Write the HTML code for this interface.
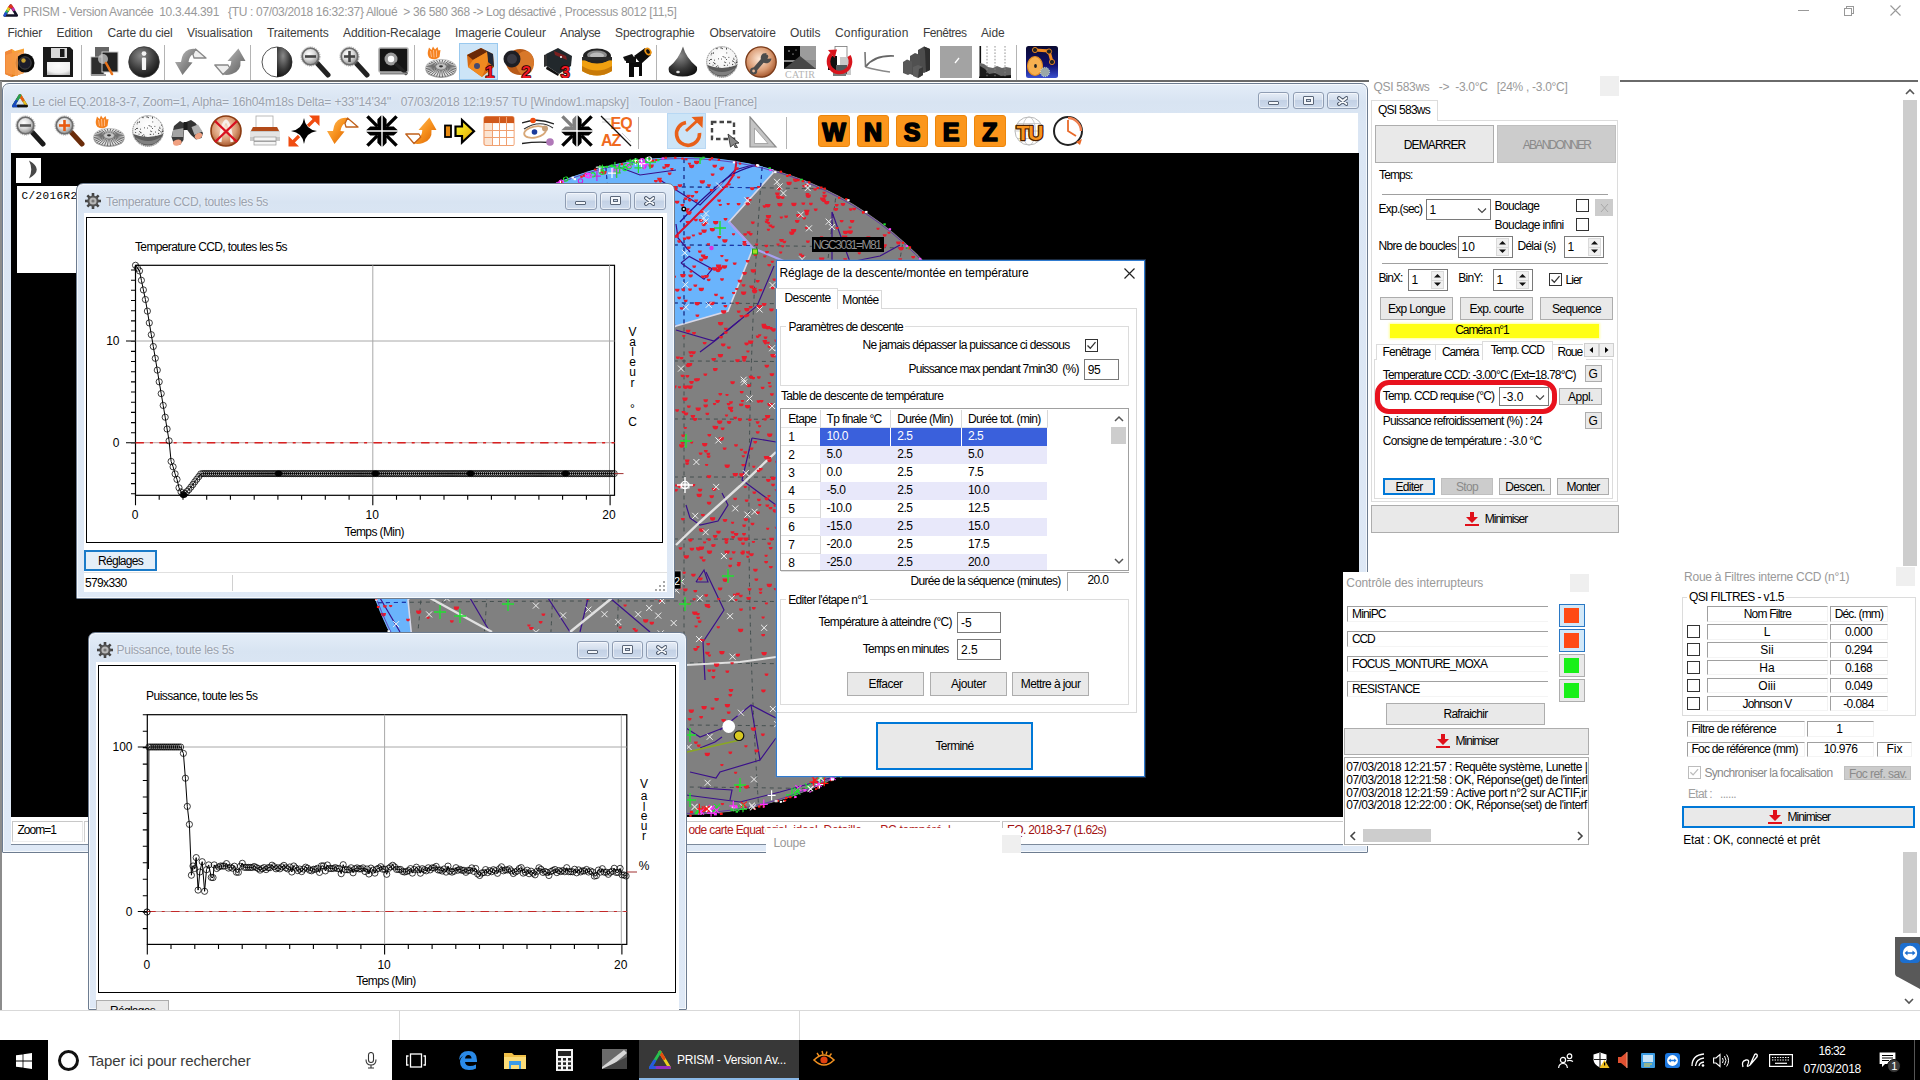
<!DOCTYPE html>
<html><head><meta charset="utf-8"><title>PRISM</title>
<style>
*{box-sizing:border-box}
html,body{margin:0;padding:0}
body{width:1920px;height:1080px;position:relative;overflow:hidden;background:#fff;font-family:"Liberation Sans",sans-serif;font-size:12px;color:#000}
.a{position:absolute}
.t{position:absolute;white-space:pre}
svg{overflow:hidden}
</style></head>
<body>
<svg width="0" height="0" style="position:absolute"><defs>
<radialGradient id="gLens" cx="40%" cy="35%" r="70%"><stop offset="0" stop-color="#fff"/><stop offset="0.5" stop-color="#d8d8d8"/><stop offset="1" stop-color="#8a8a8a"/></radialGradient>
<radialGradient id="gDark" cx="40%" cy="30%" r="75%"><stop offset="0" stop-color="#8a8a8a"/><stop offset="0.6" stop-color="#3a3a3a"/><stop offset="1" stop-color="#111"/></radialGradient>
<linearGradient id="gGrey" x1="0" y1="0" x2="1" y2="1"><stop offset="0" stop-color="#c8c8c8"/><stop offset="0.5" stop-color="#8c8c8c"/><stop offset="1" stop-color="#5c5c5c"/></linearGradient>
<linearGradient id="gOr" x1="0" y1="0" x2="1" y2="1"><stop offset="0" stop-color="#ffc46a"/><stop offset="0.5" stop-color="#f7921e"/><stop offset="1" stop-color="#d85f00"/></linearGradient>
<linearGradient id="gOrV" x1="0" y1="0" x2="0" y2="1"><stop offset="0" stop-color="#f9a53a"/><stop offset="1" stop-color="#e07a10"/></linearGradient>
<radialGradient id="gCop" cx="45%" cy="40%" r="65%"><stop offset="0" stop-color="#ffe9d8"/><stop offset="0.6" stop-color="#d99a72"/><stop offset="1" stop-color="#9a4a20"/></radialGradient>
<linearGradient id="gCont" x1="0" y1="0" x2="1" y2="0"><stop offset="0" stop-color="#fff"/><stop offset="0.5" stop-color="#fff"/><stop offset="0.5" stop-color="#222"/><stop offset="1" stop-color="#999"/></linearGradient>
<radialGradient id="gSph" cx="50%" cy="30%" r="75%"><stop offset="0" stop-color="#fff"/><stop offset="0.7" stop-color="#f0f0f0"/><stop offset="1" stop-color="#aaa"/></radialGradient>
<linearGradient id="gYel" x1="0" y1="0" x2="1" y2="1"><stop offset="0" stop-color="#ffff30"/><stop offset="1" stop-color="#e0a000"/></linearGradient>
<linearGradient id="gBlue" x1="0" y1="0" x2="0" y2="1"><stop offset="0" stop-color="#0a0a30"/><stop offset="0.6" stop-color="#101070"/><stop offset="1" stop-color="#3a50d0"/></linearGradient>
</defs></svg>
<!-- part_top -->
<div class="a" style="left:0;top:0;width:1920px;height:23px;background:#fff"></div>
<svg class="a" style="left:2.5px;top:3px" width="15.5" height="15.5" viewBox="0 0 18 18"><path d="M9 3 L16 14.5 L2 14.5Z" fill="none" stroke-linejoin="round" stroke-width="3" stroke="#141428"/><path d="M7 5.5 L9 3 L11 5.5" stroke="#e03020" stroke-width="3" stroke-linecap="round" stroke-linejoin="round" fill="none"/><path d="M7 5.5 L5 9" stroke="#e8d020" stroke-width="3"/><path d="M5 9 L3.2 12" stroke="#30c060" stroke-width="3"/><path d="M11 5.5 L13 9" stroke="#c030a0" stroke-width="3"/><path d="M3.2 12 L2 14.5" stroke="#2050d0" stroke-width="3" stroke-linecap="round"/></svg>
<div class="t" style="left:23.0px;top:4.0px;font-size:12px;line-height:16px;color:#999;letter-spacing:-0.330px;">PRISM - Version Avancée  10.3.44.391   {TU : 07/03/2018 16:32:37} Alloué  &gt; 36 580 368 -&gt; Log désactivé , Processus 8012 [11,5]</div>
<div class="a" style="left:1798px;top:10px;width:11px;height:1px;background:#999;"></div>
<div class="a" style="left:1846px;top:6px;width:8px;height:8px;border:1px solid #999"></div><div class="a" style="left:1844px;top:8px;width:8px;height:8px;border:1px solid #999;background:#fff"></div>
<svg class="a" style="left:1890px;top:5px" width="11" height="11" viewBox="0 0 11 11"><path d="M0.5 0.5 L10.5 10.5 M10.5 0.5 L0.5 10.5" stroke="#999" stroke-width="1.1"/></svg>
<div class="t" style="left:7.5px;top:25.0px;font-size:12px;line-height:16px;color:#3c3c3c;letter-spacing:-0.215px;">Fichier</div>
<div class="t" style="left:56.5px;top:25.0px;font-size:12px;line-height:16px;color:#3c3c3c;letter-spacing:-0.099px;">Edition</div>
<div class="t" style="left:107.5px;top:25.0px;font-size:12px;line-height:16px;color:#3c3c3c;letter-spacing:-0.182px;">Carte du ciel</div>
<div class="t" style="left:187.0px;top:25.0px;font-size:12px;line-height:16px;color:#3c3c3c;letter-spacing:-0.127px;">Visualisation</div>
<div class="t" style="left:267.0px;top:25.0px;font-size:12px;line-height:16px;color:#3c3c3c;letter-spacing:-0.128px;">Traitements</div>
<div class="t" style="left:343.0px;top:25.0px;font-size:12px;line-height:16px;color:#3c3c3c;letter-spacing:-0.027px;">Addition-Recalage</div>
<div class="t" style="left:455.0px;top:25.0px;font-size:12px;line-height:16px;color:#3c3c3c;letter-spacing:-0.078px;">Imagerie Couleur</div>
<div class="t" style="left:560.0px;top:25.0px;font-size:12px;line-height:16px;color:#3c3c3c;letter-spacing:-0.327px;">Analyse</div>
<div class="t" style="left:615.0px;top:25.0px;font-size:12px;line-height:16px;color:#3c3c3c;letter-spacing:-0.128px;">Spectrographie</div>
<div class="t" style="left:709.6px;top:25.0px;font-size:12px;line-height:16px;color:#3c3c3c;letter-spacing:-0.225px;">Observatoire</div>
<div class="t" style="left:790.0px;top:25.0px;font-size:12px;line-height:16px;color:#3c3c3c;letter-spacing:-0.046px;">Outils</div>
<div class="t" style="left:835.0px;top:25.0px;font-size:12px;line-height:16px;color:#3c3c3c;letter-spacing:0.163px;">Configuration</div>
<div class="t" style="left:923.0px;top:25.0px;font-size:12px;line-height:16px;color:#3c3c3c;letter-spacing:-0.482px;">Fenêtres</div>
<div class="t" style="left:981.0px;top:25.0px;font-size:12px;line-height:16px;color:#3c3c3c;letter-spacing:-0.129px;">Aide</div>
<div class="a" style="left:459px;top:43px;width:39px;height:37px;background:#cce4f7;border:1px solid #99c9ef;"></div>
<svg class="a" style="left:3px;top:46px" width="32" height="32" viewBox="0 0 32 32"><path d="M2 6 L9 3 L12 5 L21 2.5 L21 27 L9 31 L2 28Z" fill="url(#gOrV)"/><path d="M2 6 L9 3 L9 31 L2 28Z" fill="#f0883a"/><path d="M12 8 L21 5 L21 27 L12 30Z" fill="#f7a45a"/><circle cx="22" cy="17" r="9.5" fill="#0a0a0a"/><circle cx="22" cy="17" r="6.2" fill="#1c1c2a" stroke="#444" stroke-width="1"/><circle cx="20.5" cy="14.5" r="2.2" fill="#c8a030"/><path d="M3 9 L15 5 L15 30 L3 27Z" fill="#f79a46" opacity="0.85"/></svg>
<svg class="a" style="left:42px;top:46px" width="32" height="32" viewBox="0 0 32 32"><path d="M1 1 L28 1 L31 4 L31 31 L1 31Z" fill="#1a1a1a"/><rect x="9" y="2" width="16" height="10" fill="#d8d8d8"/><rect x="18" y="3" width="4.5" height="8" fill="#1a1a1a"/><rect x="5" y="16" width="23" height="13" fill="#f2f2f2"/><rect x="5" y="16" width="23" height="13" fill="url(#gSph)" opacity="0.7"/></svg>
<svg class="a" style="left:89px;top:46px" width="32" height="32" viewBox="0 0 32 32"><rect x="6" y="1" width="14" height="12" fill="#666"/><rect x="2" y="11" width="13" height="18" fill="#2e2e2e" stroke="#bbb" stroke-width="0.8"/><rect x="13" y="6" width="16" height="20" fill="#222" stroke="#ccc" stroke-width="1"/><circle cx="14" cy="13" r="5" fill="#ccc" opacity="0.75"/><path d="M17 17 L23 28" stroke="#e8721a" stroke-width="2.6" stroke-linecap="round"/><rect x="2" y="28" width="15" height="2" fill="#999"/></svg>
<svg class="a" style="left:128px;top:46px" width="32" height="32" viewBox="0 0 32 32"><circle cx="16" cy="16" r="15.3" fill="url(#gDark)" stroke="#333" stroke-width="0.8"/><circle cx="16" cy="7.6" r="2.4" fill="#f4f4f4"/><rect x="13.9" y="11.6" width="4.2" height="12.5" rx="1.2" fill="#f4f4f4"/></svg>
<svg class="a" style="left:175px;top:46px" width="32" height="32" viewBox="0 0 32 32"><path d="M0 16 L6 16 Q7 6 14 3.5 Q18 2.2 20.5 3 L18 8.5 Q14.5 9.5 13.5 16 L17.5 16.5 L7.5 29Z" fill="url(#gGrey)"/><path d="M20.5 3 L31 12 L19 12 L18 8.5Z" fill="#eee" stroke="#888" stroke-width="1.3" stroke-linejoin="round"/></svg>
<svg class="a" style="left:214px;top:46px" width="32" height="32" viewBox="0 0 32 32"><path d="M24.4 2.5 L31.5 15 L26.5 15 Q27.5 25 18 28 Q13 29.5 9 28.5 L13 22 Q17 22 17.3 15 L13.5 15Z" fill="url(#gGrey)"/><path d="M0.8 19 L14 19 L15.7 22 L9 28.5Z" fill="#eee" stroke="#888" stroke-width="1.3" stroke-linejoin="round"/></svg>
<svg class="a" style="left:261px;top:46px" width="32" height="32" viewBox="0 0 32 32"><circle cx="16" cy="16" r="15" fill="url(#gCont)" stroke="#555" stroke-width="1"/><path d="M16 1 A15 15 0 0 1 16 31Z" fill="url(#gDark)"/></svg>
<svg class="a" style="left:300px;top:46px" width="32" height="32" viewBox="0 0 32 32"><path d="M17.5 17.5 L28 29" stroke="#222" stroke-width="5" stroke-linecap="round"/><circle cx="10.5" cy="10.5" r="9.6" fill="none" stroke="#999" stroke-width="0.8" stroke-dasharray="1.2 1"/><circle cx="10.5" cy="10.5" r="8.3" fill="url(#gLens)" stroke="#6e6e6e" stroke-width="1.8"/><rect x="5" y="9.2" width="11" height="2.6" fill="#444"/></svg>
<svg class="a" style="left:339px;top:46px" width="32" height="32" viewBox="0 0 32 32"><path d="M17.5 17.5 L28 29" stroke="#222" stroke-width="5" stroke-linecap="round"/><circle cx="10.5" cy="10.5" r="9.6" fill="none" stroke="#999" stroke-width="0.8" stroke-dasharray="1.2 1"/><circle cx="10.5" cy="10.5" r="8.3" fill="url(#gLens)" stroke="#6e6e6e" stroke-width="1.8"/><rect x="5" y="9.2" width="11" height="2.6" fill="#444"/><rect x="9.2" y="5" width="2.6" height="11" fill="#444"/></svg>
<svg class="a" style="left:378px;top:46px" width="32" height="32" viewBox="0 0 32 32"><rect x="1" y="2" width="29" height="24" rx="1.5" fill="#151515" stroke="#b0b0b0" stroke-width="1.6"/><circle cx="13" cy="13" r="6.5" fill="#bbb" opacity="0.8"/><circle cx="13" cy="13" r="3.2" fill="#fff"/><path d="M18 18 L28 27.5" stroke="#222" stroke-width="3.2" stroke-linecap="round"/><rect x="2" y="26.5" width="27" height="2" fill="#888"/></svg>
<svg class="a" style="left:425px;top:46px" width="32" height="32" viewBox="0 0 32 32"><ellipse cx="16" cy="23.5" rx="15.5" ry="8.5" fill="#9a9a9a"/><ellipse cx="16" cy="22" rx="15.5" ry="8.6" fill="#e2e2e2" stroke="#a0a0a0" stroke-width="0.6"/><line x1="20.5" y1="21.0" x2="31.0" y2="22.5" stroke="#6a6a6a" stroke-width="1"/><line x1="20.4" y1="21.5" x2="30.7" y2="24.3" stroke="#6a6a6a" stroke-width="1"/><line x1="20.1" y1="22.0" x2="29.7" y2="26.0" stroke="#6a6a6a" stroke-width="1"/><line x1="19.6" y1="22.4" x2="28.1" y2="27.6" stroke="#6a6a6a" stroke-width="1"/><line x1="19.0" y1="22.8" x2="26.0" y2="28.9" stroke="#6a6a6a" stroke-width="1"/><line x1="18.3" y1="23.1" x2="23.5" y2="29.9" stroke="#6a6a6a" stroke-width="1"/><line x1="17.4" y1="23.3" x2="20.6" y2="30.7" stroke="#6a6a6a" stroke-width="1"/><line x1="16.5" y1="23.4" x2="17.6" y2="31.1" stroke="#6a6a6a" stroke-width="1"/><line x1="15.5" y1="23.4" x2="14.4" y2="31.1" stroke="#6a6a6a" stroke-width="1"/><line x1="14.6" y1="23.3" x2="11.4" y2="30.7" stroke="#6a6a6a" stroke-width="1"/><line x1="13.8" y1="23.1" x2="8.5" y2="29.9" stroke="#6a6a6a" stroke-width="1"/><line x1="13.0" y1="22.8" x2="6.0" y2="28.9" stroke="#6a6a6a" stroke-width="1"/><line x1="12.4" y1="22.4" x2="3.9" y2="27.6" stroke="#6a6a6a" stroke-width="1"/><line x1="11.9" y1="22.0" x2="2.3" y2="26.0" stroke="#6a6a6a" stroke-width="1"/><line x1="11.6" y1="21.5" x2="1.3" y2="24.3" stroke="#6a6a6a" stroke-width="1"/><line x1="11.5" y1="21.0" x2="1.0" y2="22.5" stroke="#6a6a6a" stroke-width="1"/><line x1="11.6" y1="20.5" x2="1.3" y2="20.7" stroke="#6a6a6a" stroke-width="1"/><line x1="11.9" y1="20.0" x2="2.3" y2="19.0" stroke="#6a6a6a" stroke-width="1"/><line x1="12.4" y1="19.6" x2="3.9" y2="17.4" stroke="#6a6a6a" stroke-width="1"/><line x1="13.0" y1="19.2" x2="6.0" y2="16.1" stroke="#6a6a6a" stroke-width="1"/><line x1="13.7" y1="18.9" x2="8.5" y2="15.1" stroke="#6a6a6a" stroke-width="1"/><line x1="14.6" y1="18.7" x2="11.4" y2="14.3" stroke="#6a6a6a" stroke-width="1"/><line x1="15.5" y1="18.6" x2="14.4" y2="13.9" stroke="#6a6a6a" stroke-width="1"/><line x1="16.5" y1="18.6" x2="17.6" y2="13.9" stroke="#6a6a6a" stroke-width="1"/><line x1="17.4" y1="18.7" x2="20.6" y2="14.3" stroke="#6a6a6a" stroke-width="1"/><line x1="18.2" y1="18.9" x2="23.5" y2="15.1" stroke="#6a6a6a" stroke-width="1"/><line x1="19.0" y1="19.2" x2="26.0" y2="16.1" stroke="#6a6a6a" stroke-width="1"/><line x1="19.6" y1="19.6" x2="28.1" y2="17.4" stroke="#6a6a6a" stroke-width="1"/><line x1="20.1" y1="20.0" x2="29.7" y2="19.0" stroke="#6a6a6a" stroke-width="1"/><line x1="20.4" y1="20.5" x2="30.7" y2="20.7" stroke="#6a6a6a" stroke-width="1"/><ellipse cx="16" cy="20.5" rx="5.2" ry="2.8" fill="#c4c4c4" stroke="#999" stroke-width="0.5"/><ellipse cx="16" cy="20.3" rx="2" ry="1.1" fill="#333"/><path d="M3 5 L4 1.5 L6.5 4 L8 0.5 L10 3.5 L12.5 1 L13.5 4.5 L15.5 4 L14.5 11 Q10 15 4.5 12 Q2 9 3 5Z" fill="#f58220"/><path d="M5.5 5 L6.5 11 M8.5 4 L9 11.5 M11.5 4.5 L11.5 11" stroke="#ffc090" stroke-width="0.9"/></svg>
<svg class="a" style="left:464px;top:46px" width="32" height="32" viewBox="0 0 32 32"><path d="M3 9 L17 2 L29 8 L30 21 L18 31 L4 21Z" fill="#d86a10"/><path d="M17 2 L29 8 L30 21 L24 16 L23 6Z" fill="#222a3a"/><path d="M3 9 L17 2 L23 6 L9 14Z" fill="#6a2a08"/><path d="M9 14 L23 6 L24 16 L18 31 L4 21Z" fill="#f08a20"/><circle cx="13" cy="20" r="3" fill="#444a70"/><text x="21" y="31.5" font-family="Liberation Sans" font-weight="bold" font-size="17" fill="#f01822" stroke="#200" stroke-width="1.6" paint-order="stroke" stroke-linejoin="round">1</text></svg>
<svg class="a" style="left:503px;top:46px" width="32" height="32" viewBox="0 0 32 32"><ellipse cx="17" cy="16" rx="14" ry="13" fill="#b85a18"/><ellipse cx="22" cy="17" rx="9" ry="12" fill="#d8782a"/><circle cx="9" cy="13" r="8.5" fill="#1e1e24"/><circle cx="9" cy="13" r="5" fill="#3a3a44"/><text x="18.5" y="31.5" font-family="Liberation Sans" font-weight="bold" font-size="17" fill="#f01822" stroke="#200" stroke-width="1.6" paint-order="stroke" stroke-linejoin="round">2</text></svg>
<svg class="a" style="left:542px;top:46px" width="32" height="32" viewBox="0 0 32 32"><path d="M4 8 L16 2 L30 10 L29 20 L17 28 L5 20Z" fill="#22282c"/><path d="M12 5 L24 10 L25 14 L13 9Z" fill="#7a2020"/><path d="M2 9 L5 8 L5 20 L2 21Z" fill="#333"/><path d="M5 20 L17 28 L16 30 L4 23Z" fill="#111"/><circle cx="19" cy="11" r="1" fill="#fff"/><text x="18.5" y="31.5" font-family="Liberation Sans" font-weight="bold" font-size="17" fill="#f01822" stroke="#200" stroke-width="1.6" paint-order="stroke" stroke-linejoin="round">3</text></svg>
<svg class="a" style="left:581px;top:46px" width="32" height="32" viewBox="0 0 32 32"><path d="M1 12 L1 25 Q16 34 31 25 L31 12Z" fill="#f0a010"/><path d="M1 20 L1 25 Q16 34 31 25 L31 20 Q16 29 1 20Z" fill="#c87a08"/><ellipse cx="16" cy="10" rx="14" ry="7.5" fill="#222"/><ellipse cx="16" cy="9" rx="10" ry="4.6" fill="#8a8a8a"/><ellipse cx="16" cy="9.5" rx="7" ry="3" fill="#bbb"/><rect x="1" y="11" width="30" height="3.4" fill="#2a2a2a"/></svg>
<svg class="a" style="left:620px;top:46px" width="32" height="32" viewBox="0 0 32 32"><path d="M14 10 L25 2 L31 9 L21 18Z" fill="#0c0c0c"/><ellipse cx="28" cy="5.5" rx="3.2" ry="4.2" fill="#e89010" transform="rotate(-35 28 5.5)"/><ellipse cx="28" cy="5.5" rx="1.6" ry="2.4" fill="#111" transform="rotate(-35 28 5.5)"/><path d="M3 11 L12 8 L14 11 L5 15Z" fill="#111"/><path d="M9 16 L22 16 L22 30 L19 30 L19 21 L14 21 L14 31 L9 31Z" fill="#0a0a0a"/><rect x="6" y="11" width="10" height="6" fill="#111"/></svg>
<svg class="a" style="left:667px;top:46px" width="32" height="32" viewBox="0 0 32 32"><path d="M16 0.5 Q19 12 30 21 Q31 27 25 29 Q16 32 6 29 Q0 26 2 21 Q12 13 16 0.5Z" fill="url(#gDark)"/><ellipse cx="11" cy="26" rx="1.8" ry="1.2" fill="#ddd"/></svg>
<svg class="a" style="left:706px;top:46px" width="32" height="32" viewBox="0 0 32 32"><circle cx="16" cy="16" r="15.3" fill="url(#gSph)" stroke="#555" stroke-width="0.8" stroke-dasharray="1.2 0.8"/><path d="M1.2 19 A15.3 15.3 0 0 0 30.8 19 Q16 25 1.2 19Z" fill="#5a5a5a"/><path d="M3 22 A15 15 0 0 0 29 22 Q16 30 3 22Z" fill="#8a8a8a" opacity="0.8"/><rect x="6.7" y="7.0" width="0.9" height="0.9" fill="#333"/><rect x="20.1" y="2.0" width="0.9" height="0.9" fill="#333"/><rect x="15.1" y="1.6" width="0.9" height="0.9" fill="#333"/><rect x="26.1" y="17.9" width="0.9" height="0.9" fill="#333"/><rect x="27.3" y="11.8" width="0.9" height="0.9" fill="#333"/><rect x="20.1" y="13.1" width="0.9" height="0.9" fill="#333"/><rect x="8.7" y="17.4" width="0.9" height="0.9" fill="#333"/><rect x="5.1" y="12.9" width="0.9" height="0.9" fill="#333"/><rect x="23.0" y="16.6" width="0.9" height="0.9" fill="#333"/><rect x="16.6" y="10.0" width="0.9" height="0.9" fill="#333"/><rect x="17.6" y="10.7" width="0.9" height="0.9" fill="#333"/><rect x="12.0" y="12.4" width="0.9" height="0.9" fill="#333"/><rect x="30.0" y="16.2" width="0.9" height="0.9" fill="#333"/><rect x="29.9" y="14.5" width="0.9" height="0.9" fill="#333"/><rect x="4.0" y="13.0" width="0.9" height="0.9" fill="#333"/><rect x="10.6" y="2.3" width="0.9" height="0.9" fill="#333"/><rect x="22.4" y="10.9" width="0.9" height="0.9" fill="#333"/><rect x="12.1" y="20.7" width="0.9" height="0.9" fill="#333"/><rect x="18.3" y="19.0" width="0.9" height="0.9" fill="#333"/><rect x="28.3" y="16.3" width="0.9" height="0.9" fill="#333"/><rect x="20.3" y="6.5" width="0.9" height="0.9" fill="#333"/><rect x="15.0" y="12.6" width="0.9" height="0.9" fill="#333"/><rect x="18.2" y="15.6" width="0.9" height="0.9" fill="#333"/><rect x="16.0" y="2.2" width="0.9" height="0.9" fill="#333"/><rect x="29.2" y="17.5" width="0.9" height="0.9" fill="#333"/><rect x="19.2" y="16.2" width="0.9" height="0.9" fill="#333"/><rect x="29.2" y="9.8" width="0.9" height="0.9" fill="#333"/><rect x="2.9" y="14.0" width="0.9" height="0.9" fill="#333"/><rect x="20.1" y="2.7" width="0.9" height="0.9" fill="#333"/><rect x="30.2" y="19.3" width="0.9" height="0.9" fill="#333"/><rect x="23.4" y="20.7" width="0.9" height="0.9" fill="#333"/><rect x="5.0" y="6.8" width="0.9" height="0.9" fill="#333"/><rect x="8.0" y="13.7" width="0.9" height="0.9" fill="#333"/><rect x="21.1" y="18.7" width="0.9" height="0.9" fill="#333"/><rect x="10.4" y="2.1" width="0.9" height="0.9" fill="#333"/><rect x="17.7" y="18.8" width="0.9" height="0.9" fill="#333"/><rect x="26.9" y="15.1" width="0.9" height="0.9" fill="#333"/><rect x="9.9" y="20.1" width="0.9" height="0.9" fill="#333"/><rect x="4.7" y="8.4" width="0.9" height="0.9" fill="#333"/><rect x="6.6" y="18.7" width="0.9" height="0.9" fill="#333"/><rect x="29.5" y="20.9" width="0.9" height="0.9" fill="#333"/><rect x="26.3" y="18.2" width="0.9" height="0.9" fill="#333"/><rect x="18.9" y="11.4" width="0.9" height="0.9" fill="#333"/><rect x="14.3" y="1.5" width="0.9" height="0.9" fill="#333"/><rect x="6.9" y="6.3" width="0.9" height="0.9" fill="#333"/><rect x="29.8" y="15.9" width="0.9" height="0.9" fill="#333"/><rect x="26.0" y="14.5" width="0.9" height="0.9" fill="#333"/><rect x="3.2" y="17.0" width="0.9" height="0.9" fill="#333"/><rect x="8.0" y="17.1" width="0.9" height="0.9" fill="#333"/><rect x="11.3" y="19.3" width="0.9" height="0.9" fill="#333"/><rect x="27.5" y="13.0" width="0.9" height="0.9" fill="#333"/><rect x="7.3" y="16.0" width="0.9" height="0.9" fill="#333"/></svg>
<svg class="a" style="left:745px;top:46px" width="32" height="32" viewBox="0 0 32 32"><circle cx="16" cy="16" r="15.2" fill="url(#gCop)" stroke="#7a3a18" stroke-width="1.3"/><path d="M9 24.5 L21 10.5" stroke="#4c4c4c" stroke-width="4.4" stroke-linecap="round"/><path d="M18 7.5 A5.4 5.4 0 1 0 26.5 12.5 L22.8 12.8 L20.6 10.2 L21.6 7Z" fill="#4c4c4c"/><circle cx="8.6" cy="25" r="3.6" fill="#4c4c4c"/><circle cx="8.6" cy="25" r="1.4" fill="#e8b89a"/></svg>
<svg class="a" style="left:784px;top:46px" width="32" height="32" viewBox="0 0 32 32"><rect x="0" y="0" width="16" height="16" fill="#050505"/><rect x="16" y="0" width="16" height="23" fill="#9c9c9c"/><rect x="0" y="14" width="32" height="9" fill="#8a8a8a"/><path d="M0 23 L16 10 L32 23Z" fill="#474747"/><path d="M0 16 L0 23 L9 16Z" fill="#0a0a0a"/><circle cx="5" cy="5" r="0.7" fill="#fff"/><circle cx="9" cy="8" r="0.6" fill="#fff"/><circle cx="12" cy="4" r="0.5" fill="#fff"/><text x="1" y="31.5" font-family="Liberation Serif" font-size="10" fill="#b4b4b4" textLength="30">CATIR</text></svg>
<svg class="a" style="left:823px;top:46px" width="32" height="32" viewBox="0 0 32 32"><rect x="12" y="0.5" width="12" height="22" fill="#fff" stroke="#777" stroke-width="0.8"/><rect x="5" y="10" width="9" height="14" fill="#111"/><rect x="17" y="11" width="11" height="18" fill="#c8c8c8"/><rect x="13" y="19" width="11" height="9" fill="#50585a"/><rect x="10" y="26" width="13" height="4" fill="#7a7a7a"/><path d="M8.5 8 A11 11 0 1 0 26 10" fill="none" stroke="#d8141c" stroke-width="3.6"/><path d="M5 4 L14 3.5 L11.5 12Z" fill="#d8141c"/></svg>
<svg class="a" style="left:862px;top:46px" width="32" height="32" viewBox="0 0 32 32"><path d="M3 6 L3.5 21" stroke="#777" stroke-width="1.6" fill="none"/><path d="M3.5 21 Q12 9 32 10" stroke="#666" stroke-width="1.6" fill="none"/><path d="M3.5 21 Q14 24 28 26" stroke="#888" stroke-width="1.6" fill="none"/></svg>
<svg class="a" style="left:901px;top:46px" width="32" height="32" viewBox="0 0 32 32"><path d="M17 4 L23 0.5 L29 3 L29 24 L23 27 L17 25Z" fill="#4c4c4c"/><path d="M23 0.5 L29 3 L29 24 L25 26 L24 5Z" fill="#2e2e2e"/><path d="M9 10 L14 7 L19 9 L19 27 L14 30 L9 28Z" fill="#505050"/><path d="M2 16 L6 13.5 L11 15.5 L11 27 L7 29 L2 27Z" fill="#585858"/><path d="M12 21 L17 19 L22 21 L22 29 L17 32 L12 30Z" fill="#5e5e5e"/><path d="M17 32 L22 29 L22 21 L18 23Z" fill="#3a3a3a"/></svg>
<svg class="a" style="left:940px;top:46px" width="32" height="32" viewBox="0 0 32 32"><rect x="0" y="0" width="32" height="32" fill="#a3a3a3"/><path d="M15 17 L19 12" stroke="#fff" stroke-width="1.3"/></svg>
<svg class="a" style="left:979px;top:46px" width="32" height="32" viewBox="0 0 32 32"><rect x="0.5" y="0" width="1.6" height="32" fill="#111"/><path d="M1 17 L5 18 L9 21 L14 22 L18 20 L23 22 L27 21 L32 22 L32 32 L1 32Z" fill="#666"/><path d="M1 20 L6 23 L10 28 L16 27 L22 30 L32 29 L32 32 L1 32Z" fill="#1c1c1c"/><path d="M8 0 L8 32 M16 0 L16 32 M26 0 L26 32" stroke="#888" stroke-width="0.9" stroke-dasharray="1.6 1.6"/><rect x="0" y="30.6" width="32" height="1.4" fill="#111"/></svg>
<svg class="a" style="left:1026px;top:46px" width="32" height="32" viewBox="0 0 32 32"><rect x="0" y="0" width="32" height="32" rx="2.5" fill="url(#gBlue)"/><path d="M9 4 L23 5 L26 16" stroke="#f08a20" stroke-width="3" fill="none"/><circle cx="9" cy="4" r="2.6" fill="#222" stroke="#f08a20" stroke-width="0.9"/><circle cx="23" cy="5.5" r="2.6" fill="#222" stroke="#f08a20" stroke-width="0.9"/><circle cx="26" cy="16" r="2.6" fill="#222" stroke="#f08a20" stroke-width="0.9"/><ellipse cx="9" cy="20" rx="7.5" ry="9.5" fill="#f7b050" stroke="#e08a20" stroke-width="1.2"/><ellipse cx="9.5" cy="20" rx="1.4" ry="2" fill="#222"/><circle cx="19" cy="26" r="4.6" fill="#9aa8a8" stroke="#dfe" stroke-width="0.8" stroke-dasharray="1 1"/></svg>
<div class="a" style="left:81px;top:45px;width:1px;height:35px;background:#b4b4b4;"></div>
<div class="a" style="left:164px;top:45px;width:1px;height:35px;background:#b4b4b4;"></div>
<div class="a" style="left:250px;top:45px;width:1px;height:35px;background:#b4b4b4;"></div>
<div class="a" style="left:414px;top:45px;width:1px;height:35px;background:#b4b4b4;"></div>
<div class="a" style="left:656px;top:45px;width:1px;height:35px;background:#b4b4b4;"></div>
<div class="a" style="left:1016px;top:45px;width:1px;height:35px;background:#b4b4b4;"></div>
<!-- part_sky -->
<div class="a" style="left:0px;top:80px;width:1918px;height:2px;background:#6a6a6a;"></div>
<div class="a" style="left:0px;top:81px;width:2px;height:929px;background:#8c8c8c;"></div>
<div class="a" style="left:2px;top:83px;width:1366px;height:770px;border:1px solid #6d7c90;border-radius:7px 7px 1px 1px;background:linear-gradient(#e4edf8,#d8e4f2 18px,#dbe6f4 40px,#dfe9f6);box-shadow:inset 0 0 0 1px rgba(255,255,255,.7)"></div>
<svg class="a" style="left:12px;top:93px" width="16" height="16" viewBox="0 0 18 18"><path d="M9 2.5 L16.5 14.5 L1.5 14.5Z" fill="none" stroke-linejoin="round" stroke-width="2.8" stroke="#222"/><path d="M9 2.5 L16.5 14.5" stroke="#e8c020" stroke-width="2.8" stroke-linecap="round"/><path d="M9 2.5 L12.5 8" stroke="#e85a10" stroke-width="2.8" stroke-linecap="round"/><path d="M9 2.5 L1.5 14.5" stroke="#28a050" stroke-width="2.8" stroke-linecap="round"/><path d="M5 9 L1.5 14.5 L7 14.5" stroke="#1848c0" stroke-width="2.8" stroke-linecap="round" fill="none"/><path d="M7 14.5 L16.5 14.5" stroke="#111" stroke-width="2.8" stroke-linecap="round"/></svg>
<div class="t" style="left:32.0px;top:93.5px;font-size:12px;line-height:16px;color:#9aa2ae;letter-spacing:-0.128px;text-shadow:0 0 3px #fff">Le ciel EQ.2018-3-7, Zoom=1, Alpha= 16h04m18s Delta= +33"14'34''   07/03/2018 12:19:57 TU [Window1.mapsky]   Toulon - Baou [France]</div>
<div class="a" style="left:1258px;top:92px;width:31px;height:17px;border:1px solid #8f9db3;border-radius:3px;background:linear-gradient(#e6edf7,#d3deed 45%,#c3d1e5 50%,#cddaec);box-shadow:inset 0 0 0 1px rgba(255,255,255,.55)"></div><div class="a" style="left:1292.5px;top:92px;width:31px;height:17px;border:1px solid #8f9db3;border-radius:3px;background:linear-gradient(#e6edf7,#d3deed 45%,#c3d1e5 50%,#cddaec);box-shadow:inset 0 0 0 1px rgba(255,255,255,.55)"></div><div class="a" style="left:1327.0px;top:92px;width:32px;height:17px;border:1px solid #8f9db3;border-radius:3px;background:linear-gradient(#e6edf7,#d3deed 45%,#c3d1e5 50%,#cddaec);box-shadow:inset 0 0 0 1px rgba(255,255,255,.55)"></div><div class="a" style="left:1268px;top:101px;width:11px;height:4px;border:1px solid #5a6678;background:#f4f7fb;border-radius:1px"></div><div class="a" style="left:1302.5px;top:96px;width:11px;height:9px;border:1px solid #5a6678;background:#f4f7fb;border-radius:1px"></div><div class="a" style="left:1305.5px;top:99px;width:5px;height:3px;border:1px solid #5a6678;background:#d0dbea"></div><svg class="a" style="left:1336.8px;top:95.6px" width="11.5" height="10" viewBox="0 0 11.5 10"><path d="M2 2 L9.5 8 M9.5 2 L2 8" stroke="#4a5668" stroke-width="3.8" stroke-linecap="round"/><path d="M2 2 L9.5 8 M9.5 2 L2 8" stroke="#f8fafc" stroke-width="1.9" stroke-linecap="round"/></svg>
<div class="a" style="left:11px;top:113px;width:1347px;height:40.5px;background:#fff;"></div>
<svg class="a" style="left:15px;top:115px" width="32" height="32" viewBox="0 0 32 32"><path d="M17.5 17.5 L28 29" stroke="#1a1a1a" stroke-width="5" stroke-linecap="round"/><circle cx="10.5" cy="10.5" r="9.6" fill="none" stroke="#999" stroke-width="0.8" stroke-dasharray="1.2 1"/><circle cx="10.5" cy="10.5" r="8.3" fill="url(#gLens)" stroke="#6e6e6e" stroke-width="1.8"/><rect x="5" y="9.2" width="11" height="2.6" fill="#555"/></svg>
<svg class="a" style="left:54px;top:115px" width="32" height="32" viewBox="0 0 32 32"><path d="M17.5 17.5 L28 29" stroke="#6a2c0a" stroke-width="5" stroke-linecap="round"/><circle cx="10.5" cy="10.5" r="9.6" fill="none" stroke="#999" stroke-width="0.8" stroke-dasharray="1.2 1"/><circle cx="10.5" cy="10.5" r="8.3" fill="url(#gLens)" stroke="#6e6e6e" stroke-width="1.8"/><rect x="5" y="9.2" width="11" height="2.6" fill="#e85a10"/><rect x="9.2" y="5" width="2.6" height="11" fill="#e85a10"/></svg>
<svg class="a" style="left:93px;top:115px" width="32" height="32" viewBox="0 0 32 32"><ellipse cx="16" cy="23.5" rx="15.5" ry="8.5" fill="#9a9a9a"/><ellipse cx="16" cy="22" rx="15.5" ry="8.6" fill="#e2e2e2" stroke="#a0a0a0" stroke-width="0.6"/><line x1="20.5" y1="21.0" x2="31.0" y2="22.5" stroke="#6a6a6a" stroke-width="1"/><line x1="20.4" y1="21.5" x2="30.7" y2="24.3" stroke="#6a6a6a" stroke-width="1"/><line x1="20.1" y1="22.0" x2="29.7" y2="26.0" stroke="#6a6a6a" stroke-width="1"/><line x1="19.6" y1="22.4" x2="28.1" y2="27.6" stroke="#6a6a6a" stroke-width="1"/><line x1="19.0" y1="22.8" x2="26.0" y2="28.9" stroke="#6a6a6a" stroke-width="1"/><line x1="18.3" y1="23.1" x2="23.5" y2="29.9" stroke="#6a6a6a" stroke-width="1"/><line x1="17.4" y1="23.3" x2="20.6" y2="30.7" stroke="#6a6a6a" stroke-width="1"/><line x1="16.5" y1="23.4" x2="17.6" y2="31.1" stroke="#6a6a6a" stroke-width="1"/><line x1="15.5" y1="23.4" x2="14.4" y2="31.1" stroke="#6a6a6a" stroke-width="1"/><line x1="14.6" y1="23.3" x2="11.4" y2="30.7" stroke="#6a6a6a" stroke-width="1"/><line x1="13.8" y1="23.1" x2="8.5" y2="29.9" stroke="#6a6a6a" stroke-width="1"/><line x1="13.0" y1="22.8" x2="6.0" y2="28.9" stroke="#6a6a6a" stroke-width="1"/><line x1="12.4" y1="22.4" x2="3.9" y2="27.6" stroke="#6a6a6a" stroke-width="1"/><line x1="11.9" y1="22.0" x2="2.3" y2="26.0" stroke="#6a6a6a" stroke-width="1"/><line x1="11.6" y1="21.5" x2="1.3" y2="24.3" stroke="#6a6a6a" stroke-width="1"/><line x1="11.5" y1="21.0" x2="1.0" y2="22.5" stroke="#6a6a6a" stroke-width="1"/><line x1="11.6" y1="20.5" x2="1.3" y2="20.7" stroke="#6a6a6a" stroke-width="1"/><line x1="11.9" y1="20.0" x2="2.3" y2="19.0" stroke="#6a6a6a" stroke-width="1"/><line x1="12.4" y1="19.6" x2="3.9" y2="17.4" stroke="#6a6a6a" stroke-width="1"/><line x1="13.0" y1="19.2" x2="6.0" y2="16.1" stroke="#6a6a6a" stroke-width="1"/><line x1="13.7" y1="18.9" x2="8.5" y2="15.1" stroke="#6a6a6a" stroke-width="1"/><line x1="14.6" y1="18.7" x2="11.4" y2="14.3" stroke="#6a6a6a" stroke-width="1"/><line x1="15.5" y1="18.6" x2="14.4" y2="13.9" stroke="#6a6a6a" stroke-width="1"/><line x1="16.5" y1="18.6" x2="17.6" y2="13.9" stroke="#6a6a6a" stroke-width="1"/><line x1="17.4" y1="18.7" x2="20.6" y2="14.3" stroke="#6a6a6a" stroke-width="1"/><line x1="18.2" y1="18.9" x2="23.5" y2="15.1" stroke="#6a6a6a" stroke-width="1"/><line x1="19.0" y1="19.2" x2="26.0" y2="16.1" stroke="#6a6a6a" stroke-width="1"/><line x1="19.6" y1="19.6" x2="28.1" y2="17.4" stroke="#6a6a6a" stroke-width="1"/><line x1="20.1" y1="20.0" x2="29.7" y2="19.0" stroke="#6a6a6a" stroke-width="1"/><line x1="20.4" y1="20.5" x2="30.7" y2="20.7" stroke="#6a6a6a" stroke-width="1"/><ellipse cx="16" cy="20.5" rx="5.2" ry="2.8" fill="#c4c4c4" stroke="#999" stroke-width="0.5"/><ellipse cx="16" cy="20.3" rx="2" ry="1.1" fill="#333"/><path d="M3 5 L4 1.5 L6.5 4 L8 0.5 L10 3.5 L12.5 1 L13.5 4.5 L15.5 4 L14.5 11 Q10 15 4.5 12 Q2 9 3 5Z" fill="#f58220"/><path d="M5.5 5 L6.5 11 M8.5 4 L9 11.5 M11.5 4.5 L11.5 11" stroke="#ffc090" stroke-width="0.9"/></svg>
<svg class="a" style="left:132px;top:115px" width="32" height="32" viewBox="0 0 32 32"><circle cx="16" cy="16" r="15.3" fill="url(#gSph)" stroke="#555" stroke-width="0.8" stroke-dasharray="1.2 0.8"/><path d="M1.2 19 A15.3 15.3 0 0 0 30.8 19 Q16 25 1.2 19Z" fill="#5a5a5a"/><path d="M3 22 A15 15 0 0 0 29 22 Q16 30 3 22Z" fill="#8a8a8a" opacity="0.8"/><rect x="6.7" y="7.0" width="0.9" height="0.9" fill="#333"/><rect x="20.1" y="2.0" width="0.9" height="0.9" fill="#333"/><rect x="15.1" y="1.6" width="0.9" height="0.9" fill="#333"/><rect x="26.1" y="17.9" width="0.9" height="0.9" fill="#333"/><rect x="27.3" y="11.8" width="0.9" height="0.9" fill="#333"/><rect x="20.1" y="13.1" width="0.9" height="0.9" fill="#333"/><rect x="8.7" y="17.4" width="0.9" height="0.9" fill="#333"/><rect x="5.1" y="12.9" width="0.9" height="0.9" fill="#333"/><rect x="23.0" y="16.6" width="0.9" height="0.9" fill="#333"/><rect x="16.6" y="10.0" width="0.9" height="0.9" fill="#333"/><rect x="17.6" y="10.7" width="0.9" height="0.9" fill="#333"/><rect x="12.0" y="12.4" width="0.9" height="0.9" fill="#333"/><rect x="30.0" y="16.2" width="0.9" height="0.9" fill="#333"/><rect x="29.9" y="14.5" width="0.9" height="0.9" fill="#333"/><rect x="4.0" y="13.0" width="0.9" height="0.9" fill="#333"/><rect x="10.6" y="2.3" width="0.9" height="0.9" fill="#333"/><rect x="22.4" y="10.9" width="0.9" height="0.9" fill="#333"/><rect x="12.1" y="20.7" width="0.9" height="0.9" fill="#333"/><rect x="18.3" y="19.0" width="0.9" height="0.9" fill="#333"/><rect x="28.3" y="16.3" width="0.9" height="0.9" fill="#333"/><rect x="20.3" y="6.5" width="0.9" height="0.9" fill="#333"/><rect x="15.0" y="12.6" width="0.9" height="0.9" fill="#333"/><rect x="18.2" y="15.6" width="0.9" height="0.9" fill="#333"/><rect x="16.0" y="2.2" width="0.9" height="0.9" fill="#333"/><rect x="29.2" y="17.5" width="0.9" height="0.9" fill="#333"/><rect x="19.2" y="16.2" width="0.9" height="0.9" fill="#333"/><rect x="29.2" y="9.8" width="0.9" height="0.9" fill="#333"/><rect x="2.9" y="14.0" width="0.9" height="0.9" fill="#333"/><rect x="20.1" y="2.7" width="0.9" height="0.9" fill="#333"/><rect x="30.2" y="19.3" width="0.9" height="0.9" fill="#333"/><rect x="23.4" y="20.7" width="0.9" height="0.9" fill="#333"/><rect x="5.0" y="6.8" width="0.9" height="0.9" fill="#333"/><rect x="8.0" y="13.7" width="0.9" height="0.9" fill="#333"/><rect x="21.1" y="18.7" width="0.9" height="0.9" fill="#333"/><rect x="10.4" y="2.1" width="0.9" height="0.9" fill="#333"/><rect x="17.7" y="18.8" width="0.9" height="0.9" fill="#333"/><rect x="26.9" y="15.1" width="0.9" height="0.9" fill="#333"/><rect x="9.9" y="20.1" width="0.9" height="0.9" fill="#333"/><rect x="4.7" y="8.4" width="0.9" height="0.9" fill="#333"/><rect x="6.6" y="18.7" width="0.9" height="0.9" fill="#333"/><rect x="29.5" y="20.9" width="0.9" height="0.9" fill="#333"/><rect x="26.3" y="18.2" width="0.9" height="0.9" fill="#333"/><rect x="18.9" y="11.4" width="0.9" height="0.9" fill="#333"/><rect x="14.3" y="1.5" width="0.9" height="0.9" fill="#333"/><rect x="6.9" y="6.3" width="0.9" height="0.9" fill="#333"/><rect x="29.8" y="15.9" width="0.9" height="0.9" fill="#333"/><rect x="26.0" y="14.5" width="0.9" height="0.9" fill="#333"/><rect x="3.2" y="17.0" width="0.9" height="0.9" fill="#333"/><rect x="8.0" y="17.1" width="0.9" height="0.9" fill="#333"/><rect x="11.3" y="19.3" width="0.9" height="0.9" fill="#333"/><rect x="27.5" y="13.0" width="0.9" height="0.9" fill="#333"/><rect x="7.3" y="16.0" width="0.9" height="0.9" fill="#333"/></svg>
<svg class="a" style="left:171px;top:115px" width="32" height="32" viewBox="0 0 32 32"><g transform="translate(0,3)"><path d="M3 8 L9 3 L13.5 5.5 L12.5 22 L9 27 L3 26 L0.5 19Z" fill="#3a3a3a"/><path d="M2 12 L12.8 10 L12.3 19 L1 19Z" fill="#a4a4a4"/><path d="M15 4 L20 2 L24.5 5 L32 15 L30.5 20 L25 21.5 L20 17 L15.5 11Z" fill="#333"/><path d="M20.5 9 L27 6.5 L31.5 13.5 L23.5 17Z" fill="#b0b0b0"/><rect x="12.5" y="4" width="4" height="8" fill="#1c1c1c"/><ellipse cx="6.3" cy="24.6" rx="4.4" ry="3" fill="#f0a080" transform="rotate(-15 6.3 24.6)"/><ellipse cx="27.5" cy="18" rx="4" ry="2.8" fill="#f0a080" transform="rotate(-30 27.5 18)"/></g></svg>
<svg class="a" style="left:210px;top:115px" width="32" height="32" viewBox="0 0 32 32"><circle cx="16" cy="16" r="15" fill="url(#gCop)" stroke="#8a3a10" stroke-width="1.6"/><path d="M10 27 Q12 8 16 6 Q20 8 22 27" fill="none" stroke="#f8f0ea" stroke-width="3"/><path d="M5 6 L27 27 M27 6 L5 27" stroke="#d81020" stroke-width="2.4"/></svg>
<svg class="a" style="left:249px;top:115px" width="32" height="32" viewBox="0 0 32 32"><rect x="7" y="1" width="17" height="12" fill="#fff" stroke="#aaa" stroke-width="0.8"/><path d="M4 12 L28 12 L31 17 L31 26 L1 26 L1 17Z" fill="#c8c8c8"/><path d="M4 12 L28 12 L30 16 L2 16Z" fill="#b24a18"/><rect x="1" y="17" width="30" height="5" fill="#e4e4e4"/><rect x="5" y="22" width="22" height="8" fill="#f4f4f4" stroke="#999" stroke-width="0.7"/><rect x="5" y="25.5" width="22" height="1.4" fill="#999"/></svg>
<svg class="a" style="left:288px;top:115px" width="32" height="32" viewBox="0 0 32 32"><path d="M16 3 Q17.5 14.5 29 16 Q17.5 17.5 16 29 Q14.5 17.5 3 16 Q14.5 14.5 16 3Z" fill="#000"/><path d="M20 11 L27 4" stroke="#f04c10" stroke-width="3.2"/><path d="M21 0.5 L31.5 0.5 L31.5 11Z" fill="#f04c10"/><path d="M11 21 L5 27" stroke="#f04c10" stroke-width="3.2"/><path d="M0.5 21 L0.5 31.5 L11 31.5Z" fill="#f04c10"/></svg>
<svg class="a" style="left:327px;top:115px" width="32" height="32" viewBox="0 0 32 32"><path d="M0 16 L6 16 Q7 6 14 3.5 Q18 2.2 20.5 3 L18 8.5 Q14.5 9.5 13.5 16 L17.5 16.5 L7.5 29Z" fill="url(#gOr)"/><path d="M20.5 3 L31 12 L19 12 L18 8.5Z" fill="#fff" stroke="#c0601a" stroke-width="1.3" stroke-linejoin="round"/></svg>
<svg class="a" style="left:366px;top:115px" width="32" height="32" viewBox="0 0 32 32"><g transform="rotate(0 16 16)" fill="#000"><path d="M0.2 2.6 L2.6 0.2 L12.6 10.2 L10.2 12.6Z"/><path d="M15.3 0.2 L15.3 15.3 L0.2 15.3 L4.3 11.4 L11.4 11.4 L11.4 4.3Z"/></g><g transform="rotate(90 16 16)" fill="#000"><path d="M0.2 2.6 L2.6 0.2 L12.6 10.2 L10.2 12.6Z"/><path d="M15.3 0.2 L15.3 15.3 L0.2 15.3 L4.3 11.4 L11.4 11.4 L11.4 4.3Z"/></g><g transform="rotate(180 16 16)" fill="#000"><path d="M0.2 2.6 L2.6 0.2 L12.6 10.2 L10.2 12.6Z"/><path d="M15.3 0.2 L15.3 15.3 L0.2 15.3 L4.3 11.4 L11.4 11.4 L11.4 4.3Z"/></g><g transform="rotate(270 16 16)" fill="#000"><path d="M0.2 2.6 L2.6 0.2 L12.6 10.2 L10.2 12.6Z"/><path d="M15.3 0.2 L15.3 15.3 L0.2 15.3 L4.3 11.4 L11.4 11.4 L11.4 4.3Z"/></g></svg>
<svg class="a" style="left:405px;top:115px" width="32" height="32" viewBox="0 0 32 32"><path d="M24.4 2.5 L31.5 15 L26.5 15 Q27.5 25 18 28 Q13 29.5 9 28.5 L13 22 Q17 22 17.3 15 L13.5 15Z" fill="url(#gOr)"/><path d="M0.8 19 L14 19 L15.7 22 L9 28.5Z" fill="#fff" stroke="#c0601a" stroke-width="1.3" stroke-linejoin="round"/></svg>
<svg class="a" style="left:444px;top:115px" width="32" height="32" viewBox="0 0 32 32"><rect x="1" y="10.5" width="6" height="11.5" fill="#e88a10" stroke="#000" stroke-width="1.8"/><path d="M11.5 11.5 L18 11.5 L18 5 L30 16.2 L18 27.5 L18 21 L11.5 21Z" fill="url(#gYel)" stroke="#000" stroke-width="2.2"/></svg>
<svg class="a" style="left:483px;top:115px" width="32" height="32" viewBox="0 0 32 32"><rect x="1" y="1.5" width="30" height="29" rx="2" fill="#fbe4d2" stroke="#f0a070" stroke-width="1.2"/><path d="M1 8 L1 3.5 Q1 1.5 3 1.5 L29 1.5 Q31 1.5 31 3.5 L31 8Z" fill="#d0581a"/><rect x="9.5" y="8.5" width="21" height="21.5" fill="#fff"/><path d="M9.5 8 V30 M16.5 2 V30 M23.5 2 V30 M1 15.5 H31 M1 22.5 H31" stroke="#f0a070" stroke-width="1"/></svg>
<svg class="a" style="left:522px;top:115px" width="32" height="32" viewBox="0 0 32 32"><path d="M0 8 Q16 2 32 9" stroke="#222" stroke-width="1.3" fill="none"/><path d="M2 14 Q18 4 31 13" stroke="#333" stroke-width="1.1" fill="none"/><ellipse cx="13" cy="17" rx="11" ry="5.5" fill="#fff" stroke="#d8a878" stroke-width="1.8" transform="rotate(-12 13 17)"/><path d="M0 28.5 Q14 26.5 28 27.5" stroke="#222" stroke-width="1.4" fill="none"/><circle cx="11" cy="5.5" r="2.8" fill="#f04c10"/><circle cx="12.5" cy="17" r="2.8" fill="#1a3a9a"/><circle cx="28" cy="27" r="3.8" fill="#b078b8"/><circle cx="23" cy="13.5" r="3" fill="#c8a078"/></svg>
<svg class="a" style="left:561px;top:115px" width="32" height="32" viewBox="0 0 32 32"><g transform="rotate(0 16 16)" fill="#808080"><path d="M0.2 2.6 L2.6 0.2 L12.6 10.2 L10.2 12.6Z"/><path d="M15.3 0.2 L15.3 15.3 L0.2 15.3 L4.3 11.4 L11.4 11.4 L11.4 4.3Z"/></g><g transform="rotate(90 16 16)" fill="#000"><path d="M0.2 2.6 L2.6 0.2 L12.6 10.2 L10.2 12.6Z"/><path d="M15.3 0.2 L15.3 15.3 L0.2 15.3 L4.3 11.4 L11.4 11.4 L11.4 4.3Z"/></g><g transform="rotate(180 16 16)" fill="#000"><path d="M0.2 2.6 L2.6 0.2 L12.6 10.2 L10.2 12.6Z"/><path d="M15.3 0.2 L15.3 15.3 L0.2 15.3 L4.3 11.4 L11.4 11.4 L11.4 4.3Z"/></g><g transform="rotate(270 16 16)" fill="#000"><path d="M0.2 2.6 L2.6 0.2 L12.6 10.2 L10.2 12.6Z"/><path d="M15.3 0.2 L15.3 15.3 L0.2 15.3 L4.3 11.4 L11.4 11.4 L11.4 4.3Z"/></g></svg>
<svg class="a" style="left:600px;top:115px" width="32" height="32" viewBox="0 0 32 32"><path d="M2 4 H12 M2 7 H10 M20 20 L30 30 M22 18 L31 27" stroke="#ccc" stroke-width="1"/><text x="10.5" y="13.5" font-family="Liberation Sans" font-weight="bold" font-size="16" fill="#f06a20" letter-spacing="-1">EQ</text><text x="1" y="30.5" font-family="Liberation Sans" font-weight="bold" font-size="16" fill="#f06a20" letter-spacing="-1">AZ</text><path d="M1 1 L31 31" stroke="#111" stroke-width="1.2"/></svg>
<div class="a" style="left:638px;top:117px;width:1px;height:32px;background:#b4b4b4;"></div>
<div class="a" style="left:667px;top:113px;width:39px;height:36px;background:#cce4f7;border:1px solid #b8d8f4;"></div>
<svg class="a" style="left:671.5px;top:116px" width="32" height="32" viewBox="0 0 32 32"><path d="M14 6.5 A11.5 11.5 0 1 0 27.5 17" fill="none" stroke="#e8601a" stroke-width="3.6"/><path d="M14 15 L26 4" stroke="#e8601a" stroke-width="3"/><path d="M19.5 1 L31 0.5 L30.5 12Z" fill="#e8601a"/></svg>
<svg class="a" style="left:710px;top:116px" width="32" height="32" viewBox="0 0 32 32"><rect x="2" y="6" width="22" height="17" fill="none" stroke="#444" stroke-width="2.4" stroke-dasharray="4.5 3"/><path d="M18 18 L29 27 L25 27.5 L27.5 31.5 L25.5 32 L23.5 28.5 L20.5 31Z" fill="#888" stroke="#333" stroke-width="0.9"/></svg>
<svg class="a" style="left:749px;top:116px" width="32" height="32" viewBox="0 0 32 32"><path d="M1 1 L27 31 L1 31Z" fill="#c4c4c4" stroke="#8a8a8a" stroke-width="1.2"/><path d="M5.5 12 L19 27.5 L5.5 27.5Z" fill="#fff" stroke="#999" stroke-width="0.8"/></svg>
<div class="a" style="left:786px;top:117px;width:1px;height:32px;background:#b4b4b4;"></div>
<svg class="a" style="left:818px;top:115px" width="32" height="32" viewBox="0 0 32 32"><rect x="0.5" y="0.5" width="31" height="31" rx="2.5" fill="#fb961c" stroke="#ec860c" stroke-width="1"/><text x="16" y="25.5" text-anchor="middle" font-family="Liberation Sans" font-weight="bold" font-size="25" fill="#000" stroke="#000" stroke-width="1.7" stroke-linejoin="round">W</text></svg>
<svg class="a" style="left:857px;top:115px" width="32" height="32" viewBox="0 0 32 32"><rect x="0.5" y="0.5" width="31" height="31" rx="2.5" fill="#fb961c" stroke="#ec860c" stroke-width="1"/><text x="16" y="25.5" text-anchor="middle" font-family="Liberation Sans" font-weight="bold" font-size="25" fill="#000" stroke="#000" stroke-width="1.7" stroke-linejoin="round">N</text></svg>
<svg class="a" style="left:896px;top:115px" width="32" height="32" viewBox="0 0 32 32"><rect x="0.5" y="0.5" width="31" height="31" rx="2.5" fill="#fb961c" stroke="#ec860c" stroke-width="1"/><text x="16" y="25.5" text-anchor="middle" font-family="Liberation Sans" font-weight="bold" font-size="25" fill="#000" stroke="#000" stroke-width="1.7" stroke-linejoin="round">S</text></svg>
<svg class="a" style="left:935px;top:115px" width="32" height="32" viewBox="0 0 32 32"><rect x="0.5" y="0.5" width="31" height="31" rx="2.5" fill="#fb961c" stroke="#ec860c" stroke-width="1"/><text x="16" y="25.5" text-anchor="middle" font-family="Liberation Sans" font-weight="bold" font-size="25" fill="#000" stroke="#000" stroke-width="1.7" stroke-linejoin="round">E</text></svg>
<svg class="a" style="left:974px;top:115px" width="32" height="32" viewBox="0 0 32 32"><rect x="0.5" y="0.5" width="31" height="31" rx="2.5" fill="#fb961c" stroke="#ec860c" stroke-width="1"/><text x="16" y="25.5" text-anchor="middle" font-family="Liberation Sans" font-weight="bold" font-size="25" fill="#000" stroke="#000" stroke-width="1.7" stroke-linejoin="round">Z</text></svg>
<svg class="a" style="left:1013px;top:115px" width="32" height="32" viewBox="0 0 32 32"><circle cx="16" cy="16" r="14" fill="#fff" stroke="#b0b0b0" stroke-width="0.9"/><ellipse cx="16" cy="16" rx="6.5" ry="14" fill="none" stroke="#c0c0c0" stroke-width="0.8"/><path d="M2 16 H30 M5 8.5 H27 M5 23.5 H27" stroke="#c0c0c0" stroke-width="0.8"/><text x="16.5" y="24.5" text-anchor="middle" font-family="Liberation Sans" font-weight="bold" font-size="21" fill="#f7941d" stroke="#4a2000" stroke-width="2.6" paint-order="stroke" stroke-linejoin="round" letter-spacing="-1">TU</text></svg>
<svg class="a" style="left:1052px;top:115px" width="32" height="32" viewBox="0 0 32 32"><circle cx="16" cy="16" r="14" fill="#fff" stroke="#222" stroke-width="2"/><path d="M16 3 A13 13 0 0 1 29 16" fill="none" stroke="#f08050" stroke-width="2.4"/><path d="M16 5 V16 L24 21" fill="none" stroke="#e86a2a" stroke-width="1.8"/><path d="M24 27 L30 24 L28 30Z" fill="#e86a2a"/></svg>
<div class="a" style="left:11px;top:153.4px;width:1348px;height:664px;background:#000;"></div>
<svg class="a" style="left:12px;top:153px" width="1346" height="664" viewBox="0 0 1346 664"><defs><clipPath id="disk"><circle cx="672" cy="333" r="329"/></clipPath><clipPath id="disk2"><circle cx="672" cy="333" r="331.5"/></clipPath></defs><rect width="1346" height="664" fill="#000"/><g clip-path="url(#disk)"><circle cx="672" cy="333" r="329" fill="#808080"/><polygon points="318.0,-3.0 761.0,-3.0 761.0,20.0 717.0,69.0 741.0,95.0 716.0,158.0 664.0,173.0 628.0,192.0 548.0,267.0 458.0,367.0 396.0,447.0 400.0,487.0 388.0,547.0 318.0,547.0" fill="#6ab4fc" stroke="#d8d8e8" stroke-width="1.6"/><clipPath id="bluec"><polygon points="318.0,-3.0 761.0,-3.0 761.0,20.0 717.0,69.0 741.0,95.0 716.0,158.0 664.0,173.0 628.0,192.0 548.0,267.0 458.0,367.0 396.0,447.0 400.0,487.0 388.0,547.0 318.0,547.0"/></clipPath><polyline points="717.0,69.0 741.0,95.0 788.0,115.0" fill="none" stroke="#a8a0f0" stroke-width="2.2"/><g fill="none" stroke="#3c4848" stroke-width="0.9" stroke-dasharray="4 4"><path d="M192 -10 Q360 333 216 674" /><path d="M272 -10 Q412 333 292 674" /><path d="M352 -10 Q464 333 368 674" /><path d="M432 -10 Q516 333 444 674" /><path d="M512 -10 Q568 333 520 674" /><path d="M592 -10 Q620 333 596 674" /><path d="M672 -10 Q672 333 672 674" /><path d="M752 -10 Q724 333 748 674" /><path d="M832 -10 Q776 333 824 674" /><path d="M912 -10 Q828 333 900 674" /><path d="M992 -10 Q880 333 976 674" /><path d="M1072 -10 Q932 333 1052 674" /><path d="M1152 -10 Q984 333 1128 674" /><path d="M1232 -10 Q1036 333 1204 674" /><path d="M-10 -9 Q672 -45 1356 3" /><path d="M-10 48 Q672 15 1356 58" /><path d="M-10 105 Q672 75 1356 113" /><path d="M-10 162 Q672 135 1356 168" /><path d="M-10 219 Q672 195 1356 223" /><path d="M-10 276 Q672 255 1356 278" /><path d="M-10 333 Q672 315 1356 333" /><path d="M-10 396 Q672 375 1356 398" /><path d="M-10 459 Q672 435 1356 463" /><path d="M-10 522 Q672 495 1356 528" /><path d="M-10 585 Q672 555 1356 593" /><path d="M-10 648 Q672 615 1356 658" /><path d="M-10 711 Q672 675 1356 723" /></g><g fill="none" stroke="#1838b0" stroke-width="1.1" stroke-dasharray="4 4" clip-path="url(#bluec)"><path d="M192 -10 Q360 333 216 674" /><path d="M272 -10 Q412 333 292 674" /><path d="M352 -10 Q464 333 368 674" /><path d="M432 -10 Q516 333 444 674" /><path d="M512 -10 Q568 333 520 674" /><path d="M592 -10 Q620 333 596 674" /><path d="M672 -10 Q672 333 672 674" /><path d="M752 -10 Q724 333 748 674" /><path d="M832 -10 Q776 333 824 674" /><path d="M912 -10 Q828 333 900 674" /><path d="M992 -10 Q880 333 976 674" /><path d="M1072 -10 Q932 333 1052 674" /><path d="M1152 -10 Q984 333 1128 674" /><path d="M1232 -10 Q1036 333 1204 674" /><path d="M-10 -9 Q672 -45 1356 3" /><path d="M-10 48 Q672 15 1356 58" /><path d="M-10 105 Q672 75 1356 113" /><path d="M-10 162 Q672 135 1356 168" /><path d="M-10 219 Q672 195 1356 223" /><path d="M-10 276 Q672 255 1356 278" /><path d="M-10 333 Q672 315 1356 333" /><path d="M-10 396 Q672 375 1356 398" /><path d="M-10 459 Q672 435 1356 463" /><path d="M-10 522 Q672 495 1356 528" /><path d="M-10 585 Q672 555 1356 593" /><path d="M-10 648 Q672 615 1356 658" /><path d="M-10 711 Q672 675 1356 723" /></g><polyline points="648.0,27.0 688.0,52.0 723.0,17.0 758.0,7.0" fill="none" stroke="#3a108a" stroke-width="1.2"/><polyline points="669.0,110.0 677.3,103.4 700.3,116.0 692.0,126.3 669.0,110.0" fill="none" stroke="#3a108a" stroke-width="1.2"/><polyline points="664.0,71.0 666.0,85.0 678.0,99.0" fill="none" stroke="#3a108a" stroke-width="1.2"/><polyline points="664.0,177.0 702.0,188.0 728.0,167.0" fill="none" stroke="#3a108a" stroke-width="1.2"/><polyline points="820.0,59.0 838.0,109.0 820.0,109.0 820.0,59.0" fill="none" stroke="#3a108a" stroke-width="1.2"/><polyline points="762.0,113.0 745.0,153.0 704.0,187.0 688.0,199.0" fill="none" stroke="#3a108a" stroke-width="1.2"/><polyline points="740.0,285.0 764.0,289.0" fill="none" stroke="#3a108a" stroke-width="1.2"/><polyline points="740.0,285.0 730.0,327.0 764.0,352.0" fill="none" stroke="#3a108a" stroke-width="1.2"/><polyline points="674.0,352.0 678.0,365.0 688.0,372.0 706.0,368.0 716.0,352.0 710.0,340.0" fill="none" stroke="#3a108a" stroke-width="1.2"/><polyline points="684.0,429.0 692.0,417.0 696.0,429.0 684.0,429.0" fill="none" stroke="#3a108a" stroke-width="1.2"/><polyline points="694.0,419.0 712.0,457.0 691.0,489.0 693.0,527.0" fill="none" stroke="#3a108a" stroke-width="1.2"/><polyline points="688.0,595.0 703.0,589.0 710.0,584.0" fill="none" stroke="#3a108a" stroke-width="1.2"/><polyline points="674.0,575.0 688.0,584.0 711.0,575.0" fill="none" stroke="#3a108a" stroke-width="1.2"/><polyline points="708.0,577.0 739.0,552.0 764.0,565.0" fill="none" stroke="#3a108a" stroke-width="1.2"/><polyline points="739.0,552.0 748.0,607.0 764.0,585.0" fill="none" stroke="#3a108a" stroke-width="1.2"/><polyline points="748.0,607.0 708.0,619.0 704.0,625.0 678.0,619.0" fill="none" stroke="#3a108a" stroke-width="1.2"/><polyline points="674.0,642.0 728.0,649.0 768.0,639.0 818.0,625.0" fill="none" stroke="#3a108a" stroke-width="1.2"/><polyline points="688.0,635.0 720.0,637.0 718.0,647.0" fill="none" stroke="#3a108a" stroke-width="1.2"/><polyline points="458.0,445.0 478.0,479.0" fill="none" stroke="#3a108a" stroke-width="1.2"/><polyline points="368.0,445.0 388.0,479.0" fill="none" stroke="#3a108a" stroke-width="1.2"/><polyline points="536.0,445.0 558.0,479.0" fill="none" stroke="#3a108a" stroke-width="1.2"/><polyline points="568.0,479.0 576.0,445.0" fill="none" stroke="#3a108a" stroke-width="1.2"/><polyline points="598.0,445.0 638.0,479.0" fill="none" stroke="#3a108a" stroke-width="1.2"/><polyline points="588.0,7.0 628.0,22.0 664.0,17.0" fill="none" stroke="#3a108a" stroke-width="1.2"/><polyline points="888.0,92.0 868.0,103.0 838.0,109.0" fill="none" stroke="#3a108a" stroke-width="1.2"/><path d="M723 5 Q728 19 710 37 Q688 59 664 83 Q588 147 540 300" fill="none" stroke="#d81030" stroke-width="2"/><path d="M763 9 Q728 13 710 29 Q688 47 668 69" fill="none" stroke="#28108a" stroke-width="1.3"/><polyline points="664.0,392.0 688.0,369.0 728.0,333.0 764.0,299.0" fill="none" stroke="#e0e0e0" stroke-width="2.4"/><polyline points="674.0,512.0 728.0,509.0 764.0,504.0" fill="none" stroke="#e0e0e0" stroke-width="2"/><polyline points="418.0,445.0 480.0,479.0" fill="none" stroke="#e0e0e0" stroke-width="2.4"/><polyline points="600.0,445.0 558.0,479.0" fill="none" stroke="#e0e0e0" stroke-width="2.4"/><polyline points="678.0,607.0 768.0,582.0" fill="none" stroke="#9ab028" stroke-width="1.4" opacity="0.0"/><polyline points="675.0,599.0 728.0,587.0" fill="none" stroke="#8aa820" stroke-width="1.6"/><g fill="#e81c2c"><path d="M745.9 272.2h3.4a1.7 2.2 0 0 1-3.4 0z"/><path d="M677.3 201.7h4.0a2.0 2.6 0 0 1-4.0 0z"/><path d="M681.3 436.9h4.0a2.0 2.6 0 0 1-4.0 0z"/><path d="M676.6 556.6h5.4a2.7 3.5 0 0 1-5.4 0z"/><path d="M739.9 137.0h5.4a2.7 3.5 0 0 1-5.4 0z"/><path d="M730.1 371.6h4.0a2.0 2.6 0 0 1-4.0 0z"/><path d="M725.6 126.7h4.6a2.3 3.0 0 0 1-4.6 0z"/><path d="M671.6 44.6h4.0a2.0 2.6 0 0 1-4.0 0z"/><path d="M662.6 331.5h3.4a1.7 2.2 0 0 1-3.4 0z"/><path d="M801.1 35.2h4.0a2.0 2.6 0 0 1-4.0 0z"/><path d="M689.5 486.2h3.4a1.7 2.2 0 0 1-3.4 0z"/><path d="M734.1 44.3h3.4a1.7 2.2 0 0 1-3.4 0z"/><path d="M732.9 252.0h5.4a2.7 3.5 0 0 1-5.4 0z"/><path d="M836.7 55.3h4.0a2.0 2.6 0 0 1-4.0 0z"/><path d="M716.7 536.0h4.6a2.3 3.0 0 0 1-4.6 0z"/><path d="M725.9 475.7h5.4a2.7 3.5 0 0 1-5.4 0z"/><path d="M721.2 263.8h4.0a2.0 2.6 0 0 1-4.0 0z"/><path d="M760.6 356.3h5.4a2.7 3.5 0 0 1-5.4 0z"/><path d="M670.3 244.4h5.4a2.7 3.5 0 0 1-5.4 0z"/><path d="M759.0 330.8h4.0a2.0 2.6 0 0 1-4.0 0z"/><path d="M663.8 203.4h4.0a2.0 2.6 0 0 1-4.0 0z"/><path d="M726.8 250.7h4.0a2.0 2.6 0 0 1-4.0 0z"/><path d="M899.2 103.0h4.0a2.0 2.6 0 0 1-4.0 0z"/><path d="M884.1 88.6h4.6a2.3 3.0 0 0 1-4.6 0z"/><path d="M768.6 43.5h4.0a2.0 2.6 0 0 1-4.0 0z"/><path d="M801.7 55.6h4.0a2.0 2.6 0 0 1-4.0 0z"/><path d="M368.6 460.0h5.4a2.7 3.5 0 0 1-5.4 0z"/><path d="M694.8 397.5h5.4a2.7 3.5 0 0 1-5.4 0z"/><path d="M831.2 105.2h4.0a2.0 2.6 0 0 1-4.0 0z"/><path d="M515.2 471.5h3.4a1.7 2.2 0 0 1-3.4 0z"/><path d="M762.4 186.6h4.6a2.3 3.0 0 0 1-4.6 0z"/><path d="M849.2 107.5h3.4a1.7 2.2 0 0 1-3.4 0z"/><path d="M753.4 65.7h4.0a2.0 2.6 0 0 1-4.0 0z"/><path d="M394.0 465.8h4.0a2.0 2.6 0 0 1-4.0 0z"/><path d="M751.7 189.2h3.4a1.7 2.2 0 0 1-3.4 0z"/><path d="M669.5 257.9h4.0a2.0 2.6 0 0 1-4.0 0z"/><path d="M668.5 221.7h4.0a2.0 2.6 0 0 1-4.0 0z"/><path d="M710.7 366.1h4.6a2.3 3.0 0 0 1-4.6 0z"/><path d="M713.0 32.6h3.4a1.7 2.2 0 0 1-3.4 0z"/><path d="M740.2 95.9h5.4a2.7 3.5 0 0 1-5.4 0z"/><path d="M844.7 91.2h4.0a2.0 2.6 0 0 1-4.0 0z"/><path d="M636.4 11.4h5.4a2.7 3.5 0 0 1-5.4 0z"/><path d="M703.9 111.4h5.4a2.7 3.5 0 0 1-5.4 0z"/><path d="M717.0 248.3h4.0a2.0 2.6 0 0 1-4.0 0z"/><path d="M670.7 84.6h4.0a2.0 2.6 0 0 1-4.0 0z"/><path d="M665.2 143.8h4.0a2.0 2.6 0 0 1-4.0 0z"/><path d="M686.3 79.4h4.0a2.0 2.6 0 0 1-4.0 0z"/><path d="M719.1 383.1h4.0a2.0 2.6 0 0 1-4.0 0z"/><path d="M650.1 13.4h4.0a2.0 2.6 0 0 1-4.0 0z"/><path d="M660.7 426.3h5.4a2.7 3.5 0 0 1-5.4 0z"/><path d="M684.5 340.7h5.4a2.7 3.5 0 0 1-5.4 0z"/><path d="M725.8 265.2h4.0a2.0 2.6 0 0 1-4.0 0z"/><path d="M731.2 80.2h4.0a2.0 2.6 0 0 1-4.0 0z"/><path d="M597.0 480.9h5.4a2.7 3.5 0 0 1-5.4 0z"/><path d="M697.6 36.1h4.0a2.0 2.6 0 0 1-4.0 0z"/><path d="M764.9 108.2h4.0a2.0 2.6 0 0 1-4.0 0z"/><path d="M866.8 108.7h5.4a2.7 3.5 0 0 1-5.4 0z"/><path d="M754.8 69.0h3.4a1.7 2.2 0 0 1-3.4 0z"/><path d="M680.7 265.1h4.6a2.3 3.0 0 0 1-4.6 0z"/><path d="M810.4 38.8h3.4a1.7 2.2 0 0 1-3.4 0z"/><path d="M728.7 247.1h3.4a1.7 2.2 0 0 1-3.4 0z"/><path d="M852.9 88.9h4.0a2.0 2.6 0 0 1-4.0 0z"/><path d="M688.0 57.6h4.0a2.0 2.6 0 0 1-4.0 0z"/><path d="M668.9 364.9h4.0a2.0 2.6 0 0 1-4.0 0z"/><path d="M752.5 211.7h4.6a2.3 3.0 0 0 1-4.6 0z"/><path d="M660.9 32.9h4.0a2.0 2.6 0 0 1-4.0 0z"/><path d="M658.8 234.8h4.6a2.3 3.0 0 0 1-4.6 0z"/><path d="M723.9 439.8h4.0a2.0 2.6 0 0 1-4.0 0z"/><path d="M750.5 187.1h4.6a2.3 3.0 0 0 1-4.6 0z"/><path d="M673.8 176.8h4.6a2.3 3.0 0 0 1-4.6 0z"/><path d="M810.2 46.4h4.0a2.0 2.6 0 0 1-4.0 0z"/><path d="M721.8 379.9h4.6a2.3 3.0 0 0 1-4.6 0z"/><path d="M799.6 109.7h4.0a2.0 2.6 0 0 1-4.0 0z"/><path d="M675.0 449.7h3.4a1.7 2.2 0 0 1-3.4 0z"/><path d="M730.4 87.9h4.0a2.0 2.6 0 0 1-4.0 0z"/><path d="M754.0 374.7h3.4a1.7 2.2 0 0 1-3.4 0z"/><path d="M404.0 457.4h5.4a2.7 3.5 0 0 1-5.4 0z"/><path d="M755.2 389.5h4.0a2.0 2.6 0 0 1-4.0 0z"/><path d="M732.2 592.3h3.4a1.7 2.2 0 0 1-3.4 0z"/><path d="M697.7 75.1h5.4a2.7 3.5 0 0 1-5.4 0z"/><path d="M751.5 183.6h4.0a2.0 2.6 0 0 1-4.0 0z"/><path d="M722.3 446.1h3.4a1.7 2.2 0 0 1-3.4 0z"/><path d="M716.3 541.1h4.0a2.0 2.6 0 0 1-4.0 0z"/><path d="M671.7 259.6h4.6a2.3 3.0 0 0 1-4.6 0z"/><path d="M673.4 222.1h4.0a2.0 2.6 0 0 1-4.0 0z"/><path d="M730.1 653.8h4.0a2.0 2.6 0 0 1-4.0 0z"/><path d="M622.0 476.4h4.0a2.0 2.6 0 0 1-4.0 0z"/><path d="M641.7 443.5h4.6a2.3 3.0 0 0 1-4.6 0z"/><path d="M700.8 250.1h3.4a1.7 2.2 0 0 1-3.4 0z"/><path d="M721.9 618.8h3.4a1.7 2.2 0 0 1-3.4 0z"/><path d="M702.0 140.7h4.0a2.0 2.6 0 0 1-4.0 0z"/><path d="M680.1 458.4h5.4a2.7 3.5 0 0 1-5.4 0z"/><path d="M742.9 90.6h3.4a1.7 2.2 0 0 1-3.4 0z"/><path d="M767.2 85.9h4.6a2.3 3.0 0 0 1-4.6 0z"/><path d="M840.2 54.8h4.0a2.0 2.6 0 0 1-4.0 0z"/><path d="M711.5 65.1h4.0a2.0 2.6 0 0 1-4.0 0z"/><path d="M762.6 373.7h4.0a2.0 2.6 0 0 1-4.0 0z"/><path d="M725.0 409.1h4.0a2.0 2.6 0 0 1-4.0 0z"/><path d="M755.0 280.4h5.4a2.7 3.5 0 0 1-5.4 0z"/><path d="M827.6 66.9h4.0a2.0 2.6 0 0 1-4.0 0z"/><path d="M674.4 41.8h4.0a2.0 2.6 0 0 1-4.0 0z"/><path d="M790.2 64.1h4.0a2.0 2.6 0 0 1-4.0 0z"/><path d="M737.2 400.2h4.6a2.3 3.0 0 0 1-4.6 0z"/><path d="M744.9 345.7h4.0a2.0 2.6 0 0 1-4.0 0z"/><path d="M699.6 516.4h4.0a2.0 2.6 0 0 1-4.0 0z"/><path d="M701.1 215.1h4.6a2.3 3.0 0 0 1-4.6 0z"/><path d="M762.6 336.1h4.0a2.0 2.6 0 0 1-4.0 0z"/><path d="M730.3 119.0h4.6a2.3 3.0 0 0 1-4.6 0z"/><path d="M437.8 467.2h4.0a2.0 2.6 0 0 1-4.0 0z"/><path d="M723.2 206.2h4.6a2.3 3.0 0 0 1-4.6 0z"/><path d="M729.3 311.0h4.0a2.0 2.6 0 0 1-4.0 0z"/><path d="M760.4 125.5h4.0a2.0 2.6 0 0 1-4.0 0z"/><path d="M659.8 427.0h4.6a2.3 3.0 0 0 1-4.6 0z"/><path d="M755.3 304.0h4.0a2.0 2.6 0 0 1-4.0 0z"/><path d="M700.8 382.0h4.6a2.3 3.0 0 0 1-4.6 0z"/><path d="M753.3 351.5h4.0a2.0 2.6 0 0 1-4.0 0z"/><path d="M720.6 320.0h5.4a2.7 3.5 0 0 1-5.4 0z"/><path d="M835.1 109.8h4.0a2.0 2.6 0 0 1-4.0 0z"/><path d="M733.6 107.1h4.0a2.0 2.6 0 0 1-4.0 0z"/><path d="M711.8 178.5h4.0a2.0 2.6 0 0 1-4.0 0z"/><path d="M751.1 102.4h3.4a1.7 2.2 0 0 1-3.4 0z"/><path d="M729.6 302.3h3.4a1.7 2.2 0 0 1-3.4 0z"/><path d="M692.3 121.9h4.6a2.3 3.0 0 0 1-4.6 0z"/><path d="M685.8 97.4h4.0a2.0 2.6 0 0 1-4.0 0z"/><path d="M671.0 435.4h4.6a2.3 3.0 0 0 1-4.6 0z"/><path d="M793.5 40.0h4.0a2.0 2.6 0 0 1-4.0 0z"/><path d="M688.8 101.6h4.6a2.3 3.0 0 0 1-4.6 0z"/><path d="M818.9 107.8h3.4a1.7 2.2 0 0 1-3.4 0z"/><path d="M686.6 134.7h5.4a2.7 3.5 0 0 1-5.4 0z"/><path d="M788.4 101.8h4.0a2.0 2.6 0 0 1-4.0 0z"/><path d="M723.3 149.0h4.0a2.0 2.6 0 0 1-4.0 0z"/><path d="M749.9 150.1h4.6a2.3 3.0 0 0 1-4.6 0z"/><path d="M710.2 86.3h5.4a2.7 3.5 0 0 1-5.4 0z"/><path d="M749.1 536.5h4.6a2.3 3.0 0 0 1-4.6 0z"/><path d="M719.6 21.2h3.4a1.7 2.2 0 0 1-3.4 0z"/><path d="M694.2 489.9h4.0a2.0 2.6 0 0 1-4.0 0z"/><path d="M673.1 309.5h4.0a2.0 2.6 0 0 1-4.0 0z"/><path d="M692.9 310.9h3.4a1.7 2.2 0 0 1-3.4 0z"/><path d="M694.7 322.3h4.6a2.3 3.0 0 0 1-4.6 0z"/><path d="M676.9 11.7h5.4a2.7 3.5 0 0 1-5.4 0z"/><path d="M692.5 451.0h5.4a2.7 3.5 0 0 1-5.4 0z"/><path d="M765.2 49.9h5.4a2.7 3.5 0 0 1-5.4 0z"/><path d="M735.8 265.7h4.0a2.0 2.6 0 0 1-4.0 0z"/><path d="M738.8 574.4h5.4a2.7 3.5 0 0 1-5.4 0z"/><path d="M637.5 468.8h4.6a2.3 3.0 0 0 1-4.6 0z"/><path d="M681.9 7.8h5.4a2.7 3.5 0 0 1-5.4 0z"/><path d="M698.5 554.5h4.0a2.0 2.6 0 0 1-4.0 0z"/><path d="M718.9 368.7h3.4a1.7 2.2 0 0 1-3.4 0z"/><path d="M671.6 402.2h5.4a2.7 3.5 0 0 1-5.4 0z"/><path d="M731.7 632.3h5.4a2.7 3.5 0 0 1-5.4 0z"/><path d="M736.0 187.4h5.4a2.7 3.5 0 0 1-5.4 0z"/><path d="M701.9 510.4h5.4a2.7 3.5 0 0 1-5.4 0z"/><path d="M711.4 151.9h4.0a2.0 2.6 0 0 1-4.0 0z"/><path d="M705.0 267.4h5.4a2.7 3.5 0 0 1-5.4 0z"/><path d="M681.9 588.5h4.0a2.0 2.6 0 0 1-4.0 0z"/><path d="M837.8 67.1h4.6a2.3 3.0 0 0 1-4.6 0z"/><path d="M667.0 291.2h5.4a2.7 3.5 0 0 1-5.4 0z"/><path d="M810.3 41.7h4.6a2.3 3.0 0 0 1-4.6 0z"/><path d="M717.9 257.0h3.4a1.7 2.2 0 0 1-3.4 0z"/><path d="M689.0 122.6h4.0a2.0 2.6 0 0 1-4.0 0z"/><path d="M712.7 550.9h5.4a2.7 3.5 0 0 1-5.4 0z"/><path d="M684.7 591.6h4.0a2.0 2.6 0 0 1-4.0 0z"/><path d="M675.4 232.6h5.4a2.7 3.5 0 0 1-5.4 0z"/><path d="M694.3 299.8h4.0a2.0 2.6 0 0 1-4.0 0z"/><path d="M674.2 55.3h3.4a1.7 2.2 0 0 1-3.4 0z"/><path d="M738.8 68.6h4.0a2.0 2.6 0 0 1-4.0 0z"/><path d="M708.3 13.8h4.0a2.0 2.6 0 0 1-4.0 0z"/><path d="M752.6 67.7h4.0a2.0 2.6 0 0 1-4.0 0z"/><path d="M677.2 228.1h4.6a2.3 3.0 0 0 1-4.6 0z"/><path d="M705.8 434.4h4.6a2.3 3.0 0 0 1-4.6 0z"/><path d="M732.2 154.9h5.4a2.7 3.5 0 0 1-5.4 0z"/><path d="M729.5 131.2h4.0a2.0 2.6 0 0 1-4.0 0z"/><path d="M691.4 246.2h4.6a2.3 3.0 0 0 1-4.6 0z"/><path d="M767.0 98.6h3.4a1.7 2.2 0 0 1-3.4 0z"/><path d="M701.0 68.1h5.4a2.7 3.5 0 0 1-5.4 0z"/><path d="M675.7 9.7h3.4a1.7 2.2 0 0 1-3.4 0z"/><path d="M665.1 87.3h4.0a2.0 2.6 0 0 1-4.0 0z"/><path d="M705.3 83.1h4.0a2.0 2.6 0 0 1-4.0 0z"/><path d="M645.2 24.8h4.6a2.3 3.0 0 0 1-4.6 0z"/><path d="M777.1 78.4h5.4a2.7 3.5 0 0 1-5.4 0z"/><path d="M607.9 481.2h4.0a2.0 2.6 0 0 1-4.0 0z"/><path d="M694.7 90.3h3.4a1.7 2.2 0 0 1-3.4 0z"/><path d="M682.2 46.4h4.0a2.0 2.6 0 0 1-4.0 0z"/><path d="M807.8 83.2h3.4a1.7 2.2 0 0 1-3.4 0z"/><path d="M758.7 133.9h4.0a2.0 2.6 0 0 1-4.0 0z"/><path d="M784.1 60.9h5.4a2.7 3.5 0 0 1-5.4 0z"/><path d="M875.3 78.8h3.4a1.7 2.2 0 0 1-3.4 0z"/><path d="M694.7 125.7h4.0a2.0 2.6 0 0 1-4.0 0z"/><path d="M727.6 250.7h4.0a2.0 2.6 0 0 1-4.0 0z"/><path d="M842.4 95.7h4.6a2.3 3.0 0 0 1-4.6 0z"/><path d="M845.6 99.3h3.4a1.7 2.2 0 0 1-3.4 0z"/><path d="M691.8 297.1h4.0a2.0 2.6 0 0 1-4.0 0z"/><path d="M662.0 336.1h4.0a2.0 2.6 0 0 1-4.0 0z"/><path d="M677.4 117.6h3.4a1.7 2.2 0 0 1-3.4 0z"/><path d="M729.4 397.6h3.4a1.7 2.2 0 0 1-3.4 0z"/><path d="M789.3 49.4h4.0a2.0 2.6 0 0 1-4.0 0z"/><path d="M711.8 174.7h4.0a2.0 2.6 0 0 1-4.0 0z"/><path d="M667.6 154.2h4.0a2.0 2.6 0 0 1-4.0 0z"/><path d="M755.3 341.9h3.4a1.7 2.2 0 0 1-3.4 0z"/><path d="M724.6 410.9h4.0a2.0 2.6 0 0 1-4.0 0z"/><path d="M692.0 68.7h4.0a2.0 2.6 0 0 1-4.0 0z"/><path d="M714.8 267.9h4.6a2.3 3.0 0 0 1-4.6 0z"/><path d="M743.7 182.6h4.0a2.0 2.6 0 0 1-4.0 0z"/><path d="M755.6 229.1h3.4a1.7 2.2 0 0 1-3.4 0z"/><path d="M740.3 338.4h4.0a2.0 2.6 0 0 1-4.0 0z"/><path d="M808.9 623.8h4.6a2.3 3.0 0 0 1-4.6 0z"/><path d="M709.3 565.9h4.6a2.3 3.0 0 0 1-4.6 0z"/><path d="M690.6 189.0h4.0a2.0 2.6 0 0 1-4.0 0z"/><path d="M681.3 131.5h4.0a2.0 2.6 0 0 1-4.0 0z"/><path d="M687.1 563.1h4.0a2.0 2.6 0 0 1-4.0 0z"/><path d="M757.3 384.7h4.6a2.3 3.0 0 0 1-4.6 0z"/><path d="M756.4 71.5h4.0a2.0 2.6 0 0 1-4.0 0z"/><path d="M683.4 225.3h4.6a2.3 3.0 0 0 1-4.6 0z"/><path d="M718.4 509.2h3.4a1.7 2.2 0 0 1-3.4 0z"/><path d="M748.6 233.7h4.0a2.0 2.6 0 0 1-4.0 0z"/><path d="M729.0 389.5h4.0a2.0 2.6 0 0 1-4.0 0z"/><path d="M752.5 344.4h4.6a2.3 3.0 0 0 1-4.6 0z"/><path d="M706.3 240.1h4.0a2.0 2.6 0 0 1-4.0 0z"/><path d="M707.9 143.8h4.0a2.0 2.6 0 0 1-4.0 0z"/><path d="M683.5 254.6h5.4a2.7 3.5 0 0 1-5.4 0z"/><path d="M684.2 463.7h4.0a2.0 2.6 0 0 1-4.0 0z"/><path d="M737.5 294.4h4.0a2.0 2.6 0 0 1-4.0 0z"/><path d="M790.1 32.0h4.0a2.0 2.6 0 0 1-4.0 0z"/><path d="M687.1 486.0h3.4a1.7 2.2 0 0 1-3.4 0z"/><path d="M736.7 152.9h4.0a2.0 2.6 0 0 1-4.0 0z"/><path d="M631.0 466.3h5.4a2.7 3.5 0 0 1-5.4 0z"/><path d="M727.1 320.2h5.4a2.7 3.5 0 0 1-5.4 0z"/><path d="M743.6 268.3h4.0a2.0 2.6 0 0 1-4.0 0z"/><path d="M670.5 418.7h3.4a1.7 2.2 0 0 1-3.4 0z"/><path d="M730.3 90.2h4.0a2.0 2.6 0 0 1-4.0 0z"/><path d="M755.2 306.2h4.6a2.3 3.0 0 0 1-4.6 0z"/><path d="M786.8 100.4h3.4a1.7 2.2 0 0 1-3.4 0z"/><path d="M695.7 501.6h3.4a1.7 2.2 0 0 1-3.4 0z"/><path d="M830.0 82.5h5.4a2.7 3.5 0 0 1-5.4 0z"/><path d="M706.6 284.3h5.4a2.7 3.5 0 0 1-5.4 0z"/><path d="M754.7 75.7h3.4a1.7 2.2 0 0 1-3.4 0z"/><path d="M704.6 473.3h3.4a1.7 2.2 0 0 1-3.4 0z"/><path d="M754.5 188.7h3.4a1.7 2.2 0 0 1-3.4 0z"/><path d="M737.9 34.3h4.6a2.3 3.0 0 0 1-4.6 0z"/><path d="M697.3 148.8h5.4a2.7 3.5 0 0 1-5.4 0z"/><path d="M687.6 27.2h5.4a2.7 3.5 0 0 1-5.4 0z"/><path d="M691.4 251.6h4.6a2.3 3.0 0 0 1-4.6 0z"/><path d="M710.6 294.5h4.0a2.0 2.6 0 0 1-4.0 0z"/><path d="M755.4 192.6h4.0a2.0 2.6 0 0 1-4.0 0z"/><path d="M724.6 50.0h4.0a2.0 2.6 0 0 1-4.0 0z"/><path d="M731.7 161.9h4.0a2.0 2.6 0 0 1-4.0 0z"/><path d="M752.3 91.8h4.0a2.0 2.6 0 0 1-4.0 0z"/><path d="M836.4 73.6h3.4a1.7 2.2 0 0 1-3.4 0z"/><path d="M725.6 384.4h5.4a2.7 3.5 0 0 1-5.4 0z"/><path d="M751.8 302.9h5.4a2.7 3.5 0 0 1-5.4 0z"/><path d="M757.9 240.3h4.0a2.0 2.6 0 0 1-4.0 0z"/><path d="M679.2 198.2h4.6a2.3 3.0 0 0 1-4.6 0z"/><path d="M733.5 49.6h4.6a2.3 3.0 0 0 1-4.6 0z"/><path d="M749.7 172.3h5.4a2.7 3.5 0 0 1-5.4 0z"/><path d="M708.2 611.0h3.4a1.7 2.2 0 0 1-3.4 0z"/><path d="M752.1 407.9h4.0a2.0 2.6 0 0 1-4.0 0z"/><path d="M828.7 50.1h4.6a2.3 3.0 0 0 1-4.6 0z"/><path d="M699.8 391.2h4.0a2.0 2.6 0 0 1-4.0 0z"/><path d="M854.4 83.3h4.0a2.0 2.6 0 0 1-4.0 0z"/><path d="M844.0 95.7h4.0a2.0 2.6 0 0 1-4.0 0z"/><path d="M526.6 468.1h4.0a2.0 2.6 0 0 1-4.0 0z"/><path d="M671.7 146.7h4.0a2.0 2.6 0 0 1-4.0 0z"/><path d="M665.3 331.5h5.4a2.7 3.5 0 0 1-5.4 0z"/><path d="M792.1 56.8h5.4a2.7 3.5 0 0 1-5.4 0z"/><path d="M660.1 122.8h4.0a2.0 2.6 0 0 1-4.0 0z"/><path d="M699.9 114.3h5.4a2.7 3.5 0 0 1-5.4 0z"/><path d="M683.4 161.4h4.0a2.0 2.6 0 0 1-4.0 0z"/><path d="M748.9 580.6h4.0a2.0 2.6 0 0 1-4.0 0z"/><path d="M589.3 18.1h5.4a2.7 3.5 0 0 1-5.4 0z"/><path d="M665.7 31.2h4.6a2.3 3.0 0 0 1-4.6 0z"/><path d="M755.2 110.9h4.0a2.0 2.6 0 0 1-4.0 0z"/><path d="M744.0 358.6h4.0a2.0 2.6 0 0 1-4.0 0z"/><path d="M719.6 398.2h4.0a2.0 2.6 0 0 1-4.0 0z"/><path d="M671.6 273.9h3.4a1.7 2.2 0 0 1-3.4 0z"/><path d="M744.6 316.7h4.0a2.0 2.6 0 0 1-4.0 0z"/><path d="M722.8 14.3h4.0a2.0 2.6 0 0 1-4.0 0z"/><path d="M758.6 323.7h5.4a2.7 3.5 0 0 1-5.4 0z"/><path d="M718.5 378.2h4.0a2.0 2.6 0 0 1-4.0 0z"/><path d="M606.5 473.5h3.4a1.7 2.2 0 0 1-3.4 0z"/><path d="M699.4 205.1h4.6a2.3 3.0 0 0 1-4.6 0z"/><path d="M713.3 517.5h4.0a2.0 2.6 0 0 1-4.0 0z"/><path d="M673.6 67.9h4.0a2.0 2.6 0 0 1-4.0 0z"/><path d="M715.5 30.4h3.4a1.7 2.2 0 0 1-3.4 0z"/><path d="M658.5 116.3h3.4a1.7 2.2 0 0 1-3.4 0z"/><path d="M667.5 204.0h4.0a2.0 2.6 0 0 1-4.0 0z"/><path d="M756.5 354.0h4.0a2.0 2.6 0 0 1-4.0 0z"/><path d="M693.1 498.7h4.6a2.3 3.0 0 0 1-4.6 0z"/><path d="M679.7 81.4h3.4a1.7 2.2 0 0 1-3.4 0z"/><path d="M695.3 281.1h4.0a2.0 2.6 0 0 1-4.0 0z"/><path d="M741.4 100.7h4.0a2.0 2.6 0 0 1-4.0 0z"/><path d="M712.1 385.2h4.6a2.3 3.0 0 0 1-4.6 0z"/><path d="M851.2 90.0h5.4a2.7 3.5 0 0 1-5.4 0z"/><path d="M734.4 231.2h4.6a2.3 3.0 0 0 1-4.6 0z"/><path d="M835.5 77.4h5.4a2.7 3.5 0 0 1-5.4 0z"/><path d="M683.9 394.3h5.4a2.7 3.5 0 0 1-5.4 0z"/><path d="M840.6 91.8h4.0a2.0 2.6 0 0 1-4.0 0z"/><path d="M674.9 209.9h5.4a2.7 3.5 0 0 1-5.4 0z"/><path d="M714.7 558.4h4.0a2.0 2.6 0 0 1-4.0 0z"/><path d="M723.1 135.0h3.4a1.7 2.2 0 0 1-3.4 0z"/><path d="M743.7 278.2h4.0a2.0 2.6 0 0 1-4.0 0z"/><path d="M716.2 411.8h4.0a2.0 2.6 0 0 1-4.0 0z"/><path d="M746.9 438.7h3.4a1.7 2.2 0 0 1-3.4 0z"/><path d="M808.0 44.4h5.4a2.7 3.5 0 0 1-5.4 0z"/><path d="M730.1 206.2h4.0a2.0 2.6 0 0 1-4.0 0z"/><path d="M697.9 364.3h5.4a2.7 3.5 0 0 1-5.4 0z"/><path d="M670.8 232.6h5.4a2.7 3.5 0 0 1-5.4 0z"/><path d="M658.6 330.2h4.6a2.3 3.0 0 0 1-4.6 0z"/><path d="M731.6 90.5h3.4a1.7 2.2 0 0 1-3.4 0z"/><path d="M740.1 134.8h4.6a2.3 3.0 0 0 1-4.6 0z"/><path d="M676.3 121.6h4.6a2.3 3.0 0 0 1-4.6 0z"/><path d="M744.5 247.3h4.0a2.0 2.6 0 0 1-4.0 0z"/><path d="M736.5 46.1h3.4a1.7 2.2 0 0 1-3.4 0z"/><path d="M686.1 424.6h4.6a2.3 3.0 0 0 1-4.6 0z"/><path d="M746.8 315.1h4.0a2.0 2.6 0 0 1-4.0 0z"/><path d="M685.6 467.5h4.0a2.0 2.6 0 0 1-4.0 0z"/><path d="M732.3 189.6h4.6a2.3 3.0 0 0 1-4.6 0z"/><path d="M739.7 387.9h3.4a1.7 2.2 0 0 1-3.4 0z"/><path d="M774.4 28.8h5.4a2.7 3.5 0 0 1-5.4 0z"/><path d="M707.1 183.1h4.0a2.0 2.6 0 0 1-4.0 0z"/><path d="M749.4 499.0h5.4a2.7 3.5 0 0 1-5.4 0z"/><path d="M641.9 26.9h4.0a2.0 2.6 0 0 1-4.0 0z"/><path d="M823.4 74.0h3.4a1.7 2.2 0 0 1-3.4 0z"/><path d="M870.7 81.2h4.0a2.0 2.6 0 0 1-4.0 0z"/><path d="M738.6 116.3h5.4a2.7 3.5 0 0 1-5.4 0z"/><path d="M705.3 113.5h5.4a2.7 3.5 0 0 1-5.4 0z"/><path d="M720.8 440.8h4.0a2.0 2.6 0 0 1-4.0 0z"/><path d="M778.9 76.1h5.4a2.7 3.5 0 0 1-5.4 0z"/><path d="M709.0 157.2h5.4a2.7 3.5 0 0 1-5.4 0z"/><path d="M749.4 463.6h3.4a1.7 2.2 0 0 1-3.4 0z"/><path d="M886.4 94.0h5.4a2.7 3.5 0 0 1-5.4 0z"/><path d="M703.4 115.7h5.4a2.7 3.5 0 0 1-5.4 0z"/><path d="M695.3 516.5h4.0a2.0 2.6 0 0 1-4.0 0z"/><path d="M670.1 182.0h3.4a1.7 2.2 0 0 1-3.4 0z"/><path d="M743.7 127.1h4.0a2.0 2.6 0 0 1-4.0 0z"/><path d="M688.9 361.0h4.0a2.0 2.6 0 0 1-4.0 0z"/><path d="M698.6 20.5h4.0a2.0 2.6 0 0 1-4.0 0z"/><path d="M746.4 135.9h4.0a2.0 2.6 0 0 1-4.0 0z"/><path d="M741.1 415.7h4.6a2.3 3.0 0 0 1-4.6 0z"/><path d="M686.8 375.4h5.4a2.7 3.5 0 0 1-5.4 0z"/><path d="M647.0 447.0h3.4a1.7 2.2 0 0 1-3.4 0z"/><path d="M683.8 460.0h4.0a2.0 2.6 0 0 1-4.0 0z"/><path d="M761.3 351.5h4.0a2.0 2.6 0 0 1-4.0 0z"/><path d="M792.8 59.9h4.0a2.0 2.6 0 0 1-4.0 0z"/><path d="M660.7 232.6h4.0a2.0 2.6 0 0 1-4.0 0z"/><path d="M692.2 441.3h4.0a2.0 2.6 0 0 1-4.0 0z"/><path d="M674.8 252.5h4.0a2.0 2.6 0 0 1-4.0 0z"/><path d="M682.4 38.0h4.0a2.0 2.6 0 0 1-4.0 0z"/><path d="M708.2 102.1h3.4a1.7 2.2 0 0 1-3.4 0z"/><path d="M729.6 202.9h5.4a2.7 3.5 0 0 1-5.4 0z"/><path d="M695.2 385.4h4.0a2.0 2.6 0 0 1-4.0 0z"/><path d="M807.0 104.4h5.4a2.7 3.5 0 0 1-5.4 0z"/><path d="M746.0 181.2h3.4a1.7 2.2 0 0 1-3.4 0z"/><path d="M715.8 253.8h5.4a2.7 3.5 0 0 1-5.4 0z"/><path d="M668.2 121.0h5.4a2.7 3.5 0 0 1-5.4 0z"/><path d="M739.8 454.1h4.0a2.0 2.6 0 0 1-4.0 0z"/><path d="M663.0 135.7h4.6a2.3 3.0 0 0 1-4.6 0z"/><path d="M731.6 333.1h3.4a1.7 2.2 0 0 1-3.4 0z"/><path d="M723.5 632.6h4.0a2.0 2.6 0 0 1-4.0 0z"/><path d="M669.4 499.5h5.4a2.7 3.5 0 0 1-5.4 0z"/><path d="M705.7 201.1h5.4a2.7 3.5 0 0 1-5.4 0z"/><path d="M713.3 240.9h3.4a1.7 2.2 0 0 1-3.4 0z"/><path d="M738.5 369.8h4.0a2.0 2.6 0 0 1-4.0 0z"/><path d="M706.6 50.9h3.4a1.7 2.2 0 0 1-3.4 0z"/><path d="M674.2 83.5h4.6a2.3 3.0 0 0 1-4.6 0z"/><path d="M734.1 402.8h3.4a1.7 2.2 0 0 1-3.4 0z"/><path d="M686.9 105.5h4.6a2.3 3.0 0 0 1-4.6 0z"/><path d="M712.4 388.3h4.0a2.0 2.6 0 0 1-4.0 0z"/><path d="M659.4 171.2h4.0a2.0 2.6 0 0 1-4.0 0z"/><path d="M712.5 311.5h5.4a2.7 3.5 0 0 1-5.4 0z"/><path d="M668.4 288.4h4.0a2.0 2.6 0 0 1-4.0 0z"/><path d="M769.0 92.2h3.4a1.7 2.2 0 0 1-3.4 0z"/><path d="M699.4 523.1h4.0a2.0 2.6 0 0 1-4.0 0z"/><path d="M763.9 42.5h5.4a2.7 3.5 0 0 1-5.4 0z"/><path d="M717.1 404.8h3.4a1.7 2.2 0 0 1-3.4 0z"/><path d="M704.2 377.8h4.6a2.3 3.0 0 0 1-4.6 0z"/><path d="M661.8 34.9h4.0a2.0 2.6 0 0 1-4.0 0z"/><path d="M752.7 449.4h3.4a1.7 2.2 0 0 1-3.4 0z"/><path d="M689.4 76.4h5.4a2.7 3.5 0 0 1-5.4 0z"/><path d="M676.1 385.8h4.6a2.3 3.0 0 0 1-4.6 0z"/><path d="M752.5 520.4h4.0a2.0 2.6 0 0 1-4.0 0z"/><path d="M690.9 388.4h3.4a1.7 2.2 0 0 1-3.4 0z"/><path d="M716.3 598.6h4.0a2.0 2.6 0 0 1-4.0 0z"/><path d="M658.3 79.8h3.4a1.7 2.2 0 0 1-3.4 0z"/><path d="M700.8 273.0h5.4a2.7 3.5 0 0 1-5.4 0z"/><path d="M700.4 11.7h4.6a2.3 3.0 0 0 1-4.6 0z"/><path d="M441.7 453.6h5.4a2.7 3.5 0 0 1-5.4 0z"/><path d="M756.4 232.4h3.4a1.7 2.2 0 0 1-3.4 0z"/><path d="M696.0 114.7h3.4a1.7 2.2 0 0 1-3.4 0z"/><path d="M734.2 197.4h3.4a1.7 2.2 0 0 1-3.4 0z"/><path d="M764.7 180.1h3.4a1.7 2.2 0 0 1-3.4 0z"/><path d="M669.2 135.6h4.0a2.0 2.6 0 0 1-4.0 0z"/><path d="M792.7 74.0h3.4a1.7 2.2 0 0 1-3.4 0z"/><path d="M586.5 18.4h3.4a1.7 2.2 0 0 1-3.4 0z"/><path d="M657.9 183.7h4.6a2.3 3.0 0 0 1-4.6 0z"/><path d="M658.5 356.0h4.0a2.0 2.6 0 0 1-4.0 0z"/><path d="M754.6 430.7h5.4a2.7 3.5 0 0 1-5.4 0z"/><path d="M793.6 41.5h5.4a2.7 3.5 0 0 1-5.4 0z"/><path d="M673.0 56.7h3.4a1.7 2.2 0 0 1-3.4 0z"/><path d="M756.7 174.1h4.0a2.0 2.6 0 0 1-4.0 0z"/><path d="M724.9 23.4h3.4a1.7 2.2 0 0 1-3.4 0z"/><path d="M764.9 34.8h4.0a2.0 2.6 0 0 1-4.0 0z"/><path d="M809.5 46.5h4.0a2.0 2.6 0 0 1-4.0 0z"/><path d="M686.8 393.4h5.4a2.7 3.5 0 0 1-5.4 0z"/><path d="M751.1 265.2h4.0a2.0 2.6 0 0 1-4.0 0z"/><path d="M723.5 500.7h4.6a2.3 3.0 0 0 1-4.6 0z"/><path d="M753.0 97.9h4.0a2.0 2.6 0 0 1-4.0 0z"/><path d="M730.0 380.1h4.0a2.0 2.6 0 0 1-4.0 0z"/><path d="M703.3 247.1h4.6a2.3 3.0 0 0 1-4.6 0z"/><path d="M758.8 72.8h4.0a2.0 2.6 0 0 1-4.0 0z"/><path d="M744.9 33.1h3.4a1.7 2.2 0 0 1-3.4 0z"/><path d="M681.3 495.0h4.6a2.3 3.0 0 0 1-4.6 0z"/><path d="M692.6 599.8h5.4a2.7 3.5 0 0 1-5.4 0z"/><path d="M727.7 237.9h4.0a2.0 2.6 0 0 1-4.0 0z"/><path d="M782.9 67.1h4.6a2.3 3.0 0 0 1-4.6 0z"/><path d="M695.1 453.1h3.4a1.7 2.2 0 0 1-3.4 0z"/><path d="M681.9 65.8h4.0a2.0 2.6 0 0 1-4.0 0z"/><path d="M694.8 348.8h4.6a2.3 3.0 0 0 1-4.6 0z"/><path d="M844.2 84.6h5.4a2.7 3.5 0 0 1-5.4 0z"/><path d="M679.4 331.1h4.0a2.0 2.6 0 0 1-4.0 0z"/><path d="M726.8 441.8h4.0a2.0 2.6 0 0 1-4.0 0z"/><path d="M739.2 223.9h4.0a2.0 2.6 0 0 1-4.0 0z"/><path d="M728.3 398.8h4.6a2.3 3.0 0 0 1-4.6 0z"/><path d="M868.2 93.6h4.6a2.3 3.0 0 0 1-4.6 0z"/><path d="M702.3 544.9h4.6a2.3 3.0 0 0 1-4.6 0z"/><path d="M761.2 201.6h4.6a2.3 3.0 0 0 1-4.6 0z"/><path d="M732.6 346.4h4.0a2.0 2.6 0 0 1-4.0 0z"/><path d="M709.8 112.3h5.4a2.7 3.5 0 0 1-5.4 0z"/><path d="M652.5 11.0h5.4a2.7 3.5 0 0 1-5.4 0z"/><path d="M724.7 157.4h4.0a2.0 2.6 0 0 1-4.0 0z"/><path d="M705.9 169.1h5.4a2.7 3.5 0 0 1-5.4 0z"/><path d="M764.3 90.6h3.4a1.7 2.2 0 0 1-3.4 0z"/><path d="M733.8 398.2h4.0a2.0 2.6 0 0 1-4.0 0z"/><path d="M694.6 302.5h4.0a2.0 2.6 0 0 1-4.0 0z"/><path d="M682.4 472.4h3.4a1.7 2.2 0 0 1-3.4 0z"/><path d="M662.8 47.7h4.6a2.3 3.0 0 0 1-4.6 0z"/><path d="M728.9 138.6h5.4a2.7 3.5 0 0 1-5.4 0z"/><path d="M582.8 479.4h5.4a2.7 3.5 0 0 1-5.4 0z"/><path d="M668.4 51.1h4.0a2.0 2.6 0 0 1-4.0 0z"/><path d="M699.9 335.0h4.6a2.3 3.0 0 0 1-4.6 0z"/><path d="M756.7 394.1h4.0a2.0 2.6 0 0 1-4.0 0z"/><path d="M763.0 307.7h4.6a2.3 3.0 0 0 1-4.6 0z"/><path d="M611.4 451.6h3.4a1.7 2.2 0 0 1-3.4 0z"/><path d="M529.4 460.4h4.0a2.0 2.6 0 0 1-4.0 0z"/><path d="M666.5 394.3h4.0a2.0 2.6 0 0 1-4.0 0z"/><path d="M678.0 288.6h3.4a1.7 2.2 0 0 1-3.4 0z"/><path d="M831.3 91.6h5.4a2.7 3.5 0 0 1-5.4 0z"/><path d="M691.3 220.5h4.0a2.0 2.6 0 0 1-4.0 0z"/><path d="M825.5 91.9h4.0a2.0 2.6 0 0 1-4.0 0z"/><path d="M699.0 391.4h4.0a2.0 2.6 0 0 1-4.0 0z"/><path d="M721.1 344.7h4.0a2.0 2.6 0 0 1-4.0 0z"/><path d="M746.1 351.0h3.4a1.7 2.2 0 0 1-3.4 0z"/><path d="M679.1 420.8h4.6a2.3 3.0 0 0 1-4.6 0z"/><path d="M731.3 298.3h4.0a2.0 2.6 0 0 1-4.0 0z"/><path d="M712.8 261.5h3.4a1.7 2.2 0 0 1-3.4 0z"/><path d="M792.9 31.0h4.0a2.0 2.6 0 0 1-4.0 0z"/><path d="M676.4 198.3h4.0a2.0 2.6 0 0 1-4.0 0z"/><path d="M377.0 452.0h3.4a1.7 2.2 0 0 1-3.4 0z"/><path d="M736.7 80.1h4.0a2.0 2.6 0 0 1-4.0 0z"/><path d="M772.1 62.4h4.0a2.0 2.6 0 0 1-4.0 0z"/><path d="M752.8 172.9h5.4a2.7 3.5 0 0 1-5.4 0z"/><path d="M680.5 445.3h3.4a1.7 2.2 0 0 1-3.4 0z"/><path d="M689.7 406.2h4.0a2.0 2.6 0 0 1-4.0 0z"/><path d="M767.6 63.5h3.4a1.7 2.2 0 0 1-3.4 0z"/><path d="M720.7 109.5h4.0a2.0 2.6 0 0 1-4.0 0z"/><path d="M646.4 27.1h4.0a2.0 2.6 0 0 1-4.0 0z"/><path d="M724.2 584.1h4.0a2.0 2.6 0 0 1-4.0 0z"/><path d="M705.0 445.1h3.4a1.7 2.2 0 0 1-3.4 0z"/><path d="M680.0 179.1h4.0a2.0 2.6 0 0 1-4.0 0z"/><path d="M734.6 78.3h4.0a2.0 2.6 0 0 1-4.0 0z"/><path d="M675.3 59.1h4.0a2.0 2.6 0 0 1-4.0 0z"/><path d="M669.1 281.6h4.0a2.0 2.6 0 0 1-4.0 0z"/><path d="M719.9 139.0h3.4a1.7 2.2 0 0 1-3.4 0z"/><path d="M725.9 265.7h4.0a2.0 2.6 0 0 1-4.0 0z"/><path d="M674.3 58.2h5.4a2.7 3.5 0 0 1-5.4 0z"/><path d="M750.5 52.3h4.0a2.0 2.6 0 0 1-4.0 0z"/><path d="M663.1 256.3h4.0a2.0 2.6 0 0 1-4.0 0z"/><path d="M752.9 262.1h5.4a2.7 3.5 0 0 1-5.4 0z"/><path d="M675.7 46.1h4.0a2.0 2.6 0 0 1-4.0 0z"/><path d="M809.3 623.4h4.0a2.0 2.6 0 0 1-4.0 0z"/><path d="M749.2 480.9h4.0a2.0 2.6 0 0 1-4.0 0z"/><path d="M678.6 262.0h4.6a2.3 3.0 0 0 1-4.6 0z"/><path d="M707.2 14.9h4.0a2.0 2.6 0 0 1-4.0 0z"/><path d="M754.0 325.9h4.6a2.3 3.0 0 0 1-4.6 0z"/><path d="M673.7 211.3h4.6a2.3 3.0 0 0 1-4.6 0z"/><path d="M749.5 170.8h4.6a2.3 3.0 0 0 1-4.6 0z"/><path d="M685.7 335.7h4.6a2.3 3.0 0 0 1-4.6 0z"/><path d="M690.6 103.0h5.4a2.7 3.5 0 0 1-5.4 0z"/><path d="M663.0 82.3h4.0a2.0 2.6 0 0 1-4.0 0z"/><path d="M744.8 223.3h4.0a2.0 2.6 0 0 1-4.0 0z"/><path d="M740.1 312.8h3.4a1.7 2.2 0 0 1-3.4 0z"/><path d="M710.5 425.4h5.4a2.7 3.5 0 0 1-5.4 0z"/><path d="M835.4 89.6h4.0a2.0 2.6 0 0 1-4.0 0z"/><path d="M686.6 299.5h4.0a2.0 2.6 0 0 1-4.0 0z"/><path d="M708.0 125.3h4.0a2.0 2.6 0 0 1-4.0 0z"/><path d="M796.9 49.8h4.0a2.0 2.6 0 0 1-4.0 0z"/><path d="M756.8 413.0h4.0a2.0 2.6 0 0 1-4.0 0z"/><path d="M414.4 463.8h3.4a1.7 2.2 0 0 1-3.4 0z"/><path d="M714.5 50.1h3.4a1.7 2.2 0 0 1-3.4 0z"/><path d="M727.7 295.8h3.4a1.7 2.2 0 0 1-3.4 0z"/><path d="M678.3 42.1h4.0a2.0 2.6 0 0 1-4.0 0z"/><path d="M719.8 80.2h3.4a1.7 2.2 0 0 1-3.4 0z"/><path d="M370.9 452.2h4.0a2.0 2.6 0 0 1-4.0 0z"/><path d="M682.5 149.0h5.4a2.7 3.5 0 0 1-5.4 0z"/><path d="M757.6 220.3h4.6a2.3 3.0 0 0 1-4.6 0z"/><path d="M573.5 443.9h4.6a2.3 3.0 0 0 1-4.6 0z"/><path d="M681.9 225.6h4.6a2.3 3.0 0 0 1-4.6 0z"/><path d="M708.7 650.1h3.4a1.7 2.2 0 0 1-3.4 0z"/><path d="M686.8 66.0h4.6a2.3 3.0 0 0 1-4.6 0z"/><path d="M708.9 190.5h4.6a2.3 3.0 0 0 1-4.6 0z"/><path d="M758.6 107.8h3.4a1.7 2.2 0 0 1-3.4 0z"/><path d="M712.4 397.6h5.4a2.7 3.5 0 0 1-5.4 0z"/><path d="M741.2 288.1h4.0a2.0 2.6 0 0 1-4.0 0z"/><path d="M707.2 498.1h5.4a2.7 3.5 0 0 1-5.4 0z"/><path d="M665.8 233.3h3.4a1.7 2.2 0 0 1-3.4 0z"/><path d="M812.0 48.1h5.4a2.7 3.5 0 0 1-5.4 0z"/><path d="M779.2 49.8h5.4a2.7 3.5 0 0 1-5.4 0z"/><path d="M657.9 253.4h4.6a2.3 3.0 0 0 1-4.6 0z"/><path d="M746.5 435.2h4.0a2.0 2.6 0 0 1-4.0 0z"/><path d="M870.2 91.3h4.6a2.3 3.0 0 0 1-4.6 0z"/><path d="M684.3 493.1h3.4a1.7 2.2 0 0 1-3.4 0z"/><path d="M735.5 435.3h4.0a2.0 2.6 0 0 1-4.0 0z"/><path d="M864.3 74.7h3.4a1.7 2.2 0 0 1-3.4 0z"/><path d="M830.8 77.8h5.4a2.7 3.5 0 0 1-5.4 0z"/><path d="M822.7 51.1h4.0a2.0 2.6 0 0 1-4.0 0z"/><path d="M658.2 15.0h3.4a1.7 2.2 0 0 1-3.4 0z"/><path d="M690.0 290.0h5.4a2.7 3.5 0 0 1-5.4 0z"/><path d="M693.3 259.7h4.0a2.0 2.6 0 0 1-4.0 0z"/><path d="M712.5 106.2h4.0a2.0 2.6 0 0 1-4.0 0z"/><path d="M793.9 87.5h4.0a2.0 2.6 0 0 1-4.0 0z"/><path d="M689.5 70.3h4.6a2.3 3.0 0 0 1-4.6 0z"/><path d="M700.9 215.6h4.0a2.0 2.6 0 0 1-4.0 0z"/><path d="M695.0 31.3h4.0a2.0 2.6 0 0 1-4.0 0z"/><path d="M761.6 434.9h4.0a2.0 2.6 0 0 1-4.0 0z"/><path d="M714.9 193.4h4.0a2.0 2.6 0 0 1-4.0 0z"/><path d="M689.4 553.0h5.4a2.7 3.5 0 0 1-5.4 0z"/><path d="M666.0 434.5h4.0a2.0 2.6 0 0 1-4.0 0z"/><path d="M722.0 291.2h4.0a2.0 2.6 0 0 1-4.0 0z"/><path d="M755.3 250.1h5.4a2.7 3.5 0 0 1-5.4 0z"/><path d="M821.6 55.1h4.6a2.3 3.0 0 0 1-4.6 0z"/><path d="M677.6 394.8h4.6a2.3 3.0 0 0 1-4.6 0z"/><path d="M747.5 247.1h4.0a2.0 2.6 0 0 1-4.0 0z"/><path d="M727.0 455.4h4.0a2.0 2.6 0 0 1-4.0 0z"/><path d="M746.2 652.5h5.4a2.7 3.5 0 0 1-5.4 0z"/><path d="M675.6 565.1h4.0a2.0 2.6 0 0 1-4.0 0z"/><path d="M736.7 222.8h4.6a2.3 3.0 0 0 1-4.6 0z"/><path d="M687.4 403.5h4.0a2.0 2.6 0 0 1-4.0 0z"/><path d="M753.8 62.1h5.4a2.7 3.5 0 0 1-5.4 0z"/><path d="M517.0 473.9h4.6a2.3 3.0 0 0 1-4.6 0z"/><path d="M733.5 161.2h4.0a2.0 2.6 0 0 1-4.0 0z"/><path d="M727.4 162.1h4.0a2.0 2.6 0 0 1-4.0 0z"/><path d="M731.6 365.3h4.6a2.3 3.0 0 0 1-4.6 0z"/><path d="M744.7 151.9h5.4a2.7 3.5 0 0 1-5.4 0z"/><path d="M708.6 274.6h4.0a2.0 2.6 0 0 1-4.0 0z"/><path d="M680.2 112.5h4.0a2.0 2.6 0 0 1-4.0 0z"/><path d="M527.3 443.9h3.4a1.7 2.2 0 0 1-3.4 0z"/><path d="M837.0 77.8h3.4a1.7 2.2 0 0 1-3.4 0z"/><path d="M734.3 444.0h4.6a2.3 3.0 0 0 1-4.6 0z"/><path d="M697.4 342.2h4.6a2.3 3.0 0 0 1-4.6 0z"/><path d="M753.1 51.0h5.4a2.7 3.5 0 0 1-5.4 0z"/><path d="M742.3 596.6h4.6a2.3 3.0 0 0 1-4.6 0z"/><path d="M620.5 475.1h3.4a1.7 2.2 0 0 1-3.4 0z"/><path d="M705.1 46.4h4.0a2.0 2.6 0 0 1-4.0 0z"/><path d="M856.3 88.1h3.4a1.7 2.2 0 0 1-3.4 0z"/><path d="M752.4 401.7h3.4a1.7 2.2 0 0 1-3.4 0z"/><path d="M700.4 272.7h3.4a1.7 2.2 0 0 1-3.4 0z"/><path d="M886.2 105.3h4.0a2.0 2.6 0 0 1-4.0 0z"/><path d="M718.3 228.3h4.6a2.3 3.0 0 0 1-4.6 0z"/><path d="M672.9 306.5h4.6a2.3 3.0 0 0 1-4.6 0z"/><path d="M676.0 135.5h4.0a2.0 2.6 0 0 1-4.0 0z"/><path d="M674.8 93.6h4.0a2.0 2.6 0 0 1-4.0 0z"/><path d="M737.3 132.6h4.6a2.3 3.0 0 0 1-4.6 0z"/><path d="M763.1 39.6h4.6a2.3 3.0 0 0 1-4.6 0z"/><path d="M655.6 19.6h4.0a2.0 2.6 0 0 1-4.0 0z"/><path d="M770.4 87.8h4.0a2.0 2.6 0 0 1-4.0 0z"/><path d="M758.9 175.3h5.4a2.7 3.5 0 0 1-5.4 0z"/><path d="M731.2 384.5h5.4a2.7 3.5 0 0 1-5.4 0z"/><path d="M780.9 25.4h5.4a2.7 3.5 0 0 1-5.4 0z"/><path d="M758.3 201.1h5.4a2.7 3.5 0 0 1-5.4 0z"/><path d="M757.1 155.6h4.6a2.3 3.0 0 0 1-4.6 0z"/><path d="M714.6 250.0h4.0a2.0 2.6 0 0 1-4.0 0z"/><path d="M742.3 425.4h4.0a2.0 2.6 0 0 1-4.0 0z"/></g><path d="M734.5 242.5l6 6M740.5 242.5l-6 6M548.1 459.4l6 6M554.1 459.4l-6 6M732.4 358.6l6 6M738.4 358.6l-6 6M729.2 226.3l6 6M735.2 226.3l-6 6M688.7 62.0l6 6M694.7 62.0l-6 6M693.7 148.8l6 6M699.7 148.8l-6 6M669.8 96.8l6 6M675.8 96.8l-6 6M645.7 477.4l6 6M651.7 477.4l-6 6M813.7 65.7l6 6M819.7 65.7l-6 6M690.6 376.2l6 6M696.6 376.2l-6 6M720.3 352.4l6 6M726.3 352.4l-6 6M690.6 65.3l6 6M696.6 65.3l-6 6M749.1 471.8l6 6M755.1 471.8l-6 6M792.7 32.1l6 6M798.7 32.1l-6 6M709.0 400.1l6 6M715.0 400.1l-6 6M739.0 623.4l6 6M745.0 623.4l-6 6M643.2 459.6l6 6M649.2 459.6l-6 6M804.7 84.9l6 6M810.7 84.9l-6 6M725.9 556.7l6 6M731.9 556.7l-6 6M768.4 37.1l6 6M774.4 37.1l-6 6M603.3 466.0l6 6M609.3 466.0l-6 6M701.2 330.9l6 6M707.2 330.9l-6 6M757.5 129.1l6 6M763.5 129.1l-6 6M792.7 28.0l6 6M798.7 28.0l-6 6M680.2 359.8l6 6M686.2 359.8l-6 6M727.7 650.4l6 6M733.7 650.4l-6 6M730.8 317.1l6 6M736.8 317.1l-6 6M666.0 212.6l6 6M672.0 212.6l-6 6M520.9 449.6l6 6M526.9 449.6l-6 6M762.0 25.8l6 6M768.0 25.8l-6 6M757.1 192.2l6 6M763.1 192.2l-6 6M816.8 71.0l6 6M822.8 71.0l-6 6M739.6 355.8l6 6M745.6 355.8l-6 6M716.8 442.3l6 6M722.8 442.3l-6 6M692.6 626.8l6 6M698.6 626.8l-6 6M785.8 58.5l6 6M791.8 58.5l-6 6M521.0 476.3l6 6M527.0 476.3l-6 6M681.4 306.0l6 6M687.4 306.0l-6 6M658.7 467.0l6 6M664.7 467.0l-6 6M762.9 196.5l6 6M768.9 196.5l-6 6M715.0 460.2l6 6M721.0 460.2l-6 6M661.3 434.4l6 6M667.3 434.4l-6 6M728.7 223.7l6 6M734.7 223.7l-6 6M589.5 458.2l6 6M595.5 458.2l-6 6M757.1 250.0l6 6M763.1 250.0l-6 6M757.9 553.0l6 6M763.9 553.0l-6 6M431.9 442.4l6 6M437.9 442.4l-6 6M634.2 452.0l6 6M640.2 452.0l-6 6M673.6 591.0l6 6M679.6 591.0l-6 6M647.0 444.9l6 6M653.0 444.9l-6 6M732.2 44.3l6 6M738.2 44.3l-6 6M670.4 128.7l6 6M676.4 128.7l-6 6M684.1 483.1l6 6M690.1 483.1l-6 6M666.3 425.7l6 6M672.3 425.7l-6 6M670.8 151.3l6 6M676.8 151.3l-6 6M660.1 420.2l6 6M666.1 420.2l-6 6M684.8 442.2l6 6M690.8 442.2l-6 6M704.1 29.5l6 6M710.1 29.5l-6 6M762.2 568.1l6 6M768.2 568.1l-6 6M794.0 72.3l6 6M800.0 72.3l-6 6M694.7 580.8l6 6M700.7 580.8l-6 6M744.6 153.5l6 6M750.6 153.5l-6 6M381.1 468.1l6 6M387.1 468.1l-6 6M703.4 284.4l6 6M709.4 284.4l-6 6M573.5 453.6l6 6M579.5 453.6l-6 6M414.1 458.4l6 6M420.1 458.4l-6 6M691.0 57.5l6 6M697.0 57.5l-6 6M764.6 30.4l6 6M770.6 30.4l-6 6M623.1 458.3l6 6M629.1 458.3l-6 6M787.1 103.4l6 6M793.1 103.4l-6 6M717.6 500.7l6 6M723.6 500.7l-6 6" stroke="#f0f0f0" stroke-width="1" fill="none"/><path d="M702 75 h12 M708 68 v14 M668 288 h12 M674 281 v14 M710 423 h12 M716 416 v14 M658 428 h12 M664 421 v14 M490 451 h12 M496 444 v14 M667 451 h12 M673 444 v14 M422 459 h12 M428 452 v14 M442 463 h12 M448 456 v14 M672 582 h12 M678 575 v14 M722 632 h12 M728 625 v14 M672 647 h12 M678 640 v14 M812 640 h12 M818 633 v14 M774 642 h12 M780 635 v14 M632 9 h12 M638 2 v14 M682 4 h12 M688 -3 v14 M562 7 h12 M568 0 v14" stroke="#20e030" stroke-width="1.4" fill="none"/></g><circle cx="672" cy="333" r="327.5" fill="none" stroke="#5a28a8" stroke-width="1" opacity="0.8"/><g clip-path="url(#disk2)"><rect x="416.3" y="541.6" width="2.4" height="2" fill="#ff1414"/><rect x="352.1" y="258.4" width="2.4" height="2" fill="#ff1414"/><rect x="419.3" y="544.8" width="2.4" height="2" fill="#ff1414"/><rect x="896.4" y="571.7" width="2.4" height="2" fill="#fff"/><rect x="808.1" y="33.5" width="2.4" height="2" fill="#ff1414"/><rect x="409.8" y="133.0" width="2.4" height="2" fill="#20e030"/><rect x="767.8" y="647.9" width="2.4" height="2" fill="#fff"/><rect x="619.9" y="655.9" width="2.4" height="2" fill="#ff1414"/><rect x="361.5" y="443.2" width="2.4" height="2" fill="#20e030"/><rect x="788.3" y="25.7" width="2.4" height="2" fill="#20e030"/><rect x="910.3" y="107.1" width="2.4" height="2" fill="#20e030"/><rect x="989.5" y="412.6" width="2.4" height="2" fill="#ff1414"/><rect x="912.8" y="109.7" width="2.4" height="2" fill="#ff1414"/><rect x="853.1" y="57.9" width="2.4" height="2" fill="#fff"/><rect x="422.2" y="118.2" width="2.4" height="2" fill="#ff1414"/><rect x="390.0" y="499.6" width="2.4" height="2" fill="#20e030"/><rect x="637.5" y="6.4" width="2.4" height="2" fill="#ff1414"/><rect x="805.5" y="633.4" width="2.4" height="2" fill="#fff"/><rect x="568.3" y="22.8" width="2.4" height="2" fill="#ff1414"/><rect x="623.1" y="658.2" width="2.4" height="2" fill="#ff40ff"/><rect x="508.4" y="49.6" width="2.4" height="2" fill="#ff1414"/><rect x="615.5" y="10.3" width="2.4" height="2" fill="#fff"/><rect x="392.6" y="507.2" width="2.4" height="2" fill="#ff1414"/><rect x="999.1" y="323.4" width="2.4" height="2" fill="#ff1414"/><rect x="342.8" y="323.9" width="2.4" height="2" fill="#fff"/><rect x="359.7" y="432.4" width="2.4" height="2" fill="#20e030"/><rect x="986.3" y="423.5" width="2.4" height="2" fill="#ff1414"/><rect x="559.5" y="23.6" width="2.4" height="2" fill="#fff"/><rect x="489.8" y="606.0" width="2.4" height="2" fill="#ff1414"/><rect x="411.5" y="530.7" width="2.4" height="2" fill="#ff1414"/><rect x="588.8" y="16.3" width="2.4" height="2" fill="#ff1414"/><rect x="669.3" y="4.6" width="2.4" height="2" fill="#ff1414"/><rect x="957.7" y="496.1" width="2.4" height="2" fill="#ff1414"/><rect x="983.4" y="231.9" width="2.4" height="2" fill="#ff40ff"/><rect x="850.2" y="58.2" width="2.4" height="2" fill="#ff1414"/><rect x="415.7" y="129.0" width="2.4" height="2" fill="#ff1414"/><rect x="351.6" y="262.1" width="2.4" height="2" fill="#ff1414"/><rect x="517.0" y="45.1" width="2.4" height="2" fill="#ff40ff"/><rect x="859.0" y="602.6" width="2.4" height="2" fill="#ff1414"/><rect x="598.9" y="11.5" width="2.4" height="2" fill="#20e030"/><rect x="741.4" y="654.7" width="2.4" height="2" fill="#ff1414"/><rect x="796.0" y="28.3" width="2.4" height="2" fill="#ff1414"/><rect x="496.7" y="56.6" width="2.4" height="2" fill="#ff1414"/><rect x="554.8" y="638.4" width="2.4" height="2" fill="#ff1414"/><rect x="984.9" y="431.8" width="2.4" height="2" fill="#ff1414"/><rect x="967.9" y="191.1" width="2.4" height="2" fill="#ff1414"/><rect x="773.1" y="644.0" width="2.4" height="2" fill="#ff1414"/><rect x="999.3" y="310.9" width="2.4" height="2" fill="#ff1414"/><rect x="532.6" y="37.0" width="2.4" height="2" fill="#ff1414"/><rect x="767.7" y="17.7" width="2.4" height="2" fill="#ff1414"/><rect x="618.8" y="10.2" width="2.4" height="2" fill="#20e030"/><rect x="927.7" y="538.4" width="2.4" height="2" fill="#20e030"/><rect x="442.1" y="97.9" width="2.4" height="2" fill="#20e030"/><rect x="412.5" y="534.1" width="2.4" height="2" fill="#ff1414"/><rect x="746.0" y="652.6" width="2.4" height="2" fill="#ff1414"/><rect x="999.5" y="363.9" width="2.4" height="2" fill="#ff1414"/><rect x="420.1" y="543.6" width="2.4" height="2" fill="#ff1414"/><rect x="492.8" y="58.5" width="2.4" height="2" fill="#20e030"/><rect x="449.5" y="573.0" width="2.4" height="2" fill="#ff1414"/><rect x="392.8" y="507.5" width="2.4" height="2" fill="#fff"/><rect x="997.5" y="298.3" width="2.4" height="2" fill="#20e030"/><rect x="756.5" y="14.3" width="2.4" height="2" fill="#20e030"/><rect x="828.3" y="623.5" width="2.4" height="2" fill="#20e030"/><rect x="523.9" y="626.6" width="2.4" height="2" fill="#fff"/><rect x="527.6" y="36.4" width="2.4" height="2" fill="#ff1414"/><rect x="891.8" y="575.8" width="2.4" height="2" fill="#ff1414"/><rect x="535.5" y="633.0" width="2.4" height="2" fill="#fff"/><rect x="970.1" y="467.6" width="2.4" height="2" fill="#20e030"/><rect x="360.2" y="436.7" width="2.4" height="2" fill="#ff1414"/><rect x="708.2" y="659.8" width="2.4" height="2" fill="#ff1414"/><rect x="707.9" y="659.9" width="2.4" height="2" fill="#ff1414"/><rect x="553.0" y="640.0" width="2.4" height="2" fill="#ff1414"/><rect x="433.2" y="109.4" width="2.4" height="2" fill="#ff40ff"/><rect x="344.4" y="335.6" width="2.4" height="2" fill="#fff"/><rect x="764.5" y="646.8" width="2.4" height="2" fill="#ff1414"/><rect x="402.8" y="142.4" width="2.4" height="2" fill="#ff1414"/><rect x="906.9" y="104.9" width="2.4" height="2" fill="#ff40ff"/><rect x="467.9" y="74.6" width="2.4" height="2" fill="#20e030"/><rect x="757.2" y="16.0" width="2.4" height="2" fill="#ff40ff"/><rect x="673.1" y="5.3" width="2.4" height="2" fill="#ff1414"/><rect x="511.8" y="618.9" width="2.4" height="2" fill="#20e030"/><rect x="982.9" y="442.9" width="2.4" height="2" fill="#ff1414"/><rect x="776.5" y="21.0" width="2.4" height="2" fill="#ff1414"/><rect x="416.6" y="126.9" width="2.4" height="2" fill="#ff40ff"/><rect x="805.4" y="633.6" width="2.4" height="2" fill="#ff1414"/><rect x="895.8" y="94.3" width="2.4" height="2" fill="#ff1414"/><rect x="984.4" y="439.1" width="2.4" height="2" fill="#ff1414"/><rect x="902.8" y="565.4" width="2.4" height="2" fill="#20e030"/><rect x="833.1" y="45.2" width="2.4" height="2" fill="#ff1414"/><rect x="344.1" y="317.7" width="2.4" height="2" fill="#fff"/><rect x="548.0" y="637.9" width="2.4" height="2" fill="#ff1414"/><rect x="379.9" y="484.1" width="2.4" height="2" fill="#ff40ff"/><rect x="599.7" y="653.3" width="2.4" height="2" fill="#ff1414"/><rect x="771.1" y="647.3" width="2.4" height="2" fill="#fff"/><rect x="961.1" y="492.0" width="2.4" height="2" fill="#fff"/><rect x="435.8" y="561.2" width="2.4" height="2" fill="#fff"/><rect x="343.0" y="322.1" width="2.4" height="2" fill="#ff1414"/><rect x="811.5" y="34.6" width="2.4" height="2" fill="#ff1414"/><rect x="696.6" y="5.6" width="2.4" height="2" fill="#ff1414"/><rect x="690.3" y="3.7" width="2.4" height="2" fill="#20e030"/><rect x="352.3" y="256.9" width="2.4" height="2" fill="#ff1414"/><rect x="657.0" y="661.0" width="2.4" height="2" fill="#fff"/><rect x="603.9" y="654.5" width="2.4" height="2" fill="#fff"/><rect x="966.5" y="476.0" width="2.4" height="2" fill="#fff"/><rect x="782.3" y="643.8" width="2.4" height="2" fill="#ff1414"/><rect x="999.4" y="359.5" width="2.4" height="2" fill="#ff1414"/><rect x="441.0" y="566.2" width="2.4" height="2" fill="#fff"/><rect x="979.0" y="212.1" width="2.4" height="2" fill="#ff40ff"/><rect x="427.3" y="551.3" width="2.4" height="2" fill="#20e030"/><rect x="969.2" y="475.7" width="2.4" height="2" fill="#ff1414"/><rect x="425.7" y="550.6" width="2.4" height="2" fill="#ff1414"/><rect x="698.8" y="4.2" width="2.4" height="2" fill="#ff1414"/><rect x="480.9" y="601.0" width="2.4" height="2" fill="#ff1414"/><rect x="548.0" y="28.2" width="2.4" height="2" fill="#ff1414"/><rect x="425.3" y="549.6" width="2.4" height="2" fill="#ff1414"/><rect x="687.7" y="659.7" width="2.4" height="2" fill="#ff40ff"/><rect x="448.2" y="91.8" width="2.4" height="2" fill="#ff1414"/><rect x="506.5" y="50.5" width="2.4" height="2" fill="#20e030"/><rect x="355.8" y="423.9" width="2.4" height="2" fill="#ff40ff"/><rect x="677.3" y="661.7" width="2.4" height="2" fill="#ff1414"/><rect x="849.9" y="58.6" width="2.4" height="2" fill="#ff1414"/><rect x="468.9" y="73.2" width="2.4" height="2" fill="#fff"/><rect x="582.1" y="15.6" width="2.4" height="2" fill="#ff1414"/><rect x="346.7" y="294.9" width="2.4" height="2" fill="#fff"/><rect x="837.6" y="616.4" width="2.4" height="2" fill="#ff1414"/><rect x="565.7" y="645.3" width="2.4" height="2" fill="#ff1414"/><rect x="920.8" y="118.2" width="2.4" height="2" fill="#ff1414"/><rect x="391.9" y="506.8" width="2.4" height="2" fill="#ff1414"/><rect x="895.2" y="93.6" width="2.4" height="2" fill="#20e030"/><rect x="726.8" y="9.6" width="2.4" height="2" fill="#ff1414"/><rect x="632.9" y="658.3" width="2.4" height="2" fill="#ff1414"/><rect x="409.2" y="529.1" width="2.4" height="2" fill="#ff1414"/><rect x="804.5" y="34.0" width="2.4" height="2" fill="#ff1414"/><rect x="720.8" y="8.4" width="2.4" height="2" fill="#fff"/><rect x="486.1" y="61.3" width="2.4" height="2" fill="#ff1414"/><rect x="818.1" y="626.2" width="2.4" height="2" fill="#ff1414"/><rect x="777.1" y="643.2" width="2.4" height="2" fill="#ff1414"/><rect x="358.3" y="433.5" width="2.4" height="2" fill="#ff1414"/><rect x="771.9" y="646.7" width="2.4" height="2" fill="#ff1414"/><rect x="652.6" y="662.1" width="2.4" height="2" fill="#fff"/><rect x="364.9" y="453.0" width="2.4" height="2" fill="#ff1414"/><rect x="893.7" y="92.0" width="2.4" height="2" fill="#ff40ff"/><rect x="953.0" y="500.9" width="2.4" height="2" fill="#ff1414"/><rect x="492.1" y="608.2" width="2.4" height="2" fill="#fff"/><rect x="344.1" y="363.6" width="2.4" height="2" fill="#ff1414"/><rect x="977.3" y="456.2" width="2.4" height="2" fill="#ff1414"/><rect x="504.9" y="49.2" width="2.4" height="2" fill="#ff1414"/><rect x="941.6" y="520.8" width="2.4" height="2" fill="#ff1414"/><rect x="438.7" y="564.4" width="2.4" height="2" fill="#ff40ff"/><rect x="971.0" y="197.2" width="2.4" height="2" fill="#ff40ff"/><rect x="412.0" y="133.0" width="2.4" height="2" fill="#ff1414"/><rect x="926.5" y="122.9" width="2.4" height="2" fill="#ff1414"/><rect x="978.6" y="213.8" width="2.4" height="2" fill="#fff"/><rect x="418.9" y="121.4" width="2.4" height="2" fill="#ff40ff"/><rect x="785.2" y="26.2" width="2.4" height="2" fill="#ff1414"/><rect x="403.2" y="523.6" width="2.4" height="2" fill="#ff1414"/><rect x="995.1" y="385.6" width="2.4" height="2" fill="#20e030"/><rect x="611.4" y="656.5" width="2.4" height="2" fill="#ff1414"/><rect x="449.3" y="574.9" width="2.4" height="2" fill="#ff1414"/><rect x="896.7" y="93.3" width="2.4" height="2" fill="#ff1414"/><rect x="797.4" y="638.2" width="2.4" height="2" fill="#ff40ff"/><rect x="998.3" y="367.2" width="2.4" height="2" fill="#ff1414"/><rect x="995.2" y="270.5" width="2.4" height="2" fill="#ff1414"/><rect x="363.1" y="445.7" width="2.4" height="2" fill="#fff"/><rect x="649.7" y="4.4" width="2.4" height="2" fill="#ff40ff"/><rect x="375.5" y="477.3" width="2.4" height="2" fill="#fff"/><rect x="1000.5" y="305.8" width="2.4" height="2" fill="#ff1414"/><rect x="639.7" y="6.7" width="2.4" height="2" fill="#ff1414"/><rect x="593.9" y="12.8" width="2.4" height="2" fill="#20e030"/><rect x="743.5" y="11.7" width="2.4" height="2" fill="#ff1414"/><rect x="900.7" y="570.1" width="2.4" height="2" fill="#ff40ff"/><rect x="835.2" y="46.2" width="2.4" height="2" fill="#fff"/><rect x="833.7" y="618.8" width="2.4" height="2" fill="#ff1414"/><rect x="345.4" y="369.7" width="2.4" height="2" fill="#ff1414"/><rect x="750.6" y="652.7" width="2.4" height="2" fill="#ff1414"/><rect x="570.7" y="21.8" width="2.4" height="2" fill="#ff1414"/><rect x="996.2" y="393.2" width="2.4" height="2" fill="#ff40ff"/><rect x="941.6" y="143.9" width="2.4" height="2" fill="#ff1414"/><rect x="608.7" y="10.2" width="2.4" height="2" fill="#ff1414"/><rect x="906.3" y="561.7" width="2.4" height="2" fill="#20e030"/><rect x="452.5" y="88.6" width="2.4" height="2" fill="#ff1414"/><rect x="509.1" y="617.3" width="2.4" height="2" fill="#20e030"/><rect x="705.7" y="5.9" width="2.4" height="2" fill="#ff1414"/><rect x="489.7" y="607.8" width="2.4" height="2" fill="#ff1414"/><rect x="643.2" y="6.1" width="2.4" height="2" fill="#ff1414"/><rect x="744.1" y="11.1" width="2.4" height="2" fill="#fff"/><rect x="789.6" y="27.2" width="2.4" height="2" fill="#ff1414"/><rect x="588.7" y="649.5" width="2.4" height="2" fill="#ff40ff"/><rect x="652.5" y="3.8" width="2.4" height="2" fill="#ff1414"/><rect x="979.1" y="215.9" width="2.4" height="2" fill="#ff1414"/><rect x="871.4" y="70.3" width="2.4" height="2" fill="#20e030"/><rect x="645.1" y="6.2" width="2.4" height="2" fill="#20e030"/><rect x="350.7" y="259.9" width="2.4" height="2" fill="#fff"/><rect x="533.0" y="630.2" width="2.4" height="2" fill="#ff1414"/><rect x="971.6" y="201.0" width="2.4" height="2" fill="#ff1414"/><rect x="408.9" y="137.7" width="2.4" height="2" fill="#fff"/><rect x="1001.0" y="352.0" width="2.4" height="2" fill="#ff40ff"/><rect x="874.6" y="593.2" width="2.4" height="2" fill="#ff1414"/><rect x="343.6" y="333.3" width="2.4" height="2" fill="#20e030"/><rect x="603.4" y="655.0" width="2.4" height="2" fill="#ff1414"/><rect x="992.4" y="403.2" width="2.4" height="2" fill="#20e030"/><rect x="998.8" y="313.1" width="2.4" height="2" fill="#ff1414"/><rect x="378.0" y="185.6" width="2.4" height="2" fill="#ff1414"/><rect x="343.0" y="343.3" width="2.4" height="2" fill="#fff"/><rect x="979.2" y="452.0" width="2.4" height="2" fill="#ff1414"/><rect x="826.0" y="43.8" width="2.4" height="2" fill="#ff1414"/><rect x="972.3" y="201.8" width="2.4" height="2" fill="#ff1414"/><rect x="983.8" y="439.9" width="2.4" height="2" fill="#ff1414"/><rect x="876.7" y="75.2" width="2.4" height="2" fill="#ff40ff"/><rect x="999.4" y="300.8" width="2.4" height="2" fill="#ff1414"/><rect x="1000.1" y="314.6" width="2.4" height="2" fill="#ff40ff"/><rect x="381.8" y="486.8" width="2.4" height="2" fill="#ff40ff"/><rect x="687.9" y="5.2" width="2.4" height="2" fill="#20e030"/><rect x="624.3" y="8.6" width="2.4" height="2" fill="#ff1414"/><rect x="572.6" y="19.7" width="2.4" height="2" fill="#ff1414"/><rect x="896.0" y="574.3" width="2.4" height="2" fill="#20e030"/><rect x="889.7" y="88.8" width="2.4" height="2" fill="#ff1414"/><rect x="562.4" y="643.2" width="2.4" height="2" fill="#20e030"/><rect x="885.6" y="583.3" width="2.4" height="2" fill="#ff40ff"/><rect x="933.7" y="135.8" width="2.4" height="2" fill="#ff1414"/><rect x="782.2" y="643.0" width="2.4" height="2" fill="#ff40ff"/><rect x="622.5" y="8.0" width="2.4" height="2" fill="#ff1414"/><rect x="744.9" y="11.6" width="2.4" height="2" fill="#fff"/><rect x="984.5" y="232.3" width="2.4" height="2" fill="#ff1414"/><rect x="964.5" y="186.2" width="2.4" height="2" fill="#fff"/><rect x="812.0" y="628.7" width="2.4" height="2" fill="#20e030"/><rect x="478.9" y="66.9" width="2.4" height="2" fill="#ff1414"/><rect x="442.8" y="98.1" width="2.4" height="2" fill="#ff1414"/><rect x="912.9" y="555.9" width="2.4" height="2" fill="#ff40ff"/><rect x="546.7" y="27.9" width="2.4" height="2" fill="#ff1414"/><rect x="662.1" y="3.8" width="2.4" height="2" fill="#ff1414"/><rect x="493.0" y="56.6" width="2.4" height="2" fill="#ff1414"/><rect x="429.3" y="555.0" width="2.4" height="2" fill="#fff"/><rect x="452.0" y="575.4" width="2.4" height="2" fill="#ff1414"/><rect x="908.9" y="561.2" width="2.4" height="2" fill="#20e030"/><rect x="723.6" y="657.7" width="2.4" height="2" fill="#20e030"/><rect x="345.6" y="375.3" width="2.4" height="2" fill="#ff1414"/><rect x="762.1" y="18.1" width="2.4" height="2" fill="#fff"/><rect x="1001.1" y="332.9" width="2.4" height="2" fill="#ff40ff"/><rect x="377.1" y="191.0" width="2.4" height="2" fill="#ff1414"/><rect x="597.6" y="11.9" width="2.4" height="2" fill="#20e030"/><rect x="803.0" y="635.3" width="2.4" height="2" fill="#ff1414"/><rect x="413.2" y="536.9" width="2.4" height="2" fill="#20e030"/><rect x="344.3" y="356.6" width="2.4" height="2" fill="#20e030"/><rect x="352.4" y="253.1" width="2.4" height="2" fill="#ff1414"/><rect x="906.1" y="564.5" width="2.4" height="2" fill="#ff1414"/><rect x="934.1" y="136.5" width="2.4" height="2" fill="#20e030"/><rect x="561.6" y="25.2" width="2.4" height="2" fill="#fff"/><rect x="774.2" y="22.0" width="2.4" height="2" fill="#ff1414"/><rect x="379.0" y="183.5" width="2.4" height="2" fill="#ff1414"/><rect x="367.5" y="206.9" width="2.4" height="2" fill="#ff1414"/><rect x="954.2" y="499.0" width="2.4" height="2" fill="#ff40ff"/><rect x="456.9" y="581.5" width="2.4" height="2" fill="#fff"/><rect x="997.6" y="285.8" width="2.4" height="2" fill="#ff1414"/><rect x="568.9" y="646.3" width="2.4" height="2" fill="#20e030"/><rect x="942.7" y="148.1" width="2.4" height="2" fill="#20e030"/><rect x="362.8" y="444.5" width="2.4" height="2" fill="#ff1414"/><rect x="545.0" y="637.3" width="2.4" height="2" fill="#ff40ff"/><rect x="413.9" y="129.7" width="2.4" height="2" fill="#ff1414"/><rect x="939.7" y="525.0" width="2.4" height="2" fill="#ff1414"/><path d="M475.4 75.7h8M479.4 70.7v10" stroke="#ff30ff" stroke-width="1.2"/><circle cx="568.5" cy="27.9" r="2.2" fill="none" stroke="#d020e0" stroke-width="1.1"/><circle cx="589.9" cy="19.3" r="2.2" fill="none" stroke="#20e030" stroke-width="1.1"/><circle cx="528.9" cy="36.7" r="2.2" fill="none" stroke="#20e030" stroke-width="1.1"/><circle cx="627.8" cy="9.2" r="2.2" fill="none" stroke="#fff" stroke-width="1.1"/><path d="M497.6 54.7h8M501.6 49.7v10" stroke="#d020e0" stroke-width="1.2"/><path d="M580.9 23.1h8M584.9 18.1v10" stroke="#d020e0" stroke-width="1.2"/><circle cx="575.5" cy="22.5" r="2.2" fill="none" stroke="#ff30ff" stroke-width="1.1"/><circle cx="491.9" cy="56.6" r="2.2" fill="none" stroke="#20e030" stroke-width="1.1"/><circle cx="631.9" cy="13.0" r="2.2" fill="none" stroke="#d020e0" stroke-width="1.1"/><circle cx="487.7" cy="64.7" r="2.2" fill="none" stroke="#ff30ff" stroke-width="1.1"/><circle cx="482.5" cy="63.9" r="2.2" fill="none" stroke="#d020e0" stroke-width="1.1"/><circle cx="602.4" cy="17.9" r="2.2" fill="none" stroke="#ff30ff" stroke-width="1.1"/><path d="M628.5 11.6h8M632.5 6.6v10" stroke="#ff30ff" stroke-width="1.2"/><path d="M485.9 63.5h8M489.9 58.5v10" stroke="#d020e0" stroke-width="1.2"/><path d="M600.3 19.3h8M604.3 14.3v10" stroke="#d020e0" stroke-width="1.2"/><circle cx="613.8" cy="12.7" r="2.2" fill="none" stroke="#20e030" stroke-width="1.1"/><circle cx="479.9" cy="73.1" r="2.2" fill="none" stroke="#20e030" stroke-width="1.1"/><path d="M598.9 13.6h8M602.9 8.6v10" stroke="#20e030" stroke-width="1.2"/><circle cx="617.0" cy="13.7" r="2.2" fill="none" stroke="#20e030" stroke-width="1.1"/><path d="M469.2 75.7h8M473.2 70.7v10" stroke="#ff30ff" stroke-width="1.2"/><circle cx="492.6" cy="61.2" r="2.2" fill="none" stroke="#d020e0" stroke-width="1.1"/><path d="M583.8 14.2h8M587.8 9.2v10" stroke="#fff" stroke-width="1.2"/><circle cx="581.0" cy="21.8" r="2.2" fill="none" stroke="#20e030" stroke-width="1.1"/><circle cx="635.2" cy="7.1" r="2.2" fill="none" stroke="#20e030" stroke-width="1.1"/><path d="M625.5 10.6h8M629.5 5.6v10" stroke="#fff" stroke-width="1.2"/><path d="M601.1 17.0h8M605.1 12.0v10" stroke="#ff30ff" stroke-width="1.2"/><path d="M531.5 40.1h8M535.5 35.1v10" stroke="#ff30ff" stroke-width="1.2"/><circle cx="484.6" cy="70.7" r="2.2" fill="none" stroke="#ff30ff" stroke-width="1.1"/><path d="M474.8 68.6h8M478.8 63.6v10" stroke="#20e030" stroke-width="1.2"/><path d="M600.7 20.0h8M604.7 15.0v10" stroke="#20e030" stroke-width="1.2"/><path d="M622.4 14.9h8M626.4 9.9v10" stroke="#20e030" stroke-width="1.2"/><circle cx="637.2" cy="6.0" r="2.2" fill="none" stroke="#fff" stroke-width="1.1"/><circle cx="475.8" cy="77.8" r="2.2" fill="none" stroke="#fff" stroke-width="1.1"/><circle cx="537.6" cy="36.7" r="2.2" fill="none" stroke="#d020e0" stroke-width="1.1"/><path d="M586.3 13.8h8M590.3 8.8v10" stroke="#20e030" stroke-width="1.2"/><path d="M474.3 72.6h8M478.3 67.6v10" stroke="#ff30ff" stroke-width="1.2"/><circle cx="616.8" cy="12.5" r="2.2" fill="none" stroke="#ff30ff" stroke-width="1.1"/><path d="M525.9 44.8h8M529.9 39.8v10" stroke="#d020e0" stroke-width="1.2"/><path d="M533.9 38.3h8M537.9 33.3v10" stroke="#d020e0" stroke-width="1.2"/><path d="M518.7 42.3h8M522.7 37.3v10" stroke="#20e030" stroke-width="1.2"/><circle cx="612.9" cy="15.6" r="2.2" fill="none" stroke="#20e030" stroke-width="1.1"/><circle cx="502.5" cy="52.9" r="2.2" fill="none" stroke="#20e030" stroke-width="1.1"/><path d="M619.5 7.3h8M623.5 2.3v10" stroke="#fff" stroke-width="1.2"/><path d="M614.1 8.1h8M618.1 3.1v10" stroke="#20e030" stroke-width="1.2"/><circle cx="483.2" cy="74.6" r="2.2" fill="none" stroke="#20e030" stroke-width="1.1"/><circle cx="528.3" cy="47.0" r="2.2" fill="none" stroke="#fff" stroke-width="1.1"/><circle cx="528.0" cy="46.1" r="2.2" fill="none" stroke="#20e030" stroke-width="1.1"/><circle cx="553.7" cy="26.0" r="2.2" fill="none" stroke="#20e030" stroke-width="1.1"/><circle cx="549.4" cy="35.7" r="2.2" fill="none" stroke="#fff" stroke-width="1.1"/><circle cx="545.8" cy="34.9" r="2.2" fill="none" stroke="#d020e0" stroke-width="1.1"/><path d="M493.3 55.3h8M497.3 50.3v10" stroke="#ff30ff" stroke-width="1.2"/><circle cx="577.2" cy="22.8" r="2.2" fill="none" stroke="#ff30ff" stroke-width="1.1"/><circle cx="539.8" cy="37.6" r="2.2" fill="none" stroke="#fff" stroke-width="1.1"/><circle cx="502.5" cy="61.1" r="2.2" fill="none" stroke="#20e030" stroke-width="1.1"/><circle cx="524.6" cy="48.6" r="2.2" fill="none" stroke="#fff" stroke-width="1.1"/><circle cx="546.1" cy="31.6" r="2.2" fill="none" stroke="#d020e0" stroke-width="1.1"/><path d="M544.4 32.5h8M548.4 27.5v10" stroke="#fff" stroke-width="1.2"/><path d="M516.2 42.7h8M520.2 37.7v10" stroke="#20e030" stroke-width="1.2"/><circle cx="623.8" cy="8.1" r="2.2" fill="none" stroke="#20e030" stroke-width="1.1"/><circle cx="630.0" cy="7.8" r="2.2" fill="none" stroke="#ff30ff" stroke-width="1.1"/><circle cx="549.3" cy="29.2" r="2.2" fill="none" stroke="#ff30ff" stroke-width="1.1"/><path d="M603.6 15.2h8M607.6 10.2v10" stroke="#20e030" stroke-width="1.2"/><circle cx="540.1" cy="38.3" r="2.2" fill="none" stroke="#20e030" stroke-width="1.1"/><path d="M533.9 35.7h8M537.9 30.7v10" stroke="#fff" stroke-width="1.2"/><path d="M504.1 49.3h8M508.1 44.3v10" stroke="#d020e0" stroke-width="1.2"/><circle cx="507.5" cy="49.0" r="2.2" fill="none" stroke="#ff30ff" stroke-width="1.1"/><path d="M596.0 20.1h8M600.0 15.1v10" stroke="#fff" stroke-width="1.2"/><path d="M492.2 53.8h8M496.2 48.8v10" stroke="#20e030" stroke-width="1.2"/><circle cx="495.9" cy="64.4" r="2.2" fill="none" stroke="#20e030" stroke-width="1.1"/><path d="M636.8 656.8l6 6M642.8 656.8l-6 6" stroke="#fff" stroke-width="1.1"/><path d="M803.5 631.6h8M807.5 626.6v10" stroke="#fff" stroke-width="1.2"/><path d="M782.4 635.7l6 6M788.4 635.7l-6 6" stroke="#20e030" stroke-width="1.1"/><path d="M755.6 642.3h8M759.6 637.3v10" stroke="#fff" stroke-width="1.2"/><rect x="784.8" y="635.8" width="3" height="2.4" fill="#20e030"/><path d="M696.9 651.8l6 6M702.9 651.8l-6 6" stroke="#ff30ff" stroke-width="1.1"/><path d="M841.8 606.8l6 6M847.8 606.8l-6 6" stroke="#20e030" stroke-width="1.1"/><path d="M747.8 651.4h8M751.8 646.4v10" stroke="#ff30ff" stroke-width="1.2"/><path d="M792.9 630.4l6 6M798.9 630.4l-6 6" stroke="#20e030" stroke-width="1.1"/><rect x="824.3" y="615.7" width="3" height="2.4" fill="#ff1414"/><path d="M815.3 621.5h8M819.3 616.5v10" stroke="#e0e0e0" stroke-width="1.2"/><path d="M682.6 654.9l6 6M688.6 654.9l-6 6" stroke="#20e030" stroke-width="1.1"/><rect x="791.4" y="636.0" width="3" height="2.4" fill="#ff30ff"/><path d="M817.6 621.2l6 6M823.6 621.2l-6 6" stroke="#ff30ff" stroke-width="1.1"/><path d="M641.6 656.9l6 6M647.6 656.9l-6 6" stroke="#e0e0e0" stroke-width="1.1"/><rect x="701.9" y="660.0" width="3" height="2.4" fill="#ff30ff"/><rect x="719.7" y="652.9" width="3" height="2.4" fill="#fff"/><path d="M803.6 627.8l6 6M809.6 627.8l-6 6" stroke="#ff30ff" stroke-width="1.1"/><rect x="762.6" y="646.9" width="3" height="2.4" fill="#e0e0e0"/><path d="M653.9 661.5h8M657.9 656.5v10" stroke="#20e030" stroke-width="1.2"/><path d="M695.1 660.2h8M699.1 655.2v10" stroke="#ff30ff" stroke-width="1.2"/><path d="M737.9 651.3l6 6M743.9 651.3l-6 6" stroke="#e0e0e0" stroke-width="1.1"/><path d="M721.4 652.3l6 6M727.4 652.3l-6 6" stroke="#20e030" stroke-width="1.1"/><path d="M644.8 650.6l6 6M650.8 650.6l-6 6" stroke="#ff1414" stroke-width="1.1"/><rect x="677.9" y="657.9" width="3" height="2.4" fill="#ff1414"/><path d="M640.4 654.1h8M644.4 649.1v10" stroke="#e0e0e0" stroke-width="1.2"/><path d="M728.8 648.6l6 6M734.8 648.6l-6 6" stroke="#ff1414" stroke-width="1.1"/><path d="M804.2 625.1h8M808.2 620.1v10" stroke="#20e030" stroke-width="1.2"/><path d="M840.4 612.5h8M844.4 607.5v10" stroke="#ff1414" stroke-width="1.2"/><rect x="700.9" y="656.9" width="3" height="2.4" fill="#20e030"/><path d="M783.4 632.2l6 6M789.4 632.2l-6 6" stroke="#ff30ff" stroke-width="1.1"/><path d="M830.8 611.9h8M834.8 606.9v10" stroke="#ff30ff" stroke-width="1.2"/><path d="M647.6 652.5l6 6M653.6 652.5l-6 6" stroke="#20e030" stroke-width="1.1"/><rect x="683.1" y="658.9" width="3" height="2.4" fill="#20e030"/><path d="M800.0 624.0l6 6M806.0 624.0l-6 6" stroke="#ff1414" stroke-width="1.1"/><rect x="722.7" y="653.0" width="3" height="2.4" fill="#ff30ff"/><path d="M659.0 656.0h8M663.0 651.0v10" stroke="#20e030" stroke-width="1.2"/><path d="M717.3 652.8h8M721.3 647.8v10" stroke="#ff30ff" stroke-width="1.2"/><rect x="841.7" y="608.8" width="3" height="2.4" fill="#ff1414"/><path d="M808.4 630.3h8M812.4 625.3v10" stroke="#ff1414" stroke-width="1.2"/><path d="M663.4 658.5l6 6M669.4 658.5l-6 6" stroke="#ff1414" stroke-width="1.1"/><path d="M689.7 653.4l6 6M695.7 653.4l-6 6" stroke="#ff1414" stroke-width="1.1"/><rect x="718.5" y="655.5" width="3" height="2.4" fill="#20e030"/><path d="M797.5 629.1h8M801.5 624.1v10" stroke="#ff1414" stroke-width="1.2"/><path d="M665.5 654.1l6 6M671.5 654.1l-6 6" stroke="#fff" stroke-width="1.1"/><path d="M693.9 653.0l6 6M699.9 653.0l-6 6" stroke="#fff" stroke-width="1.1"/><path d="M805.8 622.0l6 6M811.8 622.0l-6 6" stroke="#e0e0e0" stroke-width="1.1"/><path d="M727.0 656.2h8M731.0 651.2v10" stroke="#20e030" stroke-width="1.2"/><rect x="839.0" y="608.7" width="3" height="2.4" fill="#20e030"/><path d="M702.0 650.8l6 6M708.0 650.8l-6 6" stroke="#20e030" stroke-width="1.1"/><path d="M795.6 632.9l6 6M801.6 632.9l-6 6" stroke="#fff" stroke-width="1.1"/><path d="M736.9 649.7l6 6M742.9 649.7l-6 6" stroke="#e0e0e0" stroke-width="1.1"/><rect x="825.2" y="618.6" width="3" height="2.4" fill="#ff30ff"/><path d="M686.0 655.7l6 6M692.0 655.7l-6 6" stroke="#ff30ff" stroke-width="1.1"/><path d="M683.4 655.8h8M687.4 650.8v10" stroke="#ff1414" stroke-width="1.2"/><path d="M679.6 650.9l6 6M685.6 650.9l-6 6" stroke="#e0e0e0" stroke-width="1.1"/><path d="M691.7 652.9l6 6M697.7 652.9l-6 6" stroke="#ff1414" stroke-width="1.1"/><rect x="819.0" y="625.2" width="3" height="2.4" fill="#fff"/><path d="M781.8 634.6l6 6M787.8 634.6l-6 6" stroke="#20e030" stroke-width="1.1"/><path d="M701.4 654.4l6 6M707.4 654.4l-6 6" stroke="#ff30ff" stroke-width="1.1"/></g><path d="M665 332 h16 M673 324 v16" stroke="#fff" stroke-width="1.4"/><circle cx="673" cy="332" r="3.6" fill="none" stroke="#fff" stroke-width="1.2"/><rect x="669" y="331" width="8" height="4" fill="none" stroke="#fff" stroke-width="1"/><circle cx="716.7" cy="573.5" r="6.4" fill="#fff"/><circle cx="727" cy="582.7" r="4.8" fill="#d8c820" stroke="#111" stroke-width="1.2"/><circle cx="671.8" cy="56" r="1.8" fill="#fff" stroke="#000" stroke-width="1.4"/><circle cx="699.5" cy="95" r="2.2" fill="#e030e0"/><rect x="740.5" y="96" width="5" height="5" fill="#a0e020" stroke="#20a020" stroke-width="1"/><rect x="800" y="84" width="72" height="15" fill="#000"/><text x="801" y="96" font-family="Liberation Sans" font-size="12" fill="#909090" textLength="69">NGC3031=M81</text><rect x="660" y="418" width="9" height="18" fill="#000" stroke="#ccc" stroke-width="0.6"/><text x="662" y="432" font-family="Liberation Sans" font-size="11" fill="#fff">2</text></svg>
<div class="a" style="left:16px;top:158px;width:25px;height:25px;background:#fff;"></div>
<svg class="a" style="left:16px;top:158px" width="25" height="25" viewBox="0 0 25 25"><path d="M13 2.5 Q28.5 11.5 13 20.5 Q17.5 11.5 13 2.5Z" fill="#484848"/></svg>
<div class="a" style="left:17px;top:186px;width:60px;height:87px;background:#fff;"></div>
<div class="t" style="left:21.4px;top:188.5px;font-size:11px;line-height:15px;color:#000;letter-spacing:0.423px;font-family:'Liberation Mono',monospace;">C/2016R2</div>
<div class="a" style="left:11px;top:817px;width:1348px;height:27px;background:#fff;"></div>
<div class="a" style="left:11px;top:844px;width:1348px;height:1px;background:#7c8a9c;"></div>
<div class="a" style="left:12px;top:821px;width:71px;height:21px;border:1px solid #c8c8c8;border-right-color:#e8e8e8;border-bottom-color:#eee;background:#fff"></div>
<div class="t" style="left:17.5px;top:822.0px;font-size:12px;line-height:16px;color:#000;letter-spacing:-0.976px;">Zoom=1</div>
<div class="a" style="left:84px;top:821px;width:1px;height:21px;background:#d0d0d0;"></div>
<div class="t" style="left:688.4px;top:821.7px;font-size:12px;line-height:16px;color:#b01818;letter-spacing:-0.608px;">ode carte Equat</div>
<div class="t" style="left:765.5px;top:821.7px;font-size:12px;line-height:16px;color:#b01818;letter-spacing:-0.238px;">orial, ideal, Detaille      PC tempéré, l</div>
<div class="t" style="left:1007.0px;top:821.5px;font-size:12px;line-height:16px;color:#a01010;letter-spacing:-0.686px;">EQ. 2018-3-7 (1.62s)</div>
<div class="a" style="left:1001.5px;top:821px;width:1px;height:21px;background:#c0c0c0;"></div>
<div class="a" style="left:84px;top:821px;width:916px;height:1px;background:#c8c8c8;"></div>
<div class="a" style="left:1002px;top:821px;width:355px;height:1px;background:#c8c8c8;"></div>
<!-- part_charts -->
<div class="a" style="left:76px;top:183px;width:599px;height:416px;border:1px solid #6d7c90;border-radius:7px 7px 1px 1px;background:linear-gradient(#e4edf8,#d8e4f2 18px,#dbe6f4 40px,#dfe9f6);box-shadow:inset 0 0 0 1px rgba(255,255,255,.7)"></div>
<svg class="a" style="left:85px;top:193px" width="16" height="16" viewBox="0 0 16 16"><rect x="6.7" y="0" width="2.6" height="16" fill="#444" transform="rotate(0 8 8)"/><rect x="6.7" y="0" width="2.6" height="16" fill="#444" transform="rotate(45 8 8)"/><rect x="6.7" y="0" width="2.6" height="16" fill="#444" transform="rotate(90 8 8)"/><rect x="6.7" y="0" width="2.6" height="16" fill="#444" transform="rotate(135 8 8)"/><circle cx="8" cy="8" r="5.6" fill="#555"/><circle cx="8" cy="8" r="3.6" fill="#b8b8b8"/><circle cx="8" cy="8" r="1.6" fill="#777"/></svg>
<div class="t" style="left:106.0px;top:193.5px;font-size:12px;line-height:16px;color:#9aa2ae;letter-spacing:-0.291px;text-shadow:0 0 3px #fff">Temperature CCD, toutes les 5s</div>
<div class="a" style="left:565px;top:192px;width:31.5px;height:17.5px;border:1px solid #8f9db3;border-radius:3px;background:linear-gradient(#e6edf7,#d3deed 45%,#c3d1e5 50%,#cddaec);box-shadow:inset 0 0 0 1px rgba(255,255,255,.55)"></div><div class="a" style="left:599.5px;top:192px;width:31.5px;height:17.5px;border:1px solid #8f9db3;border-radius:3px;background:linear-gradient(#e6edf7,#d3deed 45%,#c3d1e5 50%,#cddaec);box-shadow:inset 0 0 0 1px rgba(255,255,255,.55)"></div><div class="a" style="left:634.0px;top:192px;width:31.5px;height:17.5px;border:1px solid #8f9db3;border-radius:3px;background:linear-gradient(#e6edf7,#d3deed 45%,#c3d1e5 50%,#cddaec);box-shadow:inset 0 0 0 1px rgba(255,255,255,.55)"></div><div class="a" style="left:575px;top:201px;width:11px;height:4px;border:1px solid #5a6678;background:#f4f7fb;border-radius:1px"></div><div class="a" style="left:609.5px;top:196px;width:11px;height:9px;border:1px solid #5a6678;background:#f4f7fb;border-radius:1px"></div><div class="a" style="left:612.5px;top:199px;width:5px;height:3px;border:1px solid #5a6678;background:#d0dbea"></div><svg class="a" style="left:643.8px;top:195.6px" width="11.5" height="10" viewBox="0 0 11.5 10"><path d="M2 2 L9.5 8 M9.5 2 L2 8" stroke="#4a5668" stroke-width="3.8" stroke-linecap="round"/><path d="M2 2 L9.5 8 M9.5 2 L2 8" stroke="#f8fafc" stroke-width="1.9" stroke-linecap="round"/></svg>
<div class="a" style="left:84px;top:213px;width:583px;height:378.5px;background:#fff;"></div>
<svg class="a" style="left:86px;top:217px" width="577" height="326" viewBox="86 217 577 326" font-family="Liberation Sans" font-size="12"><rect x="86.5" y="217.5" width="576" height="325" fill="#fff" stroke="#000" stroke-width="1"/><rect x="135.5" y="265.3" width="479" height="230" fill="none" stroke="#000" stroke-width="1.2"/><line x1="135.5" x2="614.5" y1="341" y2="341" stroke="#a8a8a8" stroke-width="1"/><line x1="372.8" x2="372.8" y1="265.3" y2="495.3" stroke="#a8a8a8" stroke-width="1"/><line x1="609.5" x2="609.5" y1="265.3" y2="495.3" stroke="#a8a8a8" stroke-width="1"/><line x1="135.5" x2="614.5" y1="442.7" y2="442.7" stroke="#c0a0a0" stroke-width="1"/><line x1="135.5" x2="614.5" y1="442.7" y2="442.7" stroke="#d82020" stroke-width="1.4" stroke-dasharray="8.4 6 3 6.4"/><path d="M135.5 495.3 v10 M159.2 495.3 v4.5 M183.0 495.3 v4.5 M206.7 495.3 v4.5 M230.4 495.3 v4.5 M254.2 495.3 v4.5 M277.9 495.3 v4.5 M301.6 495.3 v4.5 M325.3 495.3 v4.5 M349.1 495.3 v4.5 M372.8 495.3 v10 M396.5 495.3 v4.5 M420.3 495.3 v4.5 M444.0 495.3 v4.5 M467.7 495.3 v4.5 M491.4 495.3 v4.5 M515.2 495.3 v4.5 M538.9 495.3 v4.5 M562.6 495.3 v4.5 M586.4 495.3 v4.5 M610.1 495.3 v10 M135.5 270.0 h-4.5 M135.5 280.2 h-4.5 M135.5 290.3 h-4.5 M135.5 300.5 h-4.5 M135.5 310.7 h-4.5 M135.5 320.9 h-4.5 M135.5 331.0 h-4.5 M135.5 341.2 h-4.5 M135.5 351.4 h-4.5 M135.5 361.5 h-4.5 M135.5 371.7 h-4.5 M135.5 381.9 h-4.5 M135.5 392.0 h-4.5 M135.5 402.2 h-4.5 M135.5 412.4 h-4.5 M135.5 422.6 h-4.5 M135.5 432.7 h-4.5 M135.5 442.9 h-4.5 M135.5 453.1 h-4.5 M135.5 463.2 h-4.5 M135.5 473.4 h-4.5 M135.5 483.6 h-4.5 M135.5 493.7 h-4.5 M135.5 341.0 h-9.5 M135.5 442.7 h-9.5" stroke="#000" stroke-width="1.1" fill="none"/><text x="135" y="250.8" textLength="152.5">Temperature CCD, toutes les 5s</text><text x="119.5" y="345.3" text-anchor="end">10</text><text x="119.5" y="447.0" text-anchor="end">0</text><text x="135.0" y="519.3" text-anchor="middle">0</text><text x="372.3" y="519.3" text-anchor="middle">10</text><text x="609.0" y="519.3" text-anchor="middle">20</text><text x="374.5" y="536" text-anchor="middle" textLength="60">Temps (Min)</text><text x="632.5" y="335.5" text-anchor="middle">V</text><text x="632.5" y="345.5" text-anchor="middle">a</text><text x="632.5" y="356" text-anchor="middle">l</text><text x="632.5" y="366" text-anchor="middle">e</text><text x="632.5" y="376" text-anchor="middle">u</text><text x="632.5" y="386.5" text-anchor="middle">r</text><text x="632.5" y="413" text-anchor="middle">°</text><text x="632.5" y="426" text-anchor="middle">C</text><polyline points="135.5,265.3 137.5,268.1 139.5,270.9 141.4,280.3 143.4,289.9 145.4,299.5 147.4,311.1 149.3,322.9 151.3,334.7 153.3,346.5 155.3,358.3 157.3,370.1 159.2,381.8 161.2,393.6 163.2,405.4 165.2,417.2 167.1,429.0 169.1,440.8 171.1,461.4 173.1,466.8 175.1,473.9 177.0,479.4 179.0,487.8 181.0,491.9 183.0,494.3 185.0,493.5 186.9,491.6 188.9,489.6 190.9,487.1 192.9,484.5 194.8,481.8 196.8,479.2 198.8,476.6 200.8,473.9 202.8,473.6 204.7,473.6 206.7,473.6 208.7,473.6 210.7,473.6 212.6,473.6 214.6,473.6 216.6,473.6 218.6,473.6 220.6,473.6 222.5,473.6 224.5,473.6 226.5,473.6 228.5,473.6 230.4,473.6 232.4,473.6 234.4,473.6 236.4,473.6 238.4,473.6 240.3,473.6 242.3,473.6 244.3,473.6 246.3,473.6 248.2,473.6 250.2,473.6 252.2,473.6 254.2,473.6 256.2,473.6 258.1,473.6 260.1,473.6 262.1,473.6 264.1,473.6 266.0,473.6 268.0,473.6 270.0,473.6 272.0,473.6 274.0,473.6 275.9,473.6 277.9,473.6 279.9,473.6 281.9,473.6 283.8,473.6 285.8,473.6 287.8,473.6 289.8,473.6 291.8,473.6 293.7,473.6 295.7,473.6 297.7,473.6 299.7,473.6 301.7,473.6 303.6,473.6 305.6,473.6 307.6,473.6 309.6,473.6 311.5,473.6 313.5,473.6 315.5,473.6 317.5,473.6 319.5,473.6 321.4,473.6 323.4,473.6 325.4,473.6 327.4,473.6 329.3,473.6 331.3,473.6 333.3,473.6 335.3,473.6 337.3,473.6 339.2,473.6 341.2,473.6 343.2,473.6 345.2,473.6 347.1,473.6 349.1,473.6 351.1,473.6 353.1,473.6 355.1,473.6 357.0,473.6 359.0,473.6 361.0,473.6 363.0,473.6 364.9,473.6 366.9,473.6 368.9,473.6 370.9,473.6 372.9,473.6 374.8,473.6 376.8,473.6 378.8,473.6 380.8,473.6 382.8,473.6 384.7,473.6 386.7,473.6 388.7,473.6 390.7,473.6 392.6,473.6 394.6,473.6 396.6,473.6 398.6,473.6 400.6,473.6 402.5,473.6 404.5,473.6 406.5,473.6 408.5,473.6 410.4,473.6 412.4,473.6 414.4,473.6 416.4,473.6 418.4,473.6 420.3,473.6 422.3,473.6 424.3,473.6 426.3,473.6 428.2,473.6 430.2,473.6 432.2,473.6 434.2,473.6 436.2,473.6 438.1,473.6 440.1,473.6 442.1,473.6 444.1,473.6 446.0,473.6 448.0,473.6 450.0,473.6 452.0,473.6 454.0,473.6 455.9,473.6 457.9,473.6 459.9,473.6 461.9,473.6 463.8,473.6 465.8,473.6 467.8,473.6 469.8,473.6 471.8,473.6 473.7,473.6 475.7,473.6 477.7,473.6 479.7,473.6 481.7,473.6 483.6,473.6 485.6,473.6 487.6,473.6 489.6,473.6 491.5,473.6 493.5,473.6 495.5,473.6 497.5,473.6 499.5,473.6 501.4,473.6 503.4,473.6 505.4,473.6 507.4,473.6 509.3,473.6 511.3,473.6 513.3,473.6 515.3,473.6 517.3,473.6 519.2,473.6 521.2,473.6 523.2,473.6 525.2,473.6 527.1,473.6 529.1,473.6 531.1,473.6 533.1,473.6 535.1,473.6 537.0,473.6 539.0,473.6 541.0,473.6 543.0,473.6 544.9,473.6 546.9,473.6 548.9,473.6 550.9,473.6 552.9,473.6 554.8,473.6 556.8,473.6 558.8,473.6 560.8,473.6 562.7,473.6 564.7,473.6 566.7,473.6 568.7,473.6 570.7,473.6 572.6,473.6 574.6,473.6 576.6,473.6 578.6,473.6 580.6,473.6 582.5,473.6 584.5,473.6 586.5,473.6 588.5,473.6 590.4,473.6 592.4,473.6 594.4,473.6 596.4,473.6 598.4,473.6 600.3,473.6 602.3,473.6 604.3,473.6 606.3,473.6 608.2,473.6 610.2,473.6 612.2,473.6 614.2,473.6" fill="none" stroke="#000" stroke-width="1"/><g fill="none" stroke="#000" stroke-width="0.75"><circle cx="135.5" cy="265.3" r="3.1"/><circle cx="137.5" cy="268.1" r="3.1"/><circle cx="139.5" cy="270.9" r="3.1"/><circle cx="141.4" cy="280.3" r="3.1"/><circle cx="143.4" cy="289.9" r="3.1"/><circle cx="145.4" cy="299.5" r="3.1"/><circle cx="147.4" cy="311.1" r="3.1"/><circle cx="149.3" cy="322.9" r="3.1"/><circle cx="151.3" cy="334.7" r="3.1"/><circle cx="153.3" cy="346.5" r="3.1"/><circle cx="155.3" cy="358.3" r="3.1"/><circle cx="157.3" cy="370.1" r="3.1"/><circle cx="159.2" cy="381.8" r="3.1"/><circle cx="161.2" cy="393.6" r="3.1"/><circle cx="163.2" cy="405.4" r="3.1"/><circle cx="165.2" cy="417.2" r="3.1"/><circle cx="167.1" cy="429.0" r="3.1"/><circle cx="169.1" cy="440.8" r="3.1"/><circle cx="171.1" cy="461.4" r="3.1"/><circle cx="173.1" cy="466.8" r="3.1"/><circle cx="175.1" cy="473.9" r="3.1"/><circle cx="177.0" cy="479.4" r="3.1"/><circle cx="179.0" cy="487.8" r="3.1"/><circle cx="181.0" cy="491.9" r="3.1"/><circle cx="183.0" cy="494.3" r="3.1"/><circle cx="185.0" cy="493.5" r="3.1"/><circle cx="186.9" cy="491.6" r="3.1"/><circle cx="188.9" cy="489.6" r="3.1"/><circle cx="190.9" cy="487.1" r="3.1"/><circle cx="192.9" cy="484.5" r="3.1"/><circle cx="194.8" cy="481.8" r="3.1"/><circle cx="196.8" cy="479.2" r="3.1"/><circle cx="198.8" cy="476.6" r="3.1"/><circle cx="200.8" cy="473.9" r="3.1"/><circle cx="202.8" cy="473.6" r="3.1"/><circle cx="204.7" cy="473.6" r="3.1"/><circle cx="206.7" cy="473.6" r="3.1"/><circle cx="208.7" cy="473.6" r="3.1"/><circle cx="210.7" cy="473.6" r="3.1"/><circle cx="212.6" cy="473.6" r="3.1"/><circle cx="214.6" cy="473.6" r="3.1"/><circle cx="216.6" cy="473.6" r="3.1"/><circle cx="218.6" cy="473.6" r="3.1"/><circle cx="220.6" cy="473.6" r="3.1"/><circle cx="222.5" cy="473.6" r="3.1"/><circle cx="224.5" cy="473.6" r="3.1"/><circle cx="226.5" cy="473.6" r="3.1"/><circle cx="228.5" cy="473.6" r="3.1"/><circle cx="230.4" cy="473.6" r="3.1"/><circle cx="232.4" cy="473.6" r="3.1"/><circle cx="234.4" cy="473.6" r="3.1"/><circle cx="236.4" cy="473.6" r="3.1"/><circle cx="238.4" cy="473.6" r="3.1"/><circle cx="240.3" cy="473.6" r="3.1"/><circle cx="242.3" cy="473.6" r="3.1"/><circle cx="244.3" cy="473.6" r="3.1"/><circle cx="246.3" cy="473.6" r="3.1"/><circle cx="248.2" cy="473.6" r="3.1"/><circle cx="250.2" cy="473.6" r="3.1"/><circle cx="252.2" cy="473.6" r="3.1"/><circle cx="254.2" cy="473.6" r="3.1"/><circle cx="256.2" cy="473.6" r="3.1"/><circle cx="258.1" cy="473.6" r="3.1"/><circle cx="260.1" cy="473.6" r="3.1"/><circle cx="262.1" cy="473.6" r="3.1"/><circle cx="264.1" cy="473.6" r="3.1"/><circle cx="266.0" cy="473.6" r="3.1"/><circle cx="268.0" cy="473.6" r="3.1"/><circle cx="270.0" cy="473.6" r="3.1"/><circle cx="272.0" cy="473.6" r="3.1"/><circle cx="274.0" cy="473.6" r="3.1"/><circle cx="275.9" cy="473.6" r="3.1"/><circle cx="277.9" cy="473.6" r="3.1"/><circle cx="279.9" cy="473.6" r="3.1"/><circle cx="281.9" cy="473.6" r="3.1"/><circle cx="283.8" cy="473.6" r="3.1"/><circle cx="285.8" cy="473.6" r="3.1"/><circle cx="287.8" cy="473.6" r="3.1"/><circle cx="289.8" cy="473.6" r="3.1"/><circle cx="291.8" cy="473.6" r="3.1"/><circle cx="293.7" cy="473.6" r="3.1"/><circle cx="295.7" cy="473.6" r="3.1"/><circle cx="297.7" cy="473.6" r="3.1"/><circle cx="299.7" cy="473.6" r="3.1"/><circle cx="301.7" cy="473.6" r="3.1"/><circle cx="303.6" cy="473.6" r="3.1"/><circle cx="305.6" cy="473.6" r="3.1"/><circle cx="307.6" cy="473.6" r="3.1"/><circle cx="309.6" cy="473.6" r="3.1"/><circle cx="311.5" cy="473.6" r="3.1"/><circle cx="313.5" cy="473.6" r="3.1"/><circle cx="315.5" cy="473.6" r="3.1"/><circle cx="317.5" cy="473.6" r="3.1"/><circle cx="319.5" cy="473.6" r="3.1"/><circle cx="321.4" cy="473.6" r="3.1"/><circle cx="323.4" cy="473.6" r="3.1"/><circle cx="325.4" cy="473.6" r="3.1"/><circle cx="327.4" cy="473.6" r="3.1"/><circle cx="329.3" cy="473.6" r="3.1"/><circle cx="331.3" cy="473.6" r="3.1"/><circle cx="333.3" cy="473.6" r="3.1"/><circle cx="335.3" cy="473.6" r="3.1"/><circle cx="337.3" cy="473.6" r="3.1"/><circle cx="339.2" cy="473.6" r="3.1"/><circle cx="341.2" cy="473.6" r="3.1"/><circle cx="343.2" cy="473.6" r="3.1"/><circle cx="345.2" cy="473.6" r="3.1"/><circle cx="347.1" cy="473.6" r="3.1"/><circle cx="349.1" cy="473.6" r="3.1"/><circle cx="351.1" cy="473.6" r="3.1"/><circle cx="353.1" cy="473.6" r="3.1"/><circle cx="355.1" cy="473.6" r="3.1"/><circle cx="357.0" cy="473.6" r="3.1"/><circle cx="359.0" cy="473.6" r="3.1"/><circle cx="361.0" cy="473.6" r="3.1"/><circle cx="363.0" cy="473.6" r="3.1"/><circle cx="364.9" cy="473.6" r="3.1"/><circle cx="366.9" cy="473.6" r="3.1"/><circle cx="368.9" cy="473.6" r="3.1"/><circle cx="370.9" cy="473.6" r="3.1"/><circle cx="372.9" cy="473.6" r="3.1"/><circle cx="374.8" cy="473.6" r="3.1"/><circle cx="376.8" cy="473.6" r="3.1"/><circle cx="378.8" cy="473.6" r="3.1"/><circle cx="380.8" cy="473.6" r="3.1"/><circle cx="382.8" cy="473.6" r="3.1"/><circle cx="384.7" cy="473.6" r="3.1"/><circle cx="386.7" cy="473.6" r="3.1"/><circle cx="388.7" cy="473.6" r="3.1"/><circle cx="390.7" cy="473.6" r="3.1"/><circle cx="392.6" cy="473.6" r="3.1"/><circle cx="394.6" cy="473.6" r="3.1"/><circle cx="396.6" cy="473.6" r="3.1"/><circle cx="398.6" cy="473.6" r="3.1"/><circle cx="400.6" cy="473.6" r="3.1"/><circle cx="402.5" cy="473.6" r="3.1"/><circle cx="404.5" cy="473.6" r="3.1"/><circle cx="406.5" cy="473.6" r="3.1"/><circle cx="408.5" cy="473.6" r="3.1"/><circle cx="410.4" cy="473.6" r="3.1"/><circle cx="412.4" cy="473.6" r="3.1"/><circle cx="414.4" cy="473.6" r="3.1"/><circle cx="416.4" cy="473.6" r="3.1"/><circle cx="418.4" cy="473.6" r="3.1"/><circle cx="420.3" cy="473.6" r="3.1"/><circle cx="422.3" cy="473.6" r="3.1"/><circle cx="424.3" cy="473.6" r="3.1"/><circle cx="426.3" cy="473.6" r="3.1"/><circle cx="428.2" cy="473.6" r="3.1"/><circle cx="430.2" cy="473.6" r="3.1"/><circle cx="432.2" cy="473.6" r="3.1"/><circle cx="434.2" cy="473.6" r="3.1"/><circle cx="436.2" cy="473.6" r="3.1"/><circle cx="438.1" cy="473.6" r="3.1"/><circle cx="440.1" cy="473.6" r="3.1"/><circle cx="442.1" cy="473.6" r="3.1"/><circle cx="444.1" cy="473.6" r="3.1"/><circle cx="446.0" cy="473.6" r="3.1"/><circle cx="448.0" cy="473.6" r="3.1"/><circle cx="450.0" cy="473.6" r="3.1"/><circle cx="452.0" cy="473.6" r="3.1"/><circle cx="454.0" cy="473.6" r="3.1"/><circle cx="455.9" cy="473.6" r="3.1"/><circle cx="457.9" cy="473.6" r="3.1"/><circle cx="459.9" cy="473.6" r="3.1"/><circle cx="461.9" cy="473.6" r="3.1"/><circle cx="463.8" cy="473.6" r="3.1"/><circle cx="465.8" cy="473.6" r="3.1"/><circle cx="467.8" cy="473.6" r="3.1"/><circle cx="469.8" cy="473.6" r="3.1"/><circle cx="471.8" cy="473.6" r="3.1"/><circle cx="473.7" cy="473.6" r="3.1"/><circle cx="475.7" cy="473.6" r="3.1"/><circle cx="477.7" cy="473.6" r="3.1"/><circle cx="479.7" cy="473.6" r="3.1"/><circle cx="481.7" cy="473.6" r="3.1"/><circle cx="483.6" cy="473.6" r="3.1"/><circle cx="485.6" cy="473.6" r="3.1"/><circle cx="487.6" cy="473.6" r="3.1"/><circle cx="489.6" cy="473.6" r="3.1"/><circle cx="491.5" cy="473.6" r="3.1"/><circle cx="493.5" cy="473.6" r="3.1"/><circle cx="495.5" cy="473.6" r="3.1"/><circle cx="497.5" cy="473.6" r="3.1"/><circle cx="499.5" cy="473.6" r="3.1"/><circle cx="501.4" cy="473.6" r="3.1"/><circle cx="503.4" cy="473.6" r="3.1"/><circle cx="505.4" cy="473.6" r="3.1"/><circle cx="507.4" cy="473.6" r="3.1"/><circle cx="509.3" cy="473.6" r="3.1"/><circle cx="511.3" cy="473.6" r="3.1"/><circle cx="513.3" cy="473.6" r="3.1"/><circle cx="515.3" cy="473.6" r="3.1"/><circle cx="517.3" cy="473.6" r="3.1"/><circle cx="519.2" cy="473.6" r="3.1"/><circle cx="521.2" cy="473.6" r="3.1"/><circle cx="523.2" cy="473.6" r="3.1"/><circle cx="525.2" cy="473.6" r="3.1"/><circle cx="527.1" cy="473.6" r="3.1"/><circle cx="529.1" cy="473.6" r="3.1"/><circle cx="531.1" cy="473.6" r="3.1"/><circle cx="533.1" cy="473.6" r="3.1"/><circle cx="535.1" cy="473.6" r="3.1"/><circle cx="537.0" cy="473.6" r="3.1"/><circle cx="539.0" cy="473.6" r="3.1"/><circle cx="541.0" cy="473.6" r="3.1"/><circle cx="543.0" cy="473.6" r="3.1"/><circle cx="544.9" cy="473.6" r="3.1"/><circle cx="546.9" cy="473.6" r="3.1"/><circle cx="548.9" cy="473.6" r="3.1"/><circle cx="550.9" cy="473.6" r="3.1"/><circle cx="552.9" cy="473.6" r="3.1"/><circle cx="554.8" cy="473.6" r="3.1"/><circle cx="556.8" cy="473.6" r="3.1"/><circle cx="558.8" cy="473.6" r="3.1"/><circle cx="560.8" cy="473.6" r="3.1"/><circle cx="562.7" cy="473.6" r="3.1"/><circle cx="564.7" cy="473.6" r="3.1"/><circle cx="566.7" cy="473.6" r="3.1"/><circle cx="568.7" cy="473.6" r="3.1"/><circle cx="570.7" cy="473.6" r="3.1"/><circle cx="572.6" cy="473.6" r="3.1"/><circle cx="574.6" cy="473.6" r="3.1"/><circle cx="576.6" cy="473.6" r="3.1"/><circle cx="578.6" cy="473.6" r="3.1"/><circle cx="580.6" cy="473.6" r="3.1"/><circle cx="582.5" cy="473.6" r="3.1"/><circle cx="584.5" cy="473.6" r="3.1"/><circle cx="586.5" cy="473.6" r="3.1"/><circle cx="588.5" cy="473.6" r="3.1"/><circle cx="590.4" cy="473.6" r="3.1"/><circle cx="592.4" cy="473.6" r="3.1"/><circle cx="594.4" cy="473.6" r="3.1"/><circle cx="596.4" cy="473.6" r="3.1"/><circle cx="598.4" cy="473.6" r="3.1"/><circle cx="600.3" cy="473.6" r="3.1"/><circle cx="602.3" cy="473.6" r="3.1"/><circle cx="604.3" cy="473.6" r="3.1"/><circle cx="606.3" cy="473.6" r="3.1"/><circle cx="608.2" cy="473.6" r="3.1"/><circle cx="610.2" cy="473.6" r="3.1"/><circle cx="612.2" cy="473.6" r="3.1"/><circle cx="614.2" cy="473.6" r="3.1"/></g><ellipse cx="183.7" cy="495" rx="3.6" ry="3" fill="#000"/><ellipse cx="278.5" cy="473.6" rx="3.6" ry="3" fill="#000"/><ellipse cx="375.5" cy="473.6" rx="3.6" ry="3" fill="#000"/><ellipse cx="470.5" cy="473.6" rx="3.6" ry="3" fill="#000"/><ellipse cx="565.5" cy="473.6" rx="3.6" ry="3" fill="#000"/><line x1="614.5" x2="623.5" y1="473.6" y2="473.6" stroke="#a03030" stroke-width="1"/></svg>
<div class="a" style="left:84px;top:550px;width:73px;height:21px;background:#e4eef8;border:2px solid #1a7ac8"></div>
<div class="t" style="left:98.0px;top:552.5px;font-size:12px;line-height:16px;color:#000;letter-spacing:-0.712px;">Réglages</div>
<div class="a" style="left:84px;top:572px;width:583px;height:1px;background:#e0e0e0;"></div>
<div class="t" style="left:85.0px;top:574.5px;font-size:12px;line-height:16px;color:#000;letter-spacing:-0.649px;">579x330</div>
<div class="a" style="left:232px;top:575px;width:1px;height:16px;background:#d0d0d0;"></div>
<svg class="a" style="left:654px;top:580px" width="12" height="12" viewBox="0 0 12 12"><path d="M9 1h2v2h-2z M5 5h2v2h-2z M9 5h2v2h-2z M1 9h2v2h-2z M5 9h2v2h-2z M9 9h2v2h-2z" fill="#a8a8a8"/></svg>
<div class="a" style="left:88px;top:632px;width:599px;height:378px;border-bottom:none;border:1px solid #6d7c90;border-radius:7px 7px 1px 1px;background:linear-gradient(#e4edf8,#d8e4f2 18px,#dbe6f4 40px,#dfe9f6);box-shadow:inset 0 0 0 1px rgba(255,255,255,.7)"></div>
<svg class="a" style="left:96.5px;top:642px" width="16" height="16" viewBox="0 0 16 16"><rect x="6.7" y="0" width="2.6" height="16" fill="#444" transform="rotate(0 8 8)"/><rect x="6.7" y="0" width="2.6" height="16" fill="#444" transform="rotate(45 8 8)"/><rect x="6.7" y="0" width="2.6" height="16" fill="#444" transform="rotate(90 8 8)"/><rect x="6.7" y="0" width="2.6" height="16" fill="#444" transform="rotate(135 8 8)"/><circle cx="8" cy="8" r="5.6" fill="#555"/><circle cx="8" cy="8" r="3.6" fill="#b8b8b8"/><circle cx="8" cy="8" r="1.6" fill="#777"/></svg>
<div class="t" style="left:116.5px;top:642.0px;font-size:12px;line-height:16px;color:#9aa2ae;letter-spacing:-0.257px;text-shadow:0 0 3px #fff">Puissance, toute les 5s</div>
<div class="a" style="left:577px;top:641px;width:31.5px;height:17.5px;border:1px solid #8f9db3;border-radius:3px;background:linear-gradient(#e6edf7,#d3deed 45%,#c3d1e5 50%,#cddaec);box-shadow:inset 0 0 0 1px rgba(255,255,255,.55)"></div><div class="a" style="left:611.5px;top:641px;width:31.5px;height:17.5px;border:1px solid #8f9db3;border-radius:3px;background:linear-gradient(#e6edf7,#d3deed 45%,#c3d1e5 50%,#cddaec);box-shadow:inset 0 0 0 1px rgba(255,255,255,.55)"></div><div class="a" style="left:646.0px;top:641px;width:31.5px;height:17.5px;border:1px solid #8f9db3;border-radius:3px;background:linear-gradient(#e6edf7,#d3deed 45%,#c3d1e5 50%,#cddaec);box-shadow:inset 0 0 0 1px rgba(255,255,255,.55)"></div><div class="a" style="left:587px;top:650px;width:11px;height:4px;border:1px solid #5a6678;background:#f4f7fb;border-radius:1px"></div><div class="a" style="left:621.5px;top:645px;width:11px;height:9px;border:1px solid #5a6678;background:#f4f7fb;border-radius:1px"></div><div class="a" style="left:624.5px;top:648px;width:5px;height:3px;border:1px solid #5a6678;background:#d0dbea"></div><svg class="a" style="left:655.8px;top:644.6px" width="11.5" height="10" viewBox="0 0 11.5 10"><path d="M2 2 L9.5 8 M9.5 2 L2 8" stroke="#4a5668" stroke-width="3.8" stroke-linecap="round"/><path d="M2 2 L9.5 8 M9.5 2 L2 8" stroke="#f8fafc" stroke-width="1.9" stroke-linecap="round"/></svg>
<div class="a" style="left:96px;top:662px;width:583px;height:348px;background:#fff;"></div>
<svg class="a" style="left:98px;top:665px" width="578" height="328" viewBox="98 665 578 328" font-family="Liberation Sans" font-size="12"><rect x="98.5" y="665.5" width="577" height="327" fill="#fff" stroke="#000" stroke-width="1"/><rect x="147.3" y="714.7" width="479.5" height="229.7" fill="none" stroke="#000" stroke-width="1.2"/><line x1="147.3" x2="626.8" y1="747" y2="747" stroke="#a8a8a8" stroke-width="1"/><line x1="384.6" x2="384.6" y1="714.7" y2="944.4000000000001" stroke="#a8a8a8" stroke-width="1"/><line x1="621.3" x2="621.3" y1="714.7" y2="944.4000000000001" stroke="#a8a8a8" stroke-width="1"/><line x1="147.3" x2="626.8" y1="911.5" y2="911.5" stroke="#c0a0a0" stroke-width="1"/><line x1="147.3" x2="626.8" y1="911.5" y2="911.5" stroke="#c42828" stroke-width="1.1" stroke-dasharray="8.4 6 3 6.4"/><path d="M147.3 944.4000000000001 v10 M171.0 944.4000000000001 v4.5 M194.8 944.4000000000001 v4.5 M218.5 944.4000000000001 v4.5 M242.2 944.4000000000001 v4.5 M266.0 944.4000000000001 v4.5 M289.7 944.4000000000001 v4.5 M313.4 944.4000000000001 v4.5 M337.1 944.4000000000001 v4.5 M360.9 944.4000000000001 v4.5 M384.6 944.4000000000001 v10 M408.3 944.4000000000001 v4.5 M432.1 944.4000000000001 v4.5 M455.8 944.4000000000001 v4.5 M479.5 944.4000000000001 v4.5 M503.2 944.4000000000001 v4.5 M527.0 944.4000000000001 v4.5 M550.7 944.4000000000001 v4.5 M574.4 944.4000000000001 v4.5 M598.2 944.4000000000001 v4.5 M621.9 944.4000000000001 v10 M147.3 714.7 h-4.5 M147.3 731.2 h-4.5 M147.3 747.6 h-4.5 M147.3 764.1 h-4.5 M147.3 780.5 h-4.5 M147.3 797.0 h-4.5 M147.3 813.4 h-4.5 M147.3 829.9 h-4.5 M147.3 846.3 h-4.5 M147.3 862.8 h-4.5 M147.3 879.2 h-4.5 M147.3 895.7 h-4.5 M147.3 912.1 h-4.5 M147.3 928.6 h-4.5 M147.3 747.0 h-9.5 M147.3 911.5 h-9.5" stroke="#000" stroke-width="1.1" fill="none"/><text x="146" y="700.2" textLength="112">Puissance, toute les 5s</text><text x="132.5" y="751.3" text-anchor="end">100</text><text x="132.5" y="915.8" text-anchor="end">0</text><text x="146.8" y="968.8" text-anchor="middle">0</text><text x="384.1" y="968.8" text-anchor="middle">10</text><text x="620.8" y="968.8" text-anchor="middle">20</text><text x="386.3" y="985" text-anchor="middle" textLength="60">Temps (Min)</text><text x="644" y="788.4" text-anchor="middle">V</text><text x="644" y="800.4" text-anchor="middle">a</text><text x="644" y="810.7" text-anchor="middle">l</text><text x="644" y="820.4" text-anchor="middle">e</text><text x="644" y="829.8" text-anchor="middle">u</text><text x="644" y="839.5" text-anchor="middle">r</text><text x="644" y="869.8" text-anchor="middle">%</text><polyline points="148.5,869.0 148.9,747.0 150.9,747.0 152.9,747.0 154.9,747.0 156.8,747.0 158.8,747.0 160.8,747.0 162.8,747.0 164.7,747.0 166.7,747.0 168.7,747.0 170.7,747.0 172.7,747.0 174.6,747.0 176.6,747.0 178.6,747.0 180.6,747.0 183.4,753.4 185.4,778.2 187.3,806.4 189.4,824.4 191.4,875.2 193.0,866.0 194.5,868.5 196.2,857.6 198.1,890.1 199.8,872.0 202.2,861.7 204.6,891.3 206.5,869.7 208.7,864.9 211.3,877.4 213.0,877.6 214.2,864.9 216.6,868.5 218.6,867.0 220.6,866.0 222.6,866.1 224.5,866.1 226.5,863.6 228.5,868.1 230.5,867.2 232.4,868.2 234.4,866.2 236.4,872.2 238.4,872.3 240.4,866.3 242.3,863.3 244.3,867.3 246.3,867.4 248.3,867.4 250.2,867.4 252.2,867.5 254.2,866.5 256.2,867.5 258.2,868.5 260.1,870.1 262.1,868.6 264.1,867.6 266.1,869.6 268.1,867.7 270.0,867.7 272.0,865.2 274.0,866.7 276.0,868.8 277.9,867.8 279.9,868.8 281.9,866.9 283.9,865.4 285.9,867.9 287.8,868.9 289.8,867.0 291.8,872.0 293.8,866.0 295.7,868.0 297.7,870.6 299.7,869.1 301.7,871.6 303.7,869.1 305.6,867.2 307.6,868.2 309.6,870.2 311.6,870.8 313.5,869.3 315.5,869.3 317.5,868.3 319.5,872.4 321.5,865.9 323.4,865.9 325.4,870.9 327.4,865.0 329.4,868.5 331.3,868.5 333.3,868.5 335.3,867.6 337.3,868.6 339.3,868.6 341.2,873.7 343.2,864.7 345.2,869.7 347.2,869.7 349.1,869.8 351.1,867.8 353.1,872.8 355.1,868.8 357.1,867.9 359.0,868.9 361.0,868.9 363.0,867.9 365.0,871.5 367.0,869.0 368.9,874.0 370.9,868.1 372.9,870.1 374.9,873.1 376.8,869.1 378.8,868.2 380.8,866.7 382.8,869.2 384.8,869.2 386.7,874.3 388.7,868.3 390.7,866.8 392.7,865.3 394.6,866.9 396.6,869.4 398.6,869.4 400.6,869.5 402.6,871.5 404.5,872.0 406.5,871.5 408.5,870.6 410.5,868.6 412.4,873.1 414.4,869.6 416.4,867.2 418.4,869.7 420.4,873.2 422.3,868.7 424.3,869.8 426.3,870.8 428.3,867.8 430.2,869.9 432.2,867.9 434.2,867.9 436.2,866.4 438.2,870.0 440.1,870.0 442.1,871.0 444.1,869.0 446.1,872.1 448.0,866.1 450.0,871.1 452.0,872.1 454.0,871.2 456.0,867.7 457.9,870.2 459.9,869.3 461.9,870.3 463.9,870.3 465.9,872.3 467.8,870.4 469.8,870.4 471.8,867.9 473.8,871.4 475.7,868.5 477.7,874.0 479.7,875.5 481.7,873.0 483.7,872.6 485.6,869.6 487.6,872.6 489.6,870.7 491.6,871.7 493.5,869.7 495.5,870.7 497.5,873.3 499.5,868.8 501.5,866.8 503.4,870.8 505.4,869.9 507.4,869.9 509.4,868.9 511.3,870.9 513.3,873.5 515.3,872.0 517.3,871.0 519.3,868.6 521.2,867.6 523.2,873.1 525.2,872.1 527.2,870.2 529.1,873.7 531.1,871.2 533.1,873.2 535.1,874.8 537.1,871.3 539.0,867.8 541.0,869.3 543.0,872.4 545.0,871.4 546.9,872.4 548.9,875.5 550.9,871.5 552.9,870.5 554.9,869.5 556.8,872.6 558.8,870.6 560.8,871.6 562.8,870.6 564.8,871.7 566.7,867.7 568.7,871.7 570.7,871.7 572.7,871.8 574.6,869.3 576.6,872.8 578.6,869.9 580.6,871.9 582.6,870.9 584.5,870.9 586.5,869.5 588.5,872.0 590.5,871.0 592.4,872.0 594.4,876.1 596.4,875.6 598.4,870.1 600.4,872.1 602.3,868.7 604.3,872.2 606.3,872.2 608.3,874.3 610.2,872.3 612.2,871.3 614.2,868.3 616.2,872.4 618.2,872.4 620.1,868.4 622.1,874.9 624.1,875.0 626.1,876.0" fill="none" stroke="#000" stroke-width="1"/><g fill="none" stroke="#000" stroke-width="0.75"><circle cx="148.9" cy="747.0" r="3.1"/><circle cx="150.9" cy="747.0" r="3.1"/><circle cx="152.9" cy="747.0" r="3.1"/><circle cx="154.9" cy="747.0" r="3.1"/><circle cx="156.8" cy="747.0" r="3.1"/><circle cx="158.8" cy="747.0" r="3.1"/><circle cx="160.8" cy="747.0" r="3.1"/><circle cx="162.8" cy="747.0" r="3.1"/><circle cx="164.7" cy="747.0" r="3.1"/><circle cx="166.7" cy="747.0" r="3.1"/><circle cx="168.7" cy="747.0" r="3.1"/><circle cx="170.7" cy="747.0" r="3.1"/><circle cx="172.7" cy="747.0" r="3.1"/><circle cx="174.6" cy="747.0" r="3.1"/><circle cx="176.6" cy="747.0" r="3.1"/><circle cx="178.6" cy="747.0" r="3.1"/><circle cx="180.6" cy="747.0" r="3.1"/><circle cx="183.4" cy="753.4" r="3.1"/><circle cx="185.4" cy="778.2" r="3.1"/><circle cx="187.3" cy="806.4" r="3.1"/><circle cx="189.4" cy="824.4" r="3.1"/><circle cx="191.4" cy="875.2" r="3.1"/><circle cx="193.0" cy="866.0" r="3.1"/><circle cx="194.5" cy="868.5" r="3.1"/><circle cx="196.2" cy="857.6" r="3.1"/><circle cx="198.1" cy="890.1" r="3.1"/><circle cx="199.8" cy="872.0" r="3.1"/><circle cx="202.2" cy="861.7" r="3.1"/><circle cx="204.6" cy="891.3" r="3.1"/><circle cx="206.5" cy="869.7" r="3.1"/><circle cx="208.7" cy="864.9" r="3.1"/><circle cx="211.3" cy="877.4" r="3.1"/><circle cx="213.0" cy="877.6" r="3.1"/><circle cx="214.2" cy="864.9" r="3.1"/><circle cx="216.6" cy="868.5" r="3.1"/><circle cx="218.6" cy="867.0" r="3.1"/><circle cx="220.6" cy="866.0" r="3.1"/><circle cx="222.6" cy="866.1" r="3.1"/><circle cx="224.5" cy="866.1" r="3.1"/><circle cx="226.5" cy="863.6" r="3.1"/><circle cx="228.5" cy="868.1" r="3.1"/><circle cx="230.5" cy="867.2" r="3.1"/><circle cx="232.4" cy="868.2" r="3.1"/><circle cx="234.4" cy="866.2" r="3.1"/><circle cx="236.4" cy="872.2" r="3.1"/><circle cx="238.4" cy="872.3" r="3.1"/><circle cx="240.4" cy="866.3" r="3.1"/><circle cx="242.3" cy="863.3" r="3.1"/><circle cx="244.3" cy="867.3" r="3.1"/><circle cx="246.3" cy="867.4" r="3.1"/><circle cx="248.3" cy="867.4" r="3.1"/><circle cx="250.2" cy="867.4" r="3.1"/><circle cx="252.2" cy="867.5" r="3.1"/><circle cx="254.2" cy="866.5" r="3.1"/><circle cx="256.2" cy="867.5" r="3.1"/><circle cx="258.2" cy="868.5" r="3.1"/><circle cx="260.1" cy="870.1" r="3.1"/><circle cx="262.1" cy="868.6" r="3.1"/><circle cx="264.1" cy="867.6" r="3.1"/><circle cx="266.1" cy="869.6" r="3.1"/><circle cx="268.1" cy="867.7" r="3.1"/><circle cx="270.0" cy="867.7" r="3.1"/><circle cx="272.0" cy="865.2" r="3.1"/><circle cx="274.0" cy="866.7" r="3.1"/><circle cx="276.0" cy="868.8" r="3.1"/><circle cx="277.9" cy="867.8" r="3.1"/><circle cx="279.9" cy="868.8" r="3.1"/><circle cx="281.9" cy="866.9" r="3.1"/><circle cx="283.9" cy="865.4" r="3.1"/><circle cx="285.9" cy="867.9" r="3.1"/><circle cx="287.8" cy="868.9" r="3.1"/><circle cx="289.8" cy="867.0" r="3.1"/><circle cx="291.8" cy="872.0" r="3.1"/><circle cx="293.8" cy="866.0" r="3.1"/><circle cx="295.7" cy="868.0" r="3.1"/><circle cx="297.7" cy="870.6" r="3.1"/><circle cx="299.7" cy="869.1" r="3.1"/><circle cx="301.7" cy="871.6" r="3.1"/><circle cx="303.7" cy="869.1" r="3.1"/><circle cx="305.6" cy="867.2" r="3.1"/><circle cx="307.6" cy="868.2" r="3.1"/><circle cx="309.6" cy="870.2" r="3.1"/><circle cx="311.6" cy="870.8" r="3.1"/><circle cx="313.5" cy="869.3" r="3.1"/><circle cx="315.5" cy="869.3" r="3.1"/><circle cx="317.5" cy="868.3" r="3.1"/><circle cx="319.5" cy="872.4" r="3.1"/><circle cx="321.5" cy="865.9" r="3.1"/><circle cx="323.4" cy="865.9" r="3.1"/><circle cx="325.4" cy="870.9" r="3.1"/><circle cx="327.4" cy="865.0" r="3.1"/><circle cx="329.4" cy="868.5" r="3.1"/><circle cx="331.3" cy="868.5" r="3.1"/><circle cx="333.3" cy="868.5" r="3.1"/><circle cx="335.3" cy="867.6" r="3.1"/><circle cx="337.3" cy="868.6" r="3.1"/><circle cx="339.3" cy="868.6" r="3.1"/><circle cx="341.2" cy="873.7" r="3.1"/><circle cx="343.2" cy="864.7" r="3.1"/><circle cx="345.2" cy="869.7" r="3.1"/><circle cx="347.2" cy="869.7" r="3.1"/><circle cx="349.1" cy="869.8" r="3.1"/><circle cx="351.1" cy="867.8" r="3.1"/><circle cx="353.1" cy="872.8" r="3.1"/><circle cx="355.1" cy="868.8" r="3.1"/><circle cx="357.1" cy="867.9" r="3.1"/><circle cx="359.0" cy="868.9" r="3.1"/><circle cx="361.0" cy="868.9" r="3.1"/><circle cx="363.0" cy="867.9" r="3.1"/><circle cx="365.0" cy="871.5" r="3.1"/><circle cx="367.0" cy="869.0" r="3.1"/><circle cx="368.9" cy="874.0" r="3.1"/><circle cx="370.9" cy="868.1" r="3.1"/><circle cx="372.9" cy="870.1" r="3.1"/><circle cx="374.9" cy="873.1" r="3.1"/><circle cx="376.8" cy="869.1" r="3.1"/><circle cx="378.8" cy="868.2" r="3.1"/><circle cx="380.8" cy="866.7" r="3.1"/><circle cx="382.8" cy="869.2" r="3.1"/><circle cx="384.8" cy="869.2" r="3.1"/><circle cx="386.7" cy="874.3" r="3.1"/><circle cx="388.7" cy="868.3" r="3.1"/><circle cx="390.7" cy="866.8" r="3.1"/><circle cx="392.7" cy="865.3" r="3.1"/><circle cx="394.6" cy="866.9" r="3.1"/><circle cx="396.6" cy="869.4" r="3.1"/><circle cx="398.6" cy="869.4" r="3.1"/><circle cx="400.6" cy="869.5" r="3.1"/><circle cx="402.6" cy="871.5" r="3.1"/><circle cx="404.5" cy="872.0" r="3.1"/><circle cx="406.5" cy="871.5" r="3.1"/><circle cx="408.5" cy="870.6" r="3.1"/><circle cx="410.5" cy="868.6" r="3.1"/><circle cx="412.4" cy="873.1" r="3.1"/><circle cx="414.4" cy="869.6" r="3.1"/><circle cx="416.4" cy="867.2" r="3.1"/><circle cx="418.4" cy="869.7" r="3.1"/><circle cx="420.4" cy="873.2" r="3.1"/><circle cx="422.3" cy="868.7" r="3.1"/><circle cx="424.3" cy="869.8" r="3.1"/><circle cx="426.3" cy="870.8" r="3.1"/><circle cx="428.3" cy="867.8" r="3.1"/><circle cx="430.2" cy="869.9" r="3.1"/><circle cx="432.2" cy="867.9" r="3.1"/><circle cx="434.2" cy="867.9" r="3.1"/><circle cx="436.2" cy="866.4" r="3.1"/><circle cx="438.2" cy="870.0" r="3.1"/><circle cx="440.1" cy="870.0" r="3.1"/><circle cx="442.1" cy="871.0" r="3.1"/><circle cx="444.1" cy="869.0" r="3.1"/><circle cx="446.1" cy="872.1" r="3.1"/><circle cx="448.0" cy="866.1" r="3.1"/><circle cx="450.0" cy="871.1" r="3.1"/><circle cx="452.0" cy="872.1" r="3.1"/><circle cx="454.0" cy="871.2" r="3.1"/><circle cx="456.0" cy="867.7" r="3.1"/><circle cx="457.9" cy="870.2" r="3.1"/><circle cx="459.9" cy="869.3" r="3.1"/><circle cx="461.9" cy="870.3" r="3.1"/><circle cx="463.9" cy="870.3" r="3.1"/><circle cx="465.9" cy="872.3" r="3.1"/><circle cx="467.8" cy="870.4" r="3.1"/><circle cx="469.8" cy="870.4" r="3.1"/><circle cx="471.8" cy="867.9" r="3.1"/><circle cx="473.8" cy="871.4" r="3.1"/><circle cx="475.7" cy="868.5" r="3.1"/><circle cx="477.7" cy="874.0" r="3.1"/><circle cx="479.7" cy="875.5" r="3.1"/><circle cx="481.7" cy="873.0" r="3.1"/><circle cx="483.7" cy="872.6" r="3.1"/><circle cx="485.6" cy="869.6" r="3.1"/><circle cx="487.6" cy="872.6" r="3.1"/><circle cx="489.6" cy="870.7" r="3.1"/><circle cx="491.6" cy="871.7" r="3.1"/><circle cx="493.5" cy="869.7" r="3.1"/><circle cx="495.5" cy="870.7" r="3.1"/><circle cx="497.5" cy="873.3" r="3.1"/><circle cx="499.5" cy="868.8" r="3.1"/><circle cx="501.5" cy="866.8" r="3.1"/><circle cx="503.4" cy="870.8" r="3.1"/><circle cx="505.4" cy="869.9" r="3.1"/><circle cx="507.4" cy="869.9" r="3.1"/><circle cx="509.4" cy="868.9" r="3.1"/><circle cx="511.3" cy="870.9" r="3.1"/><circle cx="513.3" cy="873.5" r="3.1"/><circle cx="515.3" cy="872.0" r="3.1"/><circle cx="517.3" cy="871.0" r="3.1"/><circle cx="519.3" cy="868.6" r="3.1"/><circle cx="521.2" cy="867.6" r="3.1"/><circle cx="523.2" cy="873.1" r="3.1"/><circle cx="525.2" cy="872.1" r="3.1"/><circle cx="527.2" cy="870.2" r="3.1"/><circle cx="529.1" cy="873.7" r="3.1"/><circle cx="531.1" cy="871.2" r="3.1"/><circle cx="533.1" cy="873.2" r="3.1"/><circle cx="535.1" cy="874.8" r="3.1"/><circle cx="537.1" cy="871.3" r="3.1"/><circle cx="539.0" cy="867.8" r="3.1"/><circle cx="541.0" cy="869.3" r="3.1"/><circle cx="543.0" cy="872.4" r="3.1"/><circle cx="545.0" cy="871.4" r="3.1"/><circle cx="546.9" cy="872.4" r="3.1"/><circle cx="548.9" cy="875.5" r="3.1"/><circle cx="550.9" cy="871.5" r="3.1"/><circle cx="552.9" cy="870.5" r="3.1"/><circle cx="554.9" cy="869.5" r="3.1"/><circle cx="556.8" cy="872.6" r="3.1"/><circle cx="558.8" cy="870.6" r="3.1"/><circle cx="560.8" cy="871.6" r="3.1"/><circle cx="562.8" cy="870.6" r="3.1"/><circle cx="564.8" cy="871.7" r="3.1"/><circle cx="566.7" cy="867.7" r="3.1"/><circle cx="568.7" cy="871.7" r="3.1"/><circle cx="570.7" cy="871.7" r="3.1"/><circle cx="572.7" cy="871.8" r="3.1"/><circle cx="574.6" cy="869.3" r="3.1"/><circle cx="576.6" cy="872.8" r="3.1"/><circle cx="578.6" cy="869.9" r="3.1"/><circle cx="580.6" cy="871.9" r="3.1"/><circle cx="582.6" cy="870.9" r="3.1"/><circle cx="584.5" cy="870.9" r="3.1"/><circle cx="586.5" cy="869.5" r="3.1"/><circle cx="588.5" cy="872.0" r="3.1"/><circle cx="590.5" cy="871.0" r="3.1"/><circle cx="592.4" cy="872.0" r="3.1"/><circle cx="594.4" cy="876.1" r="3.1"/><circle cx="596.4" cy="875.6" r="3.1"/><circle cx="598.4" cy="870.1" r="3.1"/><circle cx="600.4" cy="872.1" r="3.1"/><circle cx="602.3" cy="868.7" r="3.1"/><circle cx="604.3" cy="872.2" r="3.1"/><circle cx="606.3" cy="872.2" r="3.1"/><circle cx="608.3" cy="874.3" r="3.1"/><circle cx="610.2" cy="872.3" r="3.1"/><circle cx="612.2" cy="871.3" r="3.1"/><circle cx="614.2" cy="868.3" r="3.1"/><circle cx="616.2" cy="872.4" r="3.1"/><circle cx="618.2" cy="872.4" r="3.1"/><circle cx="620.1" cy="868.4" r="3.1"/><circle cx="622.1" cy="874.9" r="3.1"/><circle cx="624.1" cy="875.0" r="3.1"/><circle cx="626.1" cy="876.0" r="3.1"/></g><line x1="627" x2="637" y1="872" y2="872" stroke="#a03030" stroke-width="1"/></svg>
<svg class="a" style="left:143.3px;top:907.5px" width="8" height="8" viewBox="0 0 8 8"><circle cx="4" cy="4" r="3.1" fill="none" stroke="#000" stroke-width="0.9"/></svg>
<div class="a" style="left:96px;top:1000px;width:73px;height:10px;background:#e9e9e9;border:1px solid #adadad;border-bottom:none"></div>
<div class="a" style="left:96px;top:1000px;width:73px;height:10px;overflow:hidden"><div class="t" style="left:14.0px;top:2.5px;font-size:12px;line-height:16px;color:#000;letter-spacing:-0.712px;">Réglages</div></div>
<!-- part_dialog -->
<div class="a" style="left:776px;top:260px;width:369px;height:517px;background:#fff;border:1px solid #2f7bd0;box-shadow:0 0 0 1px rgba(90,140,210,.3)"></div>
<div class="t" style="left:779.5px;top:265.0px;font-size:12px;line-height:16px;color:#000;letter-spacing:-0.117px;">Réglage de la descente/montée en température</div>
<svg class="a" style="left:1123.5px;top:267.5px" width="11" height="11" viewBox="0 0 11 11"><path d="M0.5 0.5 L10.5 10.5 M10.5 0.5 L0.5 10.5" stroke="#222" stroke-width="1.2"/></svg>
<div class="a" style="left:777px;top:308px;width:360px;height:405px;background:#fff;border:1px solid #d9d9d9;border-left:none"></div>
<div class="a" style="left:837px;top:290px;width:45px;height:19px;background:#fff;border:1px solid #d9d9d9;border-bottom:none"></div>
<div class="a" style="left:776px;top:288px;width:62px;height:21px;background:#fff;border:1px solid #d9d9d9;border-bottom:none;border-left:none"></div>
<div class="t" style="left:784.5px;top:290.0px;font-size:12px;line-height:16px;color:#000;letter-spacing:-0.587px;">Descente</div>
<div class="t" style="left:842.3px;top:292.0px;font-size:12px;line-height:16px;color:#000;letter-spacing:-0.637px;">Montée</div>
<div class="a" style="left:780px;top:326px;width:349px;height:60px;border:1px solid #dcdcdc"></div>
<div class="a" style="left:786px;top:320px;width:119px;height:13px;background:#fff;"></div>
<div class="t" style="left:788.4px;top:319.0px;font-size:12px;line-height:16px;color:#000;letter-spacing:-0.734px;">Paramètres de descente</div>
<div class="t" style="left:862.5px;top:337.0px;font-size:12px;line-height:16px;color:#000;letter-spacing:-0.693px;">Ne jamais dépasser la puissance ci dessous</div>
<div class="a" style="left:1085px;top:338.5px;width:13px;height:13px;border:1px solid #333;background:#fff"></div><svg class="a" style="left:1085px;top:338.5px" width="13" height="13" viewBox="0 0 13 13"><path d="M2.5 6.5 L5.3 9.3 L10.5 3.2" fill="none" stroke="#333" stroke-width="1.3"/></svg>
<div class="t" style="left:908.6px;top:361.3px;font-size:12px;line-height:16px;color:#000;letter-spacing:-0.791px;">Puissance max pendant 7min30  (%)</div>
<div class="a" style="left:1084px;top:359px;width:35px;height:21px;border:1px solid #7a7a7a;background:#fff"></div>
<div class="t" style="left:1087.7px;top:361.5px;font-size:12px;line-height:16px;color:#000;letter-spacing:-0.423px;">95</div>
<div class="t" style="left:780.9px;top:388.2px;font-size:12px;line-height:16px;color:#000;letter-spacing:-0.616px;">Table de descente de température</div>
<div class="a" style="left:780px;top:408px;width:349px;height:163px;border:1px solid #a0a0a0;background:#fff"></div>
<div class="a" style="left:819.5px;top:410px;width:1px;height:17px;background:#d8d8d8;"></div>
<div class="a" style="left:890px;top:410px;width:1px;height:17px;background:#d8d8d8;"></div>
<div class="a" style="left:961px;top:410px;width:1px;height:17px;background:#d8d8d8;"></div>
<div class="a" style="left:1047px;top:410px;width:1px;height:17px;background:#d8d8d8;"></div>
<div class="a" style="left:781px;top:427px;width:267px;height:1px;background:#e4e4e4;"></div>
<div class="t" style="left:788.2px;top:411.0px;font-size:12px;line-height:16px;color:#000;letter-spacing:-0.672px;">Etape</div>
<div class="t" style="left:826.6px;top:411.0px;font-size:12px;line-height:16px;color:#000;letter-spacing:-0.652px;">Tp finale °C</div>
<div class="t" style="left:897.3px;top:411.0px;font-size:12px;line-height:16px;color:#000;letter-spacing:-0.722px;">Durée (Min)</div>
<div class="t" style="left:968.0px;top:411.0px;font-size:12px;line-height:16px;color:#000;letter-spacing:-0.679px;">Durée tot. (min)</div>
<div class="a" style="left:819.5px;top:427px;width:1px;height:143px;background:#d8d8d8;"></div>
<div class="a" style="left:819.6px;top:427.6px;width:227.4px;height:18px;background:#3a60dc;"></div>
<div class="a" style="left:890px;top:427.6px;width:1.2px;height:18px;background:#fff;"></div>
<div class="a" style="left:961px;top:427.6px;width:1.2px;height:18px;background:#fff;"></div>
<div class="a" style="left:781px;top:445.2px;width:39px;height:1px;background:#e0e0e0;"></div>
<div class="t" style="left:788.2px;top:429.4px;font-size:12px;line-height:16px;color:#000;">1</div>
<div class="t" style="left:826.6px;top:428.4px;font-size:12px;line-height:16px;color:#fff;letter-spacing:-0.525px;">10.0</div>
<div class="t" style="left:897.3px;top:428.4px;font-size:12px;line-height:16px;color:#fff;letter-spacing:-0.500px;">2.5</div>
<div class="t" style="left:968.0px;top:428.4px;font-size:12px;line-height:16px;color:#fff;letter-spacing:-0.500px;">2.5</div>
<div class="a" style="left:819.6px;top:445.6px;width:227.4px;height:18px;background:#e8e8fa;"></div>
<div class="a" style="left:781px;top:463.2px;width:39px;height:1px;background:#e0e0e0;"></div>
<div class="t" style="left:788.2px;top:447.4px;font-size:12px;line-height:16px;color:#000;">2</div>
<div class="t" style="left:826.6px;top:446.4px;font-size:12px;line-height:16px;color:#000;letter-spacing:-0.500px;">5.0</div>
<div class="t" style="left:897.3px;top:446.4px;font-size:12px;line-height:16px;color:#000;letter-spacing:-0.500px;">2.5</div>
<div class="t" style="left:968.0px;top:446.4px;font-size:12px;line-height:16px;color:#000;letter-spacing:-0.500px;">5.0</div>
<div class="a" style="left:781px;top:481.2px;width:39px;height:1px;background:#e0e0e0;"></div>
<div class="t" style="left:788.2px;top:465.4px;font-size:12px;line-height:16px;color:#000;">3</div>
<div class="t" style="left:826.6px;top:464.4px;font-size:12px;line-height:16px;color:#000;letter-spacing:-0.500px;">0.0</div>
<div class="t" style="left:897.3px;top:464.4px;font-size:12px;line-height:16px;color:#000;letter-spacing:-0.500px;">2.5</div>
<div class="t" style="left:968.0px;top:464.4px;font-size:12px;line-height:16px;color:#000;letter-spacing:-0.500px;">7.5</div>
<div class="a" style="left:819.6px;top:481.6px;width:227.4px;height:18px;background:#e8e8fa;"></div>
<div class="a" style="left:781px;top:499.2px;width:39px;height:1px;background:#e0e0e0;"></div>
<div class="t" style="left:788.2px;top:483.4px;font-size:12px;line-height:16px;color:#000;">4</div>
<div class="t" style="left:826.6px;top:482.4px;font-size:12px;line-height:16px;color:#000;letter-spacing:-0.465px;">-5.0</div>
<div class="t" style="left:897.3px;top:482.4px;font-size:12px;line-height:16px;color:#000;letter-spacing:-0.500px;">2.5</div>
<div class="t" style="left:968.0px;top:482.4px;font-size:12px;line-height:16px;color:#000;letter-spacing:-0.525px;">10.0</div>
<div class="a" style="left:781px;top:517.2px;width:39px;height:1px;background:#e0e0e0;"></div>
<div class="t" style="left:788.2px;top:501.4px;font-size:12px;line-height:16px;color:#000;">5</div>
<div class="t" style="left:826.6px;top:500.4px;font-size:12px;line-height:16px;color:#000;letter-spacing:-0.492px;">-10.0</div>
<div class="t" style="left:897.3px;top:500.4px;font-size:12px;line-height:16px;color:#000;letter-spacing:-0.500px;">2.5</div>
<div class="t" style="left:968.0px;top:500.4px;font-size:12px;line-height:16px;color:#000;letter-spacing:-0.525px;">12.5</div>
<div class="a" style="left:819.6px;top:517.6px;width:227.4px;height:18px;background:#e8e8fa;"></div>
<div class="a" style="left:781px;top:535.2px;width:39px;height:1px;background:#e0e0e0;"></div>
<div class="t" style="left:788.2px;top:519.4px;font-size:12px;line-height:16px;color:#000;">6</div>
<div class="t" style="left:826.6px;top:518.4px;font-size:12px;line-height:16px;color:#000;letter-spacing:-0.492px;">-15.0</div>
<div class="t" style="left:897.3px;top:518.4px;font-size:12px;line-height:16px;color:#000;letter-spacing:-0.500px;">2.5</div>
<div class="t" style="left:968.0px;top:518.4px;font-size:12px;line-height:16px;color:#000;letter-spacing:-0.525px;">15.0</div>
<div class="a" style="left:781px;top:553.2px;width:39px;height:1px;background:#e0e0e0;"></div>
<div class="t" style="left:788.2px;top:537.4px;font-size:12px;line-height:16px;color:#000;">7</div>
<div class="t" style="left:826.6px;top:536.4px;font-size:12px;line-height:16px;color:#000;letter-spacing:-0.492px;">-20.0</div>
<div class="t" style="left:897.3px;top:536.4px;font-size:12px;line-height:16px;color:#000;letter-spacing:-0.500px;">2.5</div>
<div class="t" style="left:968.0px;top:536.4px;font-size:12px;line-height:16px;color:#000;letter-spacing:-0.525px;">17.5</div>
<div class="a" style="left:819.6px;top:553.6px;width:227.4px;height:16.399999999999977px;background:#e8e8fa;"></div>
<div class="a" style="left:781px;top:571.2px;width:39px;height:1px;background:#e0e0e0;"></div>
<div class="t" style="left:788.2px;top:555.4px;font-size:12px;line-height:16px;color:#000;">8</div>
<div class="t" style="left:826.6px;top:554.4px;font-size:12px;line-height:16px;color:#000;letter-spacing:-0.492px;">-25.0</div>
<div class="t" style="left:897.3px;top:554.4px;font-size:12px;line-height:16px;color:#000;letter-spacing:-0.500px;">2.5</div>
<div class="t" style="left:968.0px;top:554.4px;font-size:12px;line-height:16px;color:#000;letter-spacing:-0.525px;">20.0</div>
<div class="a" style="left:1111px;top:409px;width:17px;height:161px;background:#fff;"></div>
<svg class="a" style="left:1113.5px;top:415px" width="10" height="8" viewBox="0 0 10 8"><path d="M1 6 L5 2 L9 6" fill="none" stroke="#555" stroke-width="1.5"/></svg>
<svg class="a" style="left:1113.5px;top:557px" width="10" height="8" viewBox="0 0 10 8"><path d="M1 2 L5 6 L9 2" fill="none" stroke="#555" stroke-width="1.5"/></svg>
<div class="a" style="left:1111.3px;top:427.3px;width:15px;height:16.7px;background:#cdcdcd;"></div>
<div class="t" style="left:910.5px;top:573.0px;font-size:12px;line-height:16px;color:#000;letter-spacing:-0.692px;">Durée de la séquence (minutes)</div>
<div class="a" style="left:1067px;top:572px;width:62px;height:19px;border-top:1px solid #a8a8a8;border-left:1px solid #a8a8a8;background:#fff"></div>
<div class="t" style="left:1087.4px;top:571.5px;font-size:12px;line-height:16px;color:#000;letter-spacing:-0.639px;">20.0</div>
<div class="a" style="left:780px;top:599px;width:349px;height:106px;border:1px solid #dcdcdc"></div>
<div class="a" style="left:786px;top:593px;width:84px;height:13px;background:#fff;"></div>
<div class="t" style="left:788.2px;top:591.6px;font-size:12px;line-height:16px;color:#000;letter-spacing:-0.658px;">Editer l'étape n°1</div>
<div class="t" style="left:818.5px;top:614.2px;font-size:12px;line-height:16px;color:#000;letter-spacing:-0.671px;">Température à atteindre (°C)</div>
<div class="a" style="left:957px;top:612px;width:44px;height:21px;border:1px solid #7a7a7a;background:#fff"></div>
<div class="t" style="left:961.0px;top:614.5px;font-size:12px;line-height:16px;color:#000;">-5</div>
<div class="t" style="left:862.8px;top:641.0px;font-size:12px;line-height:16px;color:#000;letter-spacing:-0.730px;">Temps en minutes</div>
<div class="a" style="left:957px;top:639px;width:44px;height:21px;border:1px solid #7a7a7a;background:#fff"></div>
<div class="t" style="left:961.0px;top:641.5px;font-size:12px;line-height:16px;color:#000;">2.5</div>
<div class="a" style="left:847px;top:671.5px;width:77px;height:24.5px;background:#e9e9e9;border:1px solid #adadad;"><div class="t" style="left:20.5px;top:3.8px;font-size:12px;line-height:16px;color:#000;letter-spacing:-0.543px;">Effacer</div></div>
<div class="a" style="left:930px;top:671.5px;width:77px;height:24.5px;background:#e9e9e9;border:1px solid #adadad;"><div class="t" style="left:20.0px;top:3.8px;font-size:12px;line-height:16px;color:#000;letter-spacing:-0.432px;">Ajouter</div></div>
<div class="a" style="left:1012px;top:671.5px;width:77px;height:24.5px;background:#e9e9e9;border:1px solid #adadad;"><div class="t" style="left:7.8px;top:3.8px;font-size:12px;line-height:16px;color:#000;letter-spacing:-0.605px;">Mettre à jour</div></div>
<div class="a" style="left:876px;top:722px;width:157px;height:48px;background:#e9e9e9;border:2px solid #0078d7"></div>
<div class="t" style="left:935.5px;top:738.0px;font-size:12px;line-height:16px;color:#000;letter-spacing:-0.669px;">Terminé</div>
<!-- part_right -->
<div class="a" style="left:765.5px;top:828px;width:255px;height:30px;background:#fff;"></div>
<div class="t" style="left:773.4px;top:834.8px;font-size:12px;line-height:16px;color:#999;letter-spacing:-0.273px;">Loupe</div>
<div class="a" style="left:1001.5px;top:835.3px;width:19px;height:18.2px;background:#efefef;"></div>
<div class="a" style="left:1369px;top:76px;width:251px;height:464px;background:#fff;"></div>
<div class="t" style="left:1373.5px;top:78.5px;font-size:12px;line-height:16px;color:#999;letter-spacing:-0.291px;">QSI 583ws   -&gt;  -3.0°C   [24% , -3.0°C]</div>
<div class="a" style="left:1600px;top:76px;width:19px;height:20px;background:#efefef;"></div>
<div class="a" style="left:1371px;top:120px;width:247px;height:382px;border:1px solid #dcdcdc;background:#fff"></div>
<div class="a" style="left:1371px;top:100px;width:67px;height:21px;border:1px solid #dcdcdc;border-bottom:none;background:#fff"></div>
<div class="t" style="left:1378.0px;top:101.5px;font-size:12px;line-height:16px;color:#000;letter-spacing:-0.744px;">QSI 583ws</div>
<div class="a" style="left:1375px;top:125px;width:119px;height:38px;background:#e9e9e9;border:1px solid #adadad;"><div class="t" style="left:27.8px;top:10.5px;font-size:12px;line-height:16px;color:#000;letter-spacing:-0.897px;">DEMARRER</div></div>
<div class="a" style="left:1497px;top:125px;width:119px;height:38px;background:#cccccc;border:1px solid #bfbfbf;"><div class="t" style="left:24.8px;top:10.5px;font-size:12px;line-height:16px;color:#8a8a8a;letter-spacing:-1.718px;">ABANDONNER</div></div>
<div class="t" style="left:1379.0px;top:167.0px;font-size:12px;line-height:16px;color:#000;letter-spacing:-0.863px;">Temps:</div>
<div class="a" style="left:1382px;top:194px;width:226px;height:1px;background:#a0a0a0;"></div>
<div class="t" style="left:1378.5px;top:200.7px;font-size:12px;line-height:16px;color:#000;letter-spacing:-0.764px;">Exp.(sec)</div>
<div class="a" style="left:1426px;top:199px;width:65px;height:21px;border:1px solid #7a7a7a;background:#fff"></div><div class="t" style="left:1429.5px;top:201.5px;font-size:12px;line-height:16px;color:#000;">1</div><svg class="a" style="left:1477px;top:206.5px" width="10" height="7" viewBox="0 0 10 7"><path d="M1 1.5 L5 5.5 L9 1.5" fill="none" stroke="#444" stroke-width="1.1"/></svg>
<div class="t" style="left:1494.6px;top:198.2px;font-size:12px;line-height:16px;color:#000;letter-spacing:-0.655px;">Bouclage</div>
<div class="a" style="left:1576px;top:199px;width:13px;height:13px;border:1px solid #333;background:#fff"></div>
<div class="a" style="left:1595px;top:198.5px;width:18px;height:17.5px;background:#cccccc;"></div>
<svg class="a" style="left:1599.5px;top:202.5px" width="9" height="10" viewBox="0 0 9 10"><path d="M1 1 L8 9 M8 1 L1 9" stroke="#a8a8a8" stroke-width="1"/></svg>
<div class="t" style="left:1494.6px;top:217.0px;font-size:12px;line-height:16px;color:#000;letter-spacing:-0.603px;">Bouclage infini</div>
<div class="a" style="left:1576px;top:218px;width:13px;height:13px;border:1px solid #333;background:#fff"></div>
<div class="t" style="left:1378.5px;top:237.8px;font-size:12px;line-height:16px;color:#000;letter-spacing:-0.659px;">Nbre de boucles</div>
<div class="a" style="left:1458px;top:236px;width:55px;height:22px;border:1px solid #7a7a7a;background:#fff"></div><div class="t" style="left:1461.5px;top:239.0px;font-size:12px;line-height:16px;color:#000;">10</div><div class="a" style="left:1496px;top:238px;width:13px;height:18px;background:#f0f0f0;border:1px solid #dadada"></div><svg class="a" style="left:1498px;top:240px" width="9" height="5" viewBox="0 0 9 5"><path d="M1 4.5 L4.5 1 L8 4.5Z" fill="#111"/></svg><svg class="a" style="left:1498px;top:249px" width="9" height="5" viewBox="0 0 9 5"><path d="M1 0.5 L4.5 4 L8 0.5Z" fill="#111"/></svg><div class="a" style="left:1497px;top:246.5px;width:11px;height:1px;background:#dadada;"></div>
<div class="t" style="left:1517.5px;top:237.8px;font-size:12px;line-height:16px;color:#000;letter-spacing:-0.741px;">Délai (s)</div>
<div class="a" style="left:1564px;top:236px;width:40px;height:22px;border:1px solid #7a7a7a;background:#fff"></div><div class="t" style="left:1567.5px;top:239.0px;font-size:12px;line-height:16px;color:#000;">1</div><div class="a" style="left:1587.5px;top:238px;width:13px;height:18px;background:#f0f0f0;border:1px solid #dadada"></div><svg class="a" style="left:1589.5px;top:240px" width="9" height="5" viewBox="0 0 9 5"><path d="M1 4.5 L4.5 1 L8 4.5Z" fill="#111"/></svg><svg class="a" style="left:1589.5px;top:249px" width="9" height="5" viewBox="0 0 9 5"><path d="M1 0.5 L4.5 4 L8 0.5Z" fill="#111"/></svg><div class="a" style="left:1588.5px;top:246.5px;width:11px;height:1px;background:#dadada;"></div>
<div class="a" style="left:1382px;top:263px;width:226px;height:1px;background:#a0a0a0;"></div>
<div class="t" style="left:1378.5px;top:269.7px;font-size:12px;line-height:16px;color:#000;letter-spacing:-0.937px;">BinX:</div>
<div class="a" style="left:1408px;top:269px;width:40px;height:22px;border:1px solid #7a7a7a;background:#fff"></div><div class="t" style="left:1411.5px;top:272.0px;font-size:12px;line-height:16px;color:#000;">1</div><div class="a" style="left:1431px;top:271px;width:13px;height:18px;background:#f0f0f0;border:1px solid #dadada"></div><svg class="a" style="left:1433px;top:273px" width="9" height="5" viewBox="0 0 9 5"><path d="M1 4.5 L4.5 1 L8 4.5Z" fill="#111"/></svg><svg class="a" style="left:1433px;top:282px" width="9" height="5" viewBox="0 0 9 5"><path d="M1 0.5 L4.5 4 L8 0.5Z" fill="#111"/></svg><div class="a" style="left:1432px;top:279.5px;width:11px;height:1px;background:#dadada;"></div>
<div class="t" style="left:1458.3px;top:269.7px;font-size:12px;line-height:16px;color:#000;letter-spacing:-0.724px;">BinY:</div>
<div class="a" style="left:1493px;top:269px;width:40px;height:22px;border:1px solid #7a7a7a;background:#fff"></div><div class="t" style="left:1496.5px;top:272.0px;font-size:12px;line-height:16px;color:#000;">1</div><div class="a" style="left:1516px;top:271px;width:13px;height:18px;background:#f0f0f0;border:1px solid #dadada"></div><svg class="a" style="left:1518px;top:273px" width="9" height="5" viewBox="0 0 9 5"><path d="M1 4.5 L4.5 1 L8 4.5Z" fill="#111"/></svg><svg class="a" style="left:1518px;top:282px" width="9" height="5" viewBox="0 0 9 5"><path d="M1 0.5 L4.5 4 L8 0.5Z" fill="#111"/></svg><div class="a" style="left:1517px;top:279.5px;width:11px;height:1px;background:#dadada;"></div>
<div class="a" style="left:1549px;top:273px;width:13px;height:13px;border:1px solid #333;background:#fff"></div><svg class="a" style="left:1549px;top:273px" width="13" height="13" viewBox="0 0 13 13"><path d="M2.5 6.5 L5.3 9.3 L10.5 3.2" fill="none" stroke="#333" stroke-width="1.3"/></svg>
<div class="t" style="left:1565.6px;top:271.7px;font-size:12px;line-height:16px;color:#000;letter-spacing:-1.002px;">Lier</div>
<div class="a" style="left:1380px;top:297px;width:73px;height:23px;background:#e9e9e9;border:1px solid #adadad;"><div class="t" style="left:7.0px;top:3.0px;font-size:12px;line-height:16px;color:#000;letter-spacing:-0.705px;">Exp Longue</div></div>
<div class="a" style="left:1460px;top:297px;width:73px;height:23px;background:#e9e9e9;border:1px solid #adadad;"><div class="t" style="left:8.5px;top:3.0px;font-size:12px;line-height:16px;color:#000;letter-spacing:-0.609px;">Exp. courte</div></div>
<div class="a" style="left:1540px;top:297px;width:73px;height:23px;background:#e9e9e9;border:1px solid #adadad;"><div class="t" style="left:11.0px;top:3.0px;font-size:12px;line-height:16px;color:#000;letter-spacing:-0.631px;">Sequence</div></div>
<div class="a" style="left:1390px;top:323.5px;width:209px;height:14px;background:#ffff14;box-shadow:0 0 2px 1px #ffffa0"></div>
<div class="t" style="left:1455.2px;top:322.0px;font-size:12px;line-height:16px;color:#000;letter-spacing:-1.066px;">Caméra n°1</div>
<div class="a" style="left:1374px;top:359px;width:239px;height:140px;border:1px solid #dcdcdc;background:#fff"></div>
<div class="a" style="left:1376px;top:343.5px;width:59.5px;height:16px;border:1px solid #dcdcdc;border-bottom:none;background:#fff"></div>
<div class="a" style="left:1435px;top:343.5px;width:48px;height:16px;border:1px solid #dcdcdc;border-bottom:none;background:#fff"></div>
<div class="a" style="left:1552px;top:343.5px;width:34px;height:16px;border:1px solid #dcdcdc;border-bottom:none;border-right:none;background:#fff"></div>
<div class="a" style="left:1482px;top:340.5px;width:70.5px;height:19.5px;border:1px solid #dcdcdc;border-bottom:none;background:#fff"></div>
<div class="t" style="left:1382.4px;top:343.8px;font-size:12px;line-height:16px;color:#000;letter-spacing:-0.745px;">Fenêtrage</div>
<div class="t" style="left:1442.0px;top:343.8px;font-size:12px;line-height:16px;color:#000;letter-spacing:-1.047px;">Caméra</div>
<div class="t" style="left:1490.7px;top:341.7px;font-size:12px;line-height:16px;color:#000;letter-spacing:-0.968px;">Temp. CCD</div>
<div class="t" style="left:1557.6px;top:343.8px;font-size:12px;line-height:16px;color:#000;letter-spacing:-1.046px;">Roue</div>
<div class="a" style="left:1583px;top:343px;width:32px;height:14.5px;background:#fff;"></div>
<div class="a" style="left:1583.7px;top:342.8px;width:15px;height:14.5px;background:#f0f0f0;border:1px solid #cfcfcf"></div>
<svg class="a" style="left:1586.7px;top:345px" width="9" height="10" viewBox="0 0 9 10"><path d="M6 2 L2.5 5 L6 8Z" fill="#000"/></svg>
<div class="a" style="left:1599.3px;top:342.8px;width:15px;height:14.5px;background:#f0f0f0;border:1px solid #cfcfcf"></div>
<svg class="a" style="left:1602.3px;top:345px" width="9" height="10" viewBox="0 0 9 10"><path d="M3 2 L6.5 5 L3 8Z" fill="#000"/></svg>
<div class="t" style="left:1382.8px;top:367.0px;font-size:12px;line-height:16px;color:#000;letter-spacing:-0.799px;">Temperature CCD: -3.00°C (Ext=18.78°C)</div>
<div class="a" style="left:1584.5px;top:365px;width:17.5px;height:17px;background:#e9e9e9;border:1px solid #adadad;"><div class="t" style="left:3.1px;top:0.0px;font-size:12px;line-height:16px;color:#000;">G</div></div>
<div class="a" style="left:1374.7px;top:380.3px;width:182.5px;height:33.5px;border:5px solid #e8121e;border-radius:14px"></div>
<div class="t" style="left:1382.8px;top:388.0px;font-size:12px;line-height:16px;color:#000;letter-spacing:-0.822px;">Temp. CCD requise (°C)</div>
<div class="a" style="left:1499.3px;top:386.8px;width:49.5px;height:19.6px;border:1px solid #7a7a7a;background:#fff"></div><div class="t" style="left:1502.8px;top:388.6px;font-size:12px;line-height:16px;color:#000;">-3.0</div><svg class="a" style="left:1534.8px;top:393.6px" width="10" height="7" viewBox="0 0 10 7"><path d="M1 1.5 L5 5.5 L9 1.5" fill="none" stroke="#444" stroke-width="1.1"/></svg>
<div class="a" style="left:1559px;top:387.7px;width:43px;height:17px;background:#e9e9e9;border:1px solid #adadad;"><div class="t" style="left:8.0px;top:0.0px;font-size:12px;line-height:16px;color:#000;letter-spacing:-0.470px;">Appl.</div></div>
<div class="t" style="left:1382.8px;top:413.2px;font-size:12px;line-height:16px;color:#000;letter-spacing:-0.796px;">Puissance refroidissement (%) : 24</div>
<div class="a" style="left:1584.5px;top:411.5px;width:17.5px;height:17px;background:#e9e9e9;border:1px solid #adadad;"><div class="t" style="left:3.1px;top:0.0px;font-size:12px;line-height:16px;color:#000;">G</div></div>
<div class="t" style="left:1382.8px;top:433.2px;font-size:12px;line-height:16px;color:#000;letter-spacing:-0.739px;">Consigne de température : -3.0 °C</div>
<div class="a" style="left:1383px;top:477.5px;width:51.5px;height:17.5px;background:#e9e9e9;border:2px solid #0078d7"></div>
<div class="t" style="left:1395.5px;top:478.5px;font-size:12px;line-height:16px;color:#000;letter-spacing:-0.725px;">Editer</div>
<div class="a" style="left:1441px;top:477.5px;width:52px;height:17.5px;background:#cccccc;border:1px solid #bfbfbf;"><div class="t" style="left:14.0px;top:0.2px;font-size:12px;line-height:16px;color:#8a8a8a;letter-spacing:-0.671px;">Stop</div></div>
<div class="a" style="left:1499.3px;top:477.5px;width:51.5px;height:17.5px;background:#e9e9e9;border:1px solid #adadad;"><div class="t" style="left:5.0px;top:0.2px;font-size:12px;line-height:16px;color:#000;letter-spacing:-0.646px;">Descen.</div></div>
<div class="a" style="left:1557px;top:477.5px;width:52px;height:17.5px;background:#e9e9e9;border:1px solid #adadad;"><div class="t" style="left:8.5px;top:0.2px;font-size:12px;line-height:16px;color:#000;letter-spacing:-0.725px;">Monter</div></div>
<div class="a" style="left:1371px;top:505.3px;width:248px;height:28.2px;background:#e9e9e9;border:1px solid #adadad"></div><svg class="a" style="left:1465px;top:512.4px" width="14" height="14" viewBox="0 0 14 14"><path d="M5 0 H9 V5 H13 L7 11 L1 5 H5Z" fill="#e0101a"/><rect x="0" y="12" width="14" height="2" fill="#e0101a"/></svg><div class="t" style="left:1484.7px;top:511.4px;font-size:12px;line-height:16px;color:#000;letter-spacing:-0.982px;">Minimiser</div>
<div class="a" style="left:1343px;top:572px;width:248px;height:274px;background:#fff;"></div>
<div class="t" style="left:1346.3px;top:574.6px;font-size:12px;line-height:16px;color:#999;letter-spacing:-0.067px;">Contrôle des interrupteurs</div>
<div class="a" style="left:1570px;top:573.5px;width:19px;height:18.5px;background:#efefef;"></div>
<div class="a" style="left:1347px;top:606px;width:201px;height:16px;border-top:1px solid #a0a0a0;border-left:1px solid #a0a0a0;border-right:1px solid #f2f2f2;border-bottom:1px solid #f4f4f4;background:#fff;border-right:none"></div>
<div class="t" style="left:1352.0px;top:606.0px;font-size:12px;line-height:16px;color:#000;letter-spacing:-0.829px;">MiniPC</div>
<div class="a" style="left:1559px;top:604px;width:25.5px;height:23px;background:#d2e8f8;border:1px solid #2a78c4"></div>
<div class="a" style="left:1564.3px;top:608px;width:15px;height:14.6px;background:#ff4a14;"></div>
<div class="a" style="left:1347px;top:631px;width:201px;height:16px;border-top:1px solid #a0a0a0;border-left:1px solid #a0a0a0;border-right:1px solid #f2f2f2;border-bottom:1px solid #f4f4f4;background:#fff;border-right:none"></div>
<div class="t" style="left:1352.0px;top:631.0px;font-size:12px;line-height:16px;color:#000;letter-spacing:-1.166px;">CCD</div>
<div class="a" style="left:1559px;top:629px;width:25.5px;height:23px;background:#d2e8f8;border:1px solid #2a78c4"></div>
<div class="a" style="left:1564.3px;top:633px;width:15px;height:14.6px;background:#ff4a14;"></div>
<div class="a" style="left:1347px;top:656px;width:201px;height:16px;border-top:1px solid #a0a0a0;border-left:1px solid #a0a0a0;border-right:1px solid #f2f2f2;border-bottom:1px solid #f4f4f4;background:#fff;border-right:none"></div>
<div class="t" style="left:1352.0px;top:656.0px;font-size:12px;line-height:16px;color:#000;letter-spacing:-0.908px;">FOCUS_MONTURE_MOXA</div>
<div class="a" style="left:1559px;top:654px;width:25.5px;height:23px;background:#e9e9e9;border:1px solid #adadad"></div>
<div class="a" style="left:1564.3px;top:658px;width:15px;height:14.6px;background:#18f018;"></div>
<div class="a" style="left:1347px;top:681px;width:201px;height:16px;border-top:1px solid #a0a0a0;border-left:1px solid #a0a0a0;border-right:1px solid #f2f2f2;border-bottom:1px solid #f4f4f4;background:#fff;border-right:none"></div>
<div class="t" style="left:1352.0px;top:681.0px;font-size:12px;line-height:16px;color:#000;letter-spacing:-0.829px;">RESISTANCE</div>
<div class="a" style="left:1559px;top:679px;width:25.5px;height:23px;background:#e9e9e9;border:1px solid #adadad"></div>
<div class="a" style="left:1564.3px;top:683px;width:15px;height:14.6px;background:#18f018;"></div>
<div class="a" style="left:1386px;top:702.5px;width:159px;height:22px;background:#e9e9e9;border:1px solid #adadad;"><div class="t" style="left:56.5px;top:2.5px;font-size:12px;line-height:16px;color:#000;letter-spacing:-0.735px;">Rafraichir</div></div>
<div class="a" style="left:1344px;top:727.5px;width:245px;height:27.5px;background:#e9e9e9;border:1px solid #adadad"></div><svg class="a" style="left:1436px;top:734.25px" width="14" height="14" viewBox="0 0 14 14"><path d="M5 0 H9 V5 H13 L7 11 L1 5 H5Z" fill="#e0101a"/><rect x="0" y="12" width="14" height="2" fill="#e0101a"/></svg><div class="t" style="left:1455.5px;top:733.2px;font-size:12px;line-height:16px;color:#000;letter-spacing:-0.982px;">Minimiser</div>
<div class="a" style="left:1344px;top:757px;width:245px;height:88px;border:1px solid #adadad;background:#fff;overflow:hidden"></div>
<div class="t" style="left:1346.3px;top:759.0px;font-size:12px;line-height:16px;color:#000;letter-spacing:-0.534px;">07/03/2018 12:21:57 : Requête système, Lunette |</div>
<div class="t" style="left:1346.3px;top:771.8px;font-size:12px;line-height:16px;color:#000;letter-spacing:-0.536px;">07/03/2018 12:21:58 : OK, Réponse(get) de l'interl</div>
<div class="t" style="left:1346.3px;top:784.6px;font-size:12px;line-height:16px;color:#000;letter-spacing:-0.462px;">07/03/2018 12:21:59 : Active port n°2 sur ACTIF,ir</div>
<div class="t" style="left:1346.3px;top:797.4px;font-size:12px;line-height:16px;color:#000;letter-spacing:-0.546px;">07/03/2018 12:22:00 : OK, Réponse(set) de l'interf</div>
<div class="a" style="left:1345px;top:827px;width:243px;height:17px;background:#fff;"></div>
<svg class="a" style="left:1349px;top:830.5px" width="8" height="10" viewBox="0 0 8 10"><path d="M6 1 L2 5 L6 9" fill="none" stroke="#444" stroke-width="1.6"/></svg>
<svg class="a" style="left:1575.5px;top:830.5px" width="8" height="10" viewBox="0 0 8 10"><path d="M2 1 L6 5 L2 9" fill="none" stroke="#444" stroke-width="1.6"/></svg>
<div class="a" style="left:1362.6px;top:828.6px;width:68px;height:13.4px;background:#cdcdcd;"></div>
<div class="a" style="left:1898px;top:82px;width:22px;height:928px;background:#fff;"></div>
<svg class="a" style="left:1904.5px;top:87.5px" width="10" height="8" viewBox="0 0 10 8"><path d="M1 6 L5 2 L9 6" fill="none" stroke="#555" stroke-width="1.6"/></svg>
<svg class="a" style="left:1904px;top:997px" width="10" height="8" viewBox="0 0 10 8"><path d="M1 2 L5 6 L9 2" fill="none" stroke="#555" stroke-width="1.6"/></svg>
<div class="a" style="left:1902.5px;top:99.7px;width:14.2px;height:833px;background:#cdcdcd;"></div>
<svg class="a" style="left:1892px;top:937px" width="28" height="52" viewBox="0 0 28 52"><path d="M3 0 H28 V52 L6 40 Q3 39 3 36Z" fill="#595959"/><rect x="8" y="6" width="20" height="20" rx="4" fill="#1c6fd0"/><circle cx="18" cy="16" r="7.2" fill="#fff"/><path d="M12.5 16 L15.5 13.5 V15.2 H20.5 V13.5 L23.5 16 L20.5 18.5 V16.8 H15.5 V18.5Z" fill="#1c6fd0"/></svg>
<div class="a" style="left:1680px;top:566px;width:238px;height:286px;background:#fff;"></div>
<div class="t" style="left:1684.1px;top:568.8px;font-size:12px;line-height:16px;color:#999;letter-spacing:-0.266px;">Roue à Filtres interne CCD (n°1)</div>
<div class="a" style="left:1896px;top:567px;width:19px;height:18.5px;background:#efefef;"></div>
<div class="a" style="left:1682px;top:596.5px;width:233.5px;height:119px;border:1px solid #dcdcdc"></div>
<div class="a" style="left:1687px;top:590px;width:99px;height:13px;background:#fff;"></div>
<div class="t" style="left:1689.0px;top:588.6px;font-size:12px;line-height:16px;color:#000;letter-spacing:-0.611px;">QSI FILTRES - v1.5</div>
<div class="a" style="left:1707px;top:606px;width:120.5px;height:15.5px;border-top:1px solid #a0a0a0;border-left:1px solid #a0a0a0;border-right:1px solid #f2f2f2;border-bottom:1px solid #f4f4f4;background:#fff;"></div>
<div class="a" style="left:1830px;top:606px;width:57.5px;height:15.5px;border-top:1px solid #a0a0a0;border-left:1px solid #a0a0a0;border-right:1px solid #f2f2f2;border-bottom:1px solid #f4f4f4;background:#fff;"></div>
<div class="t" style="left:1743.7px;top:605.7px;font-size:12px;line-height:16px;color:#000;letter-spacing:-0.784px;">Nom Filtre</div>
<div class="t" style="left:1834.7px;top:605.7px;font-size:12px;line-height:16px;color:#000;letter-spacing:-0.833px;">Déc. (mm)</div>
<div class="a" style="left:1686.9px;top:625.4px;width:12.7px;height:12.7px;border:1px solid #333;background:#fff"></div>
<div class="a" style="left:1707px;top:624.0px;width:120.5px;height:15.5px;border-top:1px solid #a0a0a0;border-left:1px solid #a0a0a0;border-right:1px solid #f2f2f2;border-bottom:1px solid #f4f4f4;background:#fff;"></div>
<div class="a" style="left:1830px;top:624.0px;width:57.5px;height:15.5px;border-top:1px solid #a0a0a0;border-left:1px solid #a0a0a0;border-right:1px solid #f2f2f2;border-bottom:1px solid #f4f4f4;background:#fff;"></div>
<div class="t" style="left:1763.7px;top:624.0px;font-size:12px;line-height:16px;color:#000;">L</div>
<div class="t" style="left:1845.0px;top:624.0px;font-size:12px;line-height:16px;color:#000;letter-spacing:-0.601px;">0.000</div>
<div class="a" style="left:1686.9px;top:643.4px;width:12.7px;height:12.7px;border:1px solid #333;background:#fff"></div>
<div class="a" style="left:1707px;top:642.0px;width:120.5px;height:15.5px;border-top:1px solid #a0a0a0;border-left:1px solid #a0a0a0;border-right:1px solid #f2f2f2;border-bottom:1px solid #f4f4f4;background:#fff;"></div>
<div class="a" style="left:1830px;top:642.0px;width:57.5px;height:15.5px;border-top:1px solid #a0a0a0;border-left:1px solid #a0a0a0;border-right:1px solid #f2f2f2;border-bottom:1px solid #f4f4f4;background:#fff;"></div>
<div class="t" style="left:1760.3px;top:642.0px;font-size:12px;line-height:16px;color:#000;">Sii</div>
<div class="t" style="left:1845.0px;top:642.0px;font-size:12px;line-height:16px;color:#000;letter-spacing:-0.601px;">0.294</div>
<div class="a" style="left:1686.9px;top:661.3px;width:12.7px;height:12.7px;border:1px solid #333;background:#fff"></div>
<div class="a" style="left:1707px;top:659.9px;width:120.5px;height:15.5px;border-top:1px solid #a0a0a0;border-left:1px solid #a0a0a0;border-right:1px solid #f2f2f2;border-bottom:1px solid #f4f4f4;background:#fff;"></div>
<div class="a" style="left:1830px;top:659.9px;width:57.5px;height:15.5px;border-top:1px solid #a0a0a0;border-left:1px solid #a0a0a0;border-right:1px solid #f2f2f2;border-bottom:1px solid #f4f4f4;background:#fff;"></div>
<div class="t" style="left:1759.3px;top:659.9px;font-size:12px;line-height:16px;color:#000;">Ha</div>
<div class="t" style="left:1845.0px;top:659.9px;font-size:12px;line-height:16px;color:#000;letter-spacing:-0.601px;">0.168</div>
<div class="a" style="left:1686.9px;top:679.3px;width:12.7px;height:12.7px;border:1px solid #333;background:#fff"></div>
<div class="a" style="left:1707px;top:677.9px;width:120.5px;height:15.5px;border-top:1px solid #a0a0a0;border-left:1px solid #a0a0a0;border-right:1px solid #f2f2f2;border-bottom:1px solid #f4f4f4;background:#fff;"></div>
<div class="a" style="left:1830px;top:677.9px;width:57.5px;height:15.5px;border-top:1px solid #a0a0a0;border-left:1px solid #a0a0a0;border-right:1px solid #f2f2f2;border-bottom:1px solid #f4f4f4;background:#fff;"></div>
<div class="t" style="left:1758.3px;top:677.9px;font-size:12px;line-height:16px;color:#000;">Oiii</div>
<div class="t" style="left:1845.0px;top:677.9px;font-size:12px;line-height:16px;color:#000;letter-spacing:-0.601px;">0.049</div>
<div class="a" style="left:1686.9px;top:697.2px;width:12.7px;height:12.7px;border:1px solid #333;background:#fff"></div>
<div class="a" style="left:1707px;top:695.8px;width:120.5px;height:15.5px;border-top:1px solid #a0a0a0;border-left:1px solid #a0a0a0;border-right:1px solid #f2f2f2;border-bottom:1px solid #f4f4f4;background:#fff;"></div>
<div class="a" style="left:1830px;top:695.8px;width:57.5px;height:15.5px;border-top:1px solid #a0a0a0;border-left:1px solid #a0a0a0;border-right:1px solid #f2f2f2;border-bottom:1px solid #f4f4f4;background:#fff;"></div>
<div class="t" style="left:1742.5px;top:695.8px;font-size:12px;line-height:16px;color:#000;letter-spacing:-0.856px;">Johnson V</div>
<div class="t" style="left:1843.2px;top:695.8px;font-size:12px;line-height:16px;color:#000;letter-spacing:-0.567px;">-0.084</div>
<div class="a" style="left:1686.6px;top:721px;width:118px;height:15.6px;border-top:1px solid #a0a0a0;border-left:1px solid #a0a0a0;border-right:1px solid #f2f2f2;border-bottom:1px solid #f4f4f4;background:#fff;"></div>
<div class="t" style="left:1691.4px;top:721.0px;font-size:12px;line-height:16px;color:#000;letter-spacing:-0.672px;">Filtre de référence</div>
<div class="a" style="left:1807px;top:721px;width:66.5px;height:15.6px;border-top:1px solid #a0a0a0;border-left:1px solid #a0a0a0;border-right:1px solid #f2f2f2;border-bottom:1px solid #f4f4f4;background:#fff;"></div>
<div class="t" style="left:1836.3px;top:721.0px;font-size:12px;line-height:16px;color:#000;">1</div>
<div class="a" style="left:1686.6px;top:742px;width:118px;height:14.6px;border-top:1px solid #a0a0a0;border-left:1px solid #a0a0a0;border-right:1px solid #f2f2f2;border-bottom:1px solid #f4f4f4;background:#fff;"></div>
<div class="t" style="left:1691.4px;top:740.7px;font-size:12px;line-height:16px;color:#000;letter-spacing:-0.749px;">Foc de référence (mm)</div>
<div class="a" style="left:1807px;top:742px;width:66.5px;height:14.6px;border-top:1px solid #a0a0a0;border-left:1px solid #a0a0a0;border-right:1px solid #f2f2f2;border-bottom:1px solid #f4f4f4;background:#fff;"></div>
<div class="t" style="left:1823.7px;top:740.7px;font-size:12px;line-height:16px;color:#000;letter-spacing:-0.500px;">10.976</div>
<div class="a" style="left:1876.7px;top:742px;width:35px;height:14.6px;border-top:1px solid #a0a0a0;border-left:1px solid #a0a0a0;border-right:1px solid #f2f2f2;border-bottom:1px solid #f4f4f4;background:#fff;"></div>
<div class="t" style="left:1886.5px;top:740.7px;font-size:12px;line-height:16px;color:#000;">Fix</div>
<div class="a" style="left:1688px;top:766.3px;width:12.5px;height:12.5px;border:1px solid #bcbcbc;background:#fff"></div><svg class="a" style="left:1688px;top:766.3px" width="12.5" height="12.5" viewBox="0 0 13 13"><path d="M2.5 6.5 L5.3 9.3 L10.5 3.2" fill="none" stroke="#bcbcbc" stroke-width="1.3"/></svg>
<div class="t" style="left:1704.4px;top:764.7px;font-size:12px;line-height:16px;color:#8a8a8a;letter-spacing:-0.645px;">Synchroniser la focalisation</div>
<div class="a" style="left:1844.4px;top:766px;width:67px;height:14.2px;background:#cccccc;border:1px solid #bfbfbf;"><div class="t" style="left:3.5px;top:-1.4px;font-size:12px;line-height:16px;color:#8a8a8a;letter-spacing:-0.548px;">Foc ref. sav.</div></div>
<div class="t" style="left:1688.0px;top:786.0px;font-size:12px;line-height:16px;color:#a0a0a0;letter-spacing:-0.668px;">Etat :   ......</div>
<div class="a" style="left:1681.7px;top:805.5px;width:233.5px;height:22.2px;background:#e9e9e9;border:2px solid #0078d7"></div><svg class="a" style="left:1768px;top:809.6px" width="14" height="14" viewBox="0 0 14 14"><path d="M5 0 H9 V5 H13 L7 11 L1 5 H5Z" fill="#e0101a"/><rect x="0" y="12" width="14" height="2" fill="#e0101a"/></svg><div class="t" style="left:1787.6px;top:808.6px;font-size:12px;line-height:16px;color:#000;letter-spacing:-0.982px;">Minimiser</div>
<div class="t" style="left:1683.2px;top:831.6px;font-size:12px;line-height:16px;color:#000;letter-spacing:-0.175px;">Etat : OK, connecté et prêt</div>
<!-- part_bottom -->
<div class="a" style="left:0px;top:1010px;width:1920px;height:30px;background:#fff;"></div>
<div class="a" style="left:0px;top:1010px;width:1920px;height:1px;background:#d9d9d9;"></div>
<div class="a" style="left:399px;top:1011px;width:1px;height:29px;background:#d9d9d9;"></div>
<div class="a" style="left:799px;top:1011px;width:1px;height:29px;background:#d9d9d9;"></div>
<div class="a" style="left:0px;top:1040px;width:1920px;height:40px;background:#000;"></div>
<svg class="a" style="left:16px;top:1052.5px" width="16" height="16" viewBox="0 0 16 16"><path d="M0 2.3 L6.6 1.4 V7.6 H0Z M7.4 1.3 L16 0 V7.6 H7.4Z M0 8.4 H6.6 V14.6 L0 13.7Z M7.4 8.4 H16 V16 L7.4 14.7Z" fill="#fff"/></svg>
<div class="a" style="left:48px;top:1040px;width:344px;height:40px;background:#fff;"></div>
<div class="a" style="left:57.5px;top:1050px;width:21px;height:21px;border:3px solid #111;border-radius:50%"></div>
<div class="t" style="left:88.5px;top:1050.5px;font-size:15px;line-height:19px;color:#3a3a3a;letter-spacing:-0.156px;">Taper ici pour rechercher</div>
<svg class="a" style="left:365px;top:1052px" width="12" height="17" viewBox="0 0 12 17"><rect x="3.5" y="0.5" width="5" height="10" rx="2.5" fill="none" stroke="#333" stroke-width="1.1"/><path d="M1 7.5 Q1 13 6 13 Q11 13 11 7.5 M6 13 V16 M3 16 H9" fill="none" stroke="#333" stroke-width="1.1"/></svg>
<svg class="a" style="left:406px;top:1053px" width="20" height="15" viewBox="0 0 20 15"><rect x="4.5" y="1" width="11" height="13" fill="none" stroke="#fff" stroke-width="1.3"/><path d="M2.5 3 H0.7 V12 H2.5 M17.5 3 H19.3 V12 H17.5" fill="none" stroke="#fff" stroke-width="1.3"/></svg>
<svg class="a" style="left:457.5px;top:1049.5px" width="20" height="21" viewBox="0 0 20 21"><path d="M1 10 Q1.5 1 10.5 1 Q19 1 19 10.5 V12 H7 Q7.5 16 12 16 Q15 16 18 14.5 V18.5 Q15 20 11 20 Q2 20 2 11.5 Q2.5 7 6.5 5 Q3 6.5 1 10Z M7 8.5 H13.5 Q13.5 5 10.3 5 Q7.5 5 7 8.5Z" fill="#2a8ae8" fill-rule="evenodd"/></svg>
<svg class="a" style="left:504px;top:1051px" width="22" height="18" viewBox="0 0 22 18"><path d="M0 2 H8 L10 4 H22 V18 H0Z" fill="#f0c048"/><rect x="0" y="6" width="22" height="12" fill="#fbdc78"/><rect x="5" y="10" width="12" height="8" fill="#3a9ae8"/><rect x="7" y="14" width="8" height="4" fill="#fbdc78"/></svg>
<svg class="a" style="left:556px;top:1048.5px" width="17" height="22" viewBox="0 0 17 22"><rect x="0" y="0" width="17" height="22" fill="#f4f4f4"/><rect x="2" y="2" width="13" height="5" fill="#222"/><g fill="#222"><rect x="2" y="9" width="3" height="2.6"/><rect x="7" y="9" width="3" height="2.6"/><rect x="12" y="9" width="3" height="2.6"/><rect x="2" y="13.3" width="3" height="2.6"/><rect x="7" y="13.3" width="3" height="2.6"/><rect x="12" y="13.3" width="3" height="2.6"/><rect x="2" y="17.6" width="3" height="2.6"/><rect x="7" y="17.6" width="3" height="2.6"/><rect x="12" y="17.6" width="3" height="2.6"/></g></svg>
<svg class="a" style="left:601.5px;top:1049px" width="25" height="20" viewBox="0 0 25 20"><rect width="25" height="20" fill="#6a6a6a"/><path d="M0 18 L22 1 L25 4 L6 20 H0Z" fill="#d8d8d8"/><path d="M0 20 L25 8 V20Z" fill="#444"/></svg>
<div class="a" style="left:639px;top:1040px;width:160px;height:40px;background:#383838;"></div>
<div class="a" style="left:639px;top:1078px;width:160px;height:2px;background:#8ab8e6;"></div>
<svg class="a" style="left:649px;top:1048.5px" width="22" height="22" viewBox="0 0 22 22"><path d="M11 3 L20.5 18.5 L1.5 18.5Z" fill="none" stroke-linejoin="round" stroke-width="3" stroke="#222"/><path d="M11 3 L20.5 18.5" stroke="#e8d020" stroke-width="3" stroke-linecap="round"/><path d="M11 3 L15 9.5" stroke="#e84a10" stroke-width="3" stroke-linecap="round"/><path d="M11 3 L1.5 18.5" stroke="#28c050" stroke-width="3" stroke-linecap="round"/><path d="M5.5 12 L1.5 18.5 L8 18.5" stroke="#2858e0" stroke-width="3" stroke-linecap="round" fill="none"/><path d="M8 18.5 L20.5 18.5" stroke="#9030c0" stroke-width="3" stroke-linecap="round"/></svg>
<div class="t" style="left:677.0px;top:1051.5px;font-size:12px;line-height:16px;color:#fff;letter-spacing:-0.251px;">PRISM - Version Av...</div>
<svg class="a" style="left:812.5px;top:1050px" width="22" height="20" viewBox="0 0 22 20"><path d="M1 10 Q11 0 21 10 Q11 20 1 10Z" fill="none" stroke="#f09020" stroke-width="1.6"/><circle cx="11" cy="10" r="3.6" fill="#e04010"/><path d="M4 3 L6 6 M9 1 L10 4.5 M14 1.5 L13 4.5 M18.5 3.5 L16.5 6" stroke="#f09020" stroke-width="1.4"/></svg>
<svg class="a" style="left:1557.5px;top:1053px" width="16" height="16" viewBox="0 0 16 16"><circle cx="5" cy="7" r="2.6" fill="none" stroke="#fff" stroke-width="1.2"/><path d="M0.6 15 Q1 10.5 5 10.5 Q9 10.5 9.4 15" fill="none" stroke="#fff" stroke-width="1.2"/><circle cx="11.5" cy="3.2" r="2.3" fill="none" stroke="#fff" stroke-width="1.2"/><path d="M9 8 Q11.5 6.5 15 8.5" fill="none" stroke="#fff" stroke-width="1.2"/></svg>
<svg class="a" style="left:1592.5px;top:1052px" width="17" height="17" viewBox="0 0 17 17"><path d="M7 0.5 L13.5 2.5 V8 Q13 13 7 15.5 Q1 13 0.5 8 V2.5Z" fill="#fff"/><path d="M7 1 V15 M1 7.5 H13" stroke="#222" stroke-width="1.2"/><path d="M11.5 8 L16.5 16 H6.5Z" fill="#f0c020"/><rect x="11" y="10.5" width="1.2" height="3" fill="#000"/></svg>
<svg class="a" style="left:1618px;top:1052px" width="13" height="16" viewBox="0 0 13 16"><path d="M0 5 H3 L9 0 V16 L3 11 H0Z" fill="#e05030"/><path d="M9 0 V16" stroke="#f8a080" stroke-width="1"/></svg>
<svg class="a" style="left:1641px;top:1052.5px" width="14" height="15" viewBox="0 0 14 15"><rect width="14" height="15" rx="1" fill="#3a9ae0"/><rect x="2" y="2" width="10" height="7" fill="#c8e4f8"/><path d="M3 11 H11 M3 13 H9" stroke="#f0d040" stroke-width="1.2"/></svg>
<svg class="a" style="left:1665px;top:1052.5px" width="15" height="15" viewBox="0 0 15 15"><rect width="15" height="15" rx="3" fill="#1c78e0"/><circle cx="7.5" cy="7.5" r="5.4" fill="#fff"/><path d="M3.4 7.5 L5.8 5.5 V6.8 H9.2 V5.5 L11.6 7.5 L9.2 9.5 V8.2 H5.8 V9.5Z" fill="#1c78e0"/></svg>
<svg class="a" style="left:1691px;top:1053px" width="14" height="14" viewBox="0 0 14 14"><path d="M1 13 Q1 2 13 1" fill="none" stroke="#fff" stroke-width="1.3"/><path d="M4.5 13 Q5 6 13 5" fill="none" stroke="#fff" stroke-width="1.3"/><path d="M8 13 Q8.5 9.5 13 9" fill="none" stroke="#fff" stroke-width="1.3"/><circle cx="12" cy="12.5" r="1.3" fill="#fff"/></svg>
<svg class="a" style="left:1712.5px;top:1052.5px" width="17" height="15" viewBox="0 0 17 15"><path d="M0.6 5 H3 L7 1.5 V13.5 L3 10 H0.6Z" fill="none" stroke="#fff" stroke-width="1.1"/><path d="M9.5 5 Q11 7.5 9.5 10 M11.5 3 Q14.5 7.5 11.5 12 M13.6 1.5 Q17.5 7.5 13.6 13.5" fill="none" stroke="#fff" stroke-width="1"/></svg>
<svg class="a" style="left:1741px;top:1051.5px" width="18" height="17" viewBox="0 0 18 17"><path d="M2 15 Q0 9 5 8 Q9 7.5 7 12 Q5 16 9 13 L13 4 Q14 1 16 2.5 Q17 4 15 6 L9 13" fill="none" stroke="#fff" stroke-width="1.3"/></svg>
<svg class="a" style="left:1769px;top:1054px" width="24" height="13" viewBox="0 0 24 13"><rect x="0.6" y="0.6" width="22.8" height="11.8" fill="none" stroke="#fff" stroke-width="1.2"/><path d="M3 3.5 H21 M3 6 H21" stroke="#fff" stroke-width="1.1" stroke-dasharray="1.4 1.2"/><path d="M6 9.3 H18" stroke="#fff" stroke-width="1.2"/></svg>
<div class="t" style="left:1818.5px;top:1042.5px;font-size:12px;line-height:16px;color:#fff;letter-spacing:-0.706px;">16:32</div>
<div class="t" style="left:1803.5px;top:1060.5px;font-size:12px;line-height:16px;color:#fff;letter-spacing:-0.256px;">07/03/2018</div>
<svg class="a" style="left:1879px;top:1051.5px" width="17" height="16" viewBox="0 0 17 16"><path d="M0.6 0.6 H16.4 V12 H6 L3 15 V12 H0.6Z" fill="#fff"/><path d="M3 3.5 H14 M3 6 H14 M3 8.5 H10" stroke="#000" stroke-width="1.1"/></svg>
<div class="a" style="left:1887px;top:1059px;width:14px;height:14px;border-radius:50%;background:#3a3a3a;border:1px solid #000"></div>
<div class="t" style="left:1891.3px;top:1058.8px;font-size:11px;line-height:15px;color:#fff;">1</div>
<div class="a" style="left:1914px;top:1040px;width:1px;height:40px;background:#555;"></div>
</body></html>
